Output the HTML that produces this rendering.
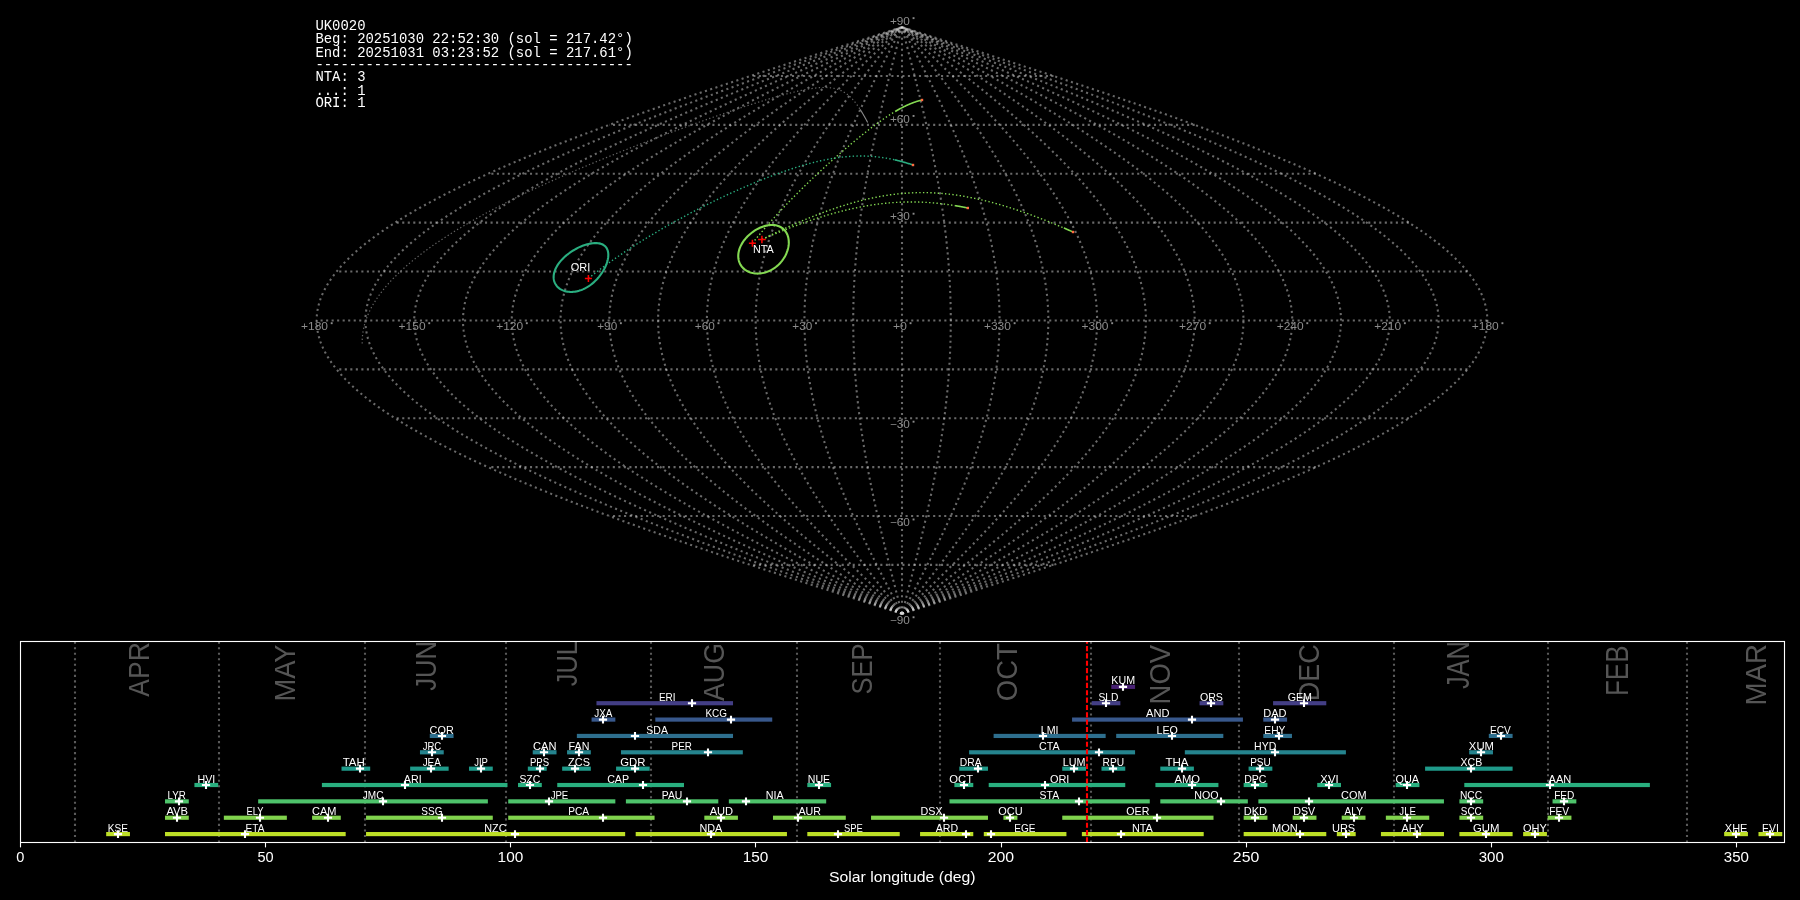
<!DOCTYPE html>
<html><head><meta charset="utf-8"><style>
html,body{margin:0;padding:0;background:#000;width:1800px;height:900px;overflow:hidden}
svg{display:block;will-change:transform}
</style></head><body>
<svg width="1800" height="900" viewBox="0 0 1800 900">
<rect width="1800" height="900" fill="#000"/>
<g fill="none" stroke="#d8d8d8" stroke-opacity="0.485" stroke-width="2.08" stroke-dasharray="2.08 3.44">
<path d="M902.00 613.81 L907.11 612.18 L912.22 610.55 L917.32 608.92 L922.43 607.29 L927.53 605.66 L932.64 604.03 L937.74 602.40 L942.83 600.77 L947.93 599.14 L953.02 597.51 L958.10 595.88 L963.19 594.25 L968.26 592.62 L973.34 590.99 L978.40 589.36 L983.47 587.73 L988.52 586.10 L993.57 584.47 L998.61 582.84 L1003.65 581.21 L1008.67 579.58 L1013.69 577.95 L1018.70 576.32 L1023.70 574.69 L1028.70 573.06 L1033.68 571.43 L1038.65 569.80 L1043.61 568.17 L1048.56 566.54 L1053.50 564.91 L1058.43 563.28 L1063.35 561.65 L1068.25 560.02 L1073.14 558.39 L1078.02 556.76 L1082.89 555.13 L1087.74 553.50 L1092.57 551.87 L1097.40 550.24 L1102.20 548.62 L1107.00 546.99 L1111.77 545.36 L1116.54 543.73 L1121.28 542.10 L1126.01 540.47 L1130.72 538.84 L1135.41 537.21 L1140.09 535.58 L1144.74 533.95 L1149.38 532.32 L1154.00 530.69 L1158.60 529.06 L1163.19 527.43 L1167.75 525.80 L1172.29 524.17 L1176.81 522.54 L1181.31 520.91 L1185.79 519.28 L1190.25 517.65 L1194.68 516.02 L1199.09 514.39 L1203.48 512.76 L1207.85 511.13 L1212.19 509.50 L1216.51 507.87 L1220.81 506.24 L1225.08 504.61 L1229.33 502.98 L1233.55 501.35 L1237.75 499.72 L1241.92 498.09 L1246.07 496.46 L1250.19 494.83 L1254.28 493.20 L1258.34 491.57 L1262.38 489.94 L1266.40 488.31 L1270.38 486.68 L1274.33 485.05 L1278.26 483.42 L1282.16 481.80 L1286.03 480.17 L1289.87 478.54 L1293.68 476.91 L1297.46 475.28 L1301.21 473.65 L1304.94 472.02 L1308.63 470.39 L1312.28 468.76 L1315.91 467.13 L1319.51 465.50 L1323.07 463.87 L1326.61 462.24 L1330.11 460.61 L1333.57 458.98 L1337.01 457.35 L1340.41 455.72 L1343.78 454.09 L1347.11 452.46 L1350.41 450.83 L1353.68 449.20 L1356.91 447.57 L1360.11 445.94 L1363.27 444.31 L1366.40 442.68 L1369.49 441.05 L1372.55 439.42 L1375.57 437.79 L1378.55 436.16 L1381.50 434.53 L1384.41 432.90 L1387.29 431.27 L1390.12 429.64 L1392.92 428.01 L1395.69 426.38 L1398.41 424.75 L1401.10 423.12 L1403.75 421.49 L1406.36 419.86 L1408.94 418.24 L1411.47 416.61 L1413.97 414.98 L1416.42 413.35 L1418.84 411.72 L1421.22 410.09 L1423.56 408.46 L1425.86 406.83 L1428.12 405.20 L1430.34 403.57 L1432.52 401.94 L1434.65 400.31 L1436.75 398.68 L1438.81 397.05 L1440.83 395.42 L1442.80 393.79 L1444.74 392.16 L1446.63 390.53 L1448.48 388.90 L1450.29 387.27 L1452.06 385.64 L1453.78 384.01 L1455.47 382.38 L1457.11 380.75 L1458.71 379.12 L1460.27 377.49 L1461.78 375.86 L1463.25 374.23 L1464.68 372.60 L1466.07 370.97 L1467.41 369.34 L1468.71 367.71 L1469.97 366.08 L1471.19 364.45 L1472.36 362.82 L1473.48 361.19 L1474.57 359.56 L1475.61 357.93 L1476.61 356.30 L1477.56 354.67 L1478.47 353.04 L1479.33 351.42 L1480.15 349.79 L1480.93 348.16 L1481.66 346.53 L1482.35 344.90 L1483.00 343.27 L1483.60 341.64 L1484.15 340.01 L1484.67 338.38 L1485.13 336.75 L1485.56 335.12 L1485.93 333.49 L1486.27 331.86 L1486.56 330.23 L1486.80 328.60 L1487.00 326.97 L1487.16 325.34 L1487.27 323.71 L1487.34 322.08 L1487.36 320.45 L1487.34 318.82 L1487.27 317.19 L1487.16 315.56 L1487.00 313.93 L1486.80 312.30 L1486.56 310.67 L1486.27 309.04 L1485.93 307.41 L1485.56 305.78 L1485.13 304.15 L1484.67 302.52 L1484.15 300.89 L1483.60 299.26 L1483.00 297.63 L1482.35 296.00 L1481.66 294.37 L1480.93 292.74 L1480.15 291.11 L1479.33 289.48 L1478.47 287.86 L1477.56 286.23 L1476.61 284.60 L1475.61 282.97 L1474.57 281.34 L1473.48 279.71 L1472.36 278.08 L1471.19 276.45 L1469.97 274.82 L1468.71 273.19 L1467.41 271.56 L1466.07 269.93 L1464.68 268.30 L1463.25 266.67 L1461.78 265.04 L1460.27 263.41 L1458.71 261.78 L1457.11 260.15 L1455.47 258.52 L1453.78 256.89 L1452.06 255.26 L1450.29 253.63 L1448.48 252.00 L1446.63 250.37 L1444.74 248.74 L1442.80 247.11 L1440.83 245.48 L1438.81 243.85 L1436.75 242.22 L1434.65 240.59 L1432.52 238.96 L1430.34 237.33 L1428.12 235.70 L1425.86 234.07 L1423.56 232.44 L1421.22 230.81 L1418.84 229.18 L1416.42 227.55 L1413.97 225.92 L1411.47 224.29 L1408.94 222.66 L1406.36 221.04 L1403.75 219.41 L1401.10 217.78 L1398.41 216.15 L1395.69 214.52 L1392.92 212.89 L1390.12 211.26 L1387.29 209.63 L1384.41 208.00 L1381.50 206.37 L1378.55 204.74 L1375.57 203.11 L1372.55 201.48 L1369.49 199.85 L1366.40 198.22 L1363.27 196.59 L1360.11 194.96 L1356.91 193.33 L1353.68 191.70 L1350.41 190.07 L1347.11 188.44 L1343.78 186.81 L1340.41 185.18 L1337.01 183.55 L1333.57 181.92 L1330.11 180.29 L1326.61 178.66 L1323.07 177.03 L1319.51 175.40 L1315.91 173.77 L1312.28 172.14 L1308.63 170.51 L1304.94 168.88 L1301.21 167.25 L1297.46 165.62 L1293.68 163.99 L1289.87 162.36 L1286.03 160.73 L1282.16 159.10 L1278.26 157.47 L1274.33 155.85 L1270.38 154.22 L1266.40 152.59 L1262.38 150.96 L1258.34 149.33 L1254.28 147.70 L1250.19 146.07 L1246.07 144.44 L1241.92 142.81 L1237.75 141.18 L1233.55 139.55 L1229.33 137.92 L1225.08 136.29 L1220.81 134.66 L1216.51 133.03 L1212.19 131.40 L1207.85 129.77 L1203.48 128.14 L1199.09 126.51 L1194.68 124.88 L1190.25 123.25 L1185.79 121.62 L1181.31 119.99 L1176.81 118.36 L1172.29 116.73 L1167.75 115.10 L1163.19 113.47 L1158.60 111.84 L1154.00 110.21 L1149.38 108.58 L1144.74 106.95 L1140.09 105.32 L1135.41 103.69 L1130.72 102.06 L1126.01 100.43 L1121.28 98.80 L1116.54 97.17 L1111.77 95.54 L1107.00 93.91 L1102.20 92.28 L1097.40 90.66 L1092.57 89.03 L1087.74 87.40 L1082.89 85.77 L1078.02 84.14 L1073.14 82.51 L1068.25 80.88 L1063.35 79.25 L1058.43 77.62 L1053.50 75.99 L1048.56 74.36 L1043.61 72.73 L1038.65 71.10 L1033.68 69.47 L1028.70 67.84 L1023.70 66.21 L1018.70 64.58 L1013.69 62.95 L1008.67 61.32 L1003.65 59.69 L998.61 58.06 L993.57 56.43 L988.52 54.80 L983.47 53.17 L978.40 51.54 L973.34 49.91 L968.26 48.28 L963.19 46.65 L958.10 45.02 L953.02 43.39 L947.93 41.76 L942.83 40.13 L937.74 38.50 L932.64 36.87 L927.53 35.24 L922.43 33.61 L917.32 31.98 L912.22 30.35 L907.11 28.72 L902.00 27.09"/>
<path d="M902.00 613.81 L906.68 612.18 L911.36 610.55 L916.05 608.92 L920.73 607.29 L925.41 605.66 L930.08 604.03 L934.76 602.40 L939.43 600.77 L944.10 599.14 L948.77 597.51 L953.43 595.88 L958.09 594.25 L962.74 592.62 L967.39 590.99 L972.04 589.36 L976.68 587.73 L981.31 586.10 L985.94 584.47 L990.56 582.84 L995.18 581.21 L999.78 579.58 L1004.38 577.95 L1008.98 576.32 L1013.56 574.69 L1018.14 573.06 L1022.70 571.43 L1027.26 569.80 L1031.81 568.17 L1036.35 566.54 L1040.88 564.91 L1045.39 563.28 L1049.90 561.65 L1054.40 560.02 L1058.88 558.39 L1063.35 556.76 L1067.81 555.13 L1072.26 553.50 L1076.69 551.87 L1081.11 550.24 L1085.52 548.62 L1089.91 546.99 L1094.29 545.36 L1098.66 543.73 L1103.01 542.10 L1107.34 540.47 L1111.66 538.84 L1115.96 537.21 L1120.25 535.58 L1124.52 533.95 L1128.77 532.32 L1133.00 530.69 L1137.22 529.06 L1141.42 527.43 L1145.60 525.80 L1149.77 524.17 L1153.91 522.54 L1158.03 520.91 L1162.14 519.28 L1166.22 517.65 L1170.29 516.02 L1174.33 514.39 L1178.36 512.76 L1182.36 511.13 L1186.34 509.50 L1190.30 507.87 L1194.24 506.24 L1198.16 504.61 L1202.05 502.98 L1205.92 501.35 L1209.77 499.72 L1213.59 498.09 L1217.39 496.46 L1221.17 494.83 L1224.92 493.20 L1228.65 491.57 L1232.35 489.94 L1236.03 488.31 L1239.68 486.68 L1243.31 485.05 L1246.91 483.42 L1250.48 481.80 L1254.03 480.17 L1257.55 478.54 L1261.04 476.91 L1264.51 475.28 L1267.95 473.65 L1271.36 472.02 L1274.74 470.39 L1278.09 468.76 L1281.42 467.13 L1284.72 465.50 L1287.98 463.87 L1291.22 462.24 L1294.43 460.61 L1297.61 458.98 L1300.76 457.35 L1303.87 455.72 L1306.96 454.09 L1310.02 452.46 L1313.04 450.83 L1316.04 449.20 L1319.00 447.57 L1321.93 445.94 L1324.83 444.31 L1327.70 442.68 L1330.53 441.05 L1333.33 439.42 L1336.10 437.79 L1338.84 436.16 L1341.54 434.53 L1344.21 432.90 L1346.84 431.27 L1349.45 429.64 L1352.01 428.01 L1354.55 426.38 L1357.05 424.75 L1359.51 423.12 L1361.94 421.49 L1364.33 419.86 L1366.69 418.24 L1369.02 416.61 L1371.30 414.98 L1373.56 413.35 L1375.77 411.72 L1377.95 410.09 L1380.10 408.46 L1382.20 406.83 L1384.27 405.20 L1386.31 403.57 L1388.31 401.94 L1390.27 400.31 L1392.19 398.68 L1394.08 397.05 L1395.92 395.42 L1397.74 393.79 L1399.51 392.16 L1401.24 390.53 L1402.94 388.90 L1404.60 387.27 L1406.22 385.64 L1407.80 384.01 L1409.35 382.38 L1410.85 380.75 L1412.32 379.12 L1413.75 377.49 L1415.13 375.86 L1416.48 374.23 L1417.79 372.60 L1419.06 370.97 L1420.30 369.34 L1421.49 367.71 L1422.64 366.08 L1423.75 364.45 L1424.83 362.82 L1425.86 361.19 L1426.85 359.56 L1427.81 357.93 L1428.72 356.30 L1429.59 354.67 L1430.43 353.04 L1431.22 351.42 L1431.97 349.79 L1432.69 348.16 L1433.36 346.53 L1433.99 344.90 L1434.58 343.27 L1435.13 341.64 L1435.64 340.01 L1436.11 338.38 L1436.54 336.75 L1436.93 335.12 L1437.27 333.49 L1437.58 331.86 L1437.84 330.23 L1438.07 328.60 L1438.25 326.97 L1438.40 325.34 L1438.50 323.71 L1438.56 322.08 L1438.58 320.45 L1438.56 318.82 L1438.50 317.19 L1438.40 315.56 L1438.25 313.93 L1438.07 312.30 L1437.84 310.67 L1437.58 309.04 L1437.27 307.41 L1436.93 305.78 L1436.54 304.15 L1436.11 302.52 L1435.64 300.89 L1435.13 299.26 L1434.58 297.63 L1433.99 296.00 L1433.36 294.37 L1432.69 292.74 L1431.97 291.11 L1431.22 289.48 L1430.43 287.86 L1429.59 286.23 L1428.72 284.60 L1427.81 282.97 L1426.85 281.34 L1425.86 279.71 L1424.83 278.08 L1423.75 276.45 L1422.64 274.82 L1421.49 273.19 L1420.30 271.56 L1419.06 269.93 L1417.79 268.30 L1416.48 266.67 L1415.13 265.04 L1413.75 263.41 L1412.32 261.78 L1410.85 260.15 L1409.35 258.52 L1407.80 256.89 L1406.22 255.26 L1404.60 253.63 L1402.94 252.00 L1401.24 250.37 L1399.51 248.74 L1397.74 247.11 L1395.92 245.48 L1394.08 243.85 L1392.19 242.22 L1390.27 240.59 L1388.31 238.96 L1386.31 237.33 L1384.27 235.70 L1382.20 234.07 L1380.10 232.44 L1377.95 230.81 L1375.77 229.18 L1373.56 227.55 L1371.30 225.92 L1369.02 224.29 L1366.69 222.66 L1364.33 221.04 L1361.94 219.41 L1359.51 217.78 L1357.05 216.15 L1354.55 214.52 L1352.01 212.89 L1349.45 211.26 L1346.84 209.63 L1344.21 208.00 L1341.54 206.37 L1338.84 204.74 L1336.10 203.11 L1333.33 201.48 L1330.53 199.85 L1327.70 198.22 L1324.83 196.59 L1321.93 194.96 L1319.00 193.33 L1316.04 191.70 L1313.04 190.07 L1310.02 188.44 L1306.96 186.81 L1303.87 185.18 L1300.76 183.55 L1297.61 181.92 L1294.43 180.29 L1291.22 178.66 L1287.98 177.03 L1284.72 175.40 L1281.42 173.77 L1278.09 172.14 L1274.74 170.51 L1271.36 168.88 L1267.95 167.25 L1264.51 165.62 L1261.04 163.99 L1257.55 162.36 L1254.03 160.73 L1250.48 159.10 L1246.91 157.47 L1243.31 155.85 L1239.68 154.22 L1236.03 152.59 L1232.35 150.96 L1228.65 149.33 L1224.92 147.70 L1221.17 146.07 L1217.39 144.44 L1213.59 142.81 L1209.77 141.18 L1205.92 139.55 L1202.05 137.92 L1198.16 136.29 L1194.24 134.66 L1190.30 133.03 L1186.34 131.40 L1182.36 129.77 L1178.36 128.14 L1174.33 126.51 L1170.29 124.88 L1166.22 123.25 L1162.14 121.62 L1158.03 119.99 L1153.91 118.36 L1149.77 116.73 L1145.60 115.10 L1141.42 113.47 L1137.22 111.84 L1133.00 110.21 L1128.77 108.58 L1124.52 106.95 L1120.25 105.32 L1115.96 103.69 L1111.66 102.06 L1107.34 100.43 L1103.01 98.80 L1098.66 97.17 L1094.29 95.54 L1089.91 93.91 L1085.52 92.28 L1081.11 90.66 L1076.69 89.03 L1072.26 87.40 L1067.81 85.77 L1063.35 84.14 L1058.88 82.51 L1054.40 80.88 L1049.90 79.25 L1045.39 77.62 L1040.88 75.99 L1036.35 74.36 L1031.81 72.73 L1027.26 71.10 L1022.70 69.47 L1018.14 67.84 L1013.56 66.21 L1008.98 64.58 L1004.38 62.95 L999.78 61.32 L995.18 59.69 L990.56 58.06 L985.94 56.43 L981.31 54.80 L976.68 53.17 L972.04 51.54 L967.39 49.91 L962.74 48.28 L958.09 46.65 L953.43 45.02 L948.77 43.39 L944.10 41.76 L939.43 40.13 L934.76 38.50 L930.08 36.87 L925.41 35.24 L920.73 33.61 L916.05 31.98 L911.36 30.35 L906.68 28.72 L902.00 27.09"/>
<path d="M902.00 613.81 L906.26 612.18 L910.51 610.55 L914.77 608.92 L919.02 607.29 L923.28 605.66 L927.53 604.03 L931.78 602.40 L936.03 600.77 L940.27 599.14 L944.51 597.51 L948.75 595.88 L952.99 594.25 L957.22 592.62 L961.45 590.99 L965.67 589.36 L969.89 587.73 L974.10 586.10 L978.31 584.47 L982.51 582.84 L986.71 581.21 L990.89 579.58 L995.08 577.95 L999.25 576.32 L1003.42 574.69 L1007.58 573.06 L1011.73 571.43 L1015.87 569.80 L1020.01 568.17 L1024.14 566.54 L1028.25 564.91 L1032.36 563.28 L1036.46 561.65 L1040.54 560.02 L1044.62 558.39 L1048.68 556.76 L1052.74 555.13 L1056.78 553.50 L1060.81 551.87 L1064.83 550.24 L1068.84 548.62 L1072.83 546.99 L1076.81 545.36 L1080.78 543.73 L1084.73 542.10 L1088.67 540.47 L1092.60 538.84 L1096.51 537.21 L1100.41 535.58 L1104.29 533.95 L1108.15 532.32 L1112.00 530.69 L1115.84 529.06 L1119.66 527.43 L1123.46 525.80 L1127.24 524.17 L1131.01 522.54 L1134.76 520.91 L1138.49 519.28 L1142.20 517.65 L1145.90 516.02 L1149.58 514.39 L1153.24 512.76 L1156.87 511.13 L1160.49 509.50 L1164.09 507.87 L1167.67 506.24 L1171.23 504.61 L1174.77 502.98 L1178.29 501.35 L1181.79 499.72 L1185.27 498.09 L1188.72 496.46 L1192.15 494.83 L1195.57 493.20 L1198.95 491.57 L1202.32 489.94 L1205.66 488.31 L1208.98 486.68 L1212.28 485.05 L1215.55 483.42 L1218.80 481.80 L1222.03 480.17 L1225.23 478.54 L1228.40 476.91 L1231.55 475.28 L1234.68 473.65 L1237.78 472.02 L1240.85 470.39 L1243.90 468.76 L1246.93 467.13 L1249.92 465.50 L1252.89 463.87 L1255.84 462.24 L1258.75 460.61 L1261.64 458.98 L1264.51 457.35 L1267.34 455.72 L1270.15 454.09 L1272.93 452.46 L1275.68 450.83 L1278.40 449.20 L1281.09 447.57 L1283.76 445.94 L1286.39 444.31 L1289.00 442.68 L1291.57 441.05 L1294.12 439.42 L1296.64 437.79 L1299.13 436.16 L1301.58 434.53 L1304.01 432.90 L1306.40 431.27 L1308.77 429.64 L1311.10 428.01 L1313.41 426.38 L1315.68 424.75 L1317.92 423.12 L1320.13 421.49 L1322.30 419.86 L1324.45 418.24 L1326.56 416.61 L1328.64 414.98 L1330.69 413.35 L1332.70 411.72 L1334.68 410.09 L1336.63 408.46 L1338.55 406.83 L1340.43 405.20 L1342.28 403.57 L1344.10 401.94 L1345.88 400.31 L1347.63 398.68 L1349.34 397.05 L1351.02 395.42 L1352.67 393.79 L1354.28 392.16 L1355.86 390.53 L1357.40 388.90 L1358.91 387.27 L1360.38 385.64 L1361.82 384.01 L1363.22 382.38 L1364.59 380.75 L1365.93 379.12 L1367.22 377.49 L1368.49 375.86 L1369.71 374.23 L1370.90 372.60 L1372.06 370.97 L1373.18 369.34 L1374.26 367.71 L1375.31 366.08 L1376.32 364.45 L1377.30 362.82 L1378.24 361.19 L1379.14 359.56 L1380.01 357.93 L1380.84 356.30 L1381.63 354.67 L1382.39 353.04 L1383.11 351.42 L1383.79 349.79 L1384.44 348.16 L1385.05 346.53 L1385.63 344.90 L1386.16 343.27 L1386.66 341.64 L1387.13 340.01 L1387.55 338.38 L1387.94 336.75 L1388.30 335.12 L1388.61 333.49 L1388.89 331.86 L1389.13 330.23 L1389.34 328.60 L1389.50 326.97 L1389.63 325.34 L1389.73 323.71 L1389.78 322.08 L1389.80 320.45 L1389.78 318.82 L1389.73 317.19 L1389.63 315.56 L1389.50 313.93 L1389.34 312.30 L1389.13 310.67 L1388.89 309.04 L1388.61 307.41 L1388.30 305.78 L1387.94 304.15 L1387.55 302.52 L1387.13 300.89 L1386.66 299.26 L1386.16 297.63 L1385.63 296.00 L1385.05 294.37 L1384.44 292.74 L1383.79 291.11 L1383.11 289.48 L1382.39 287.86 L1381.63 286.23 L1380.84 284.60 L1380.01 282.97 L1379.14 281.34 L1378.24 279.71 L1377.30 278.08 L1376.32 276.45 L1375.31 274.82 L1374.26 273.19 L1373.18 271.56 L1372.06 269.93 L1370.90 268.30 L1369.71 266.67 L1368.49 265.04 L1367.22 263.41 L1365.93 261.78 L1364.59 260.15 L1363.22 258.52 L1361.82 256.89 L1360.38 255.26 L1358.91 253.63 L1357.40 252.00 L1355.86 250.37 L1354.28 248.74 L1352.67 247.11 L1351.02 245.48 L1349.34 243.85 L1347.63 242.22 L1345.88 240.59 L1344.10 238.96 L1342.28 237.33 L1340.43 235.70 L1338.55 234.07 L1336.63 232.44 L1334.68 230.81 L1332.70 229.18 L1330.69 227.55 L1328.64 225.92 L1326.56 224.29 L1324.45 222.66 L1322.30 221.04 L1320.13 219.41 L1317.92 217.78 L1315.68 216.15 L1313.41 214.52 L1311.10 212.89 L1308.77 211.26 L1306.40 209.63 L1304.01 208.00 L1301.58 206.37 L1299.13 204.74 L1296.64 203.11 L1294.12 201.48 L1291.57 199.85 L1289.00 198.22 L1286.39 196.59 L1283.76 194.96 L1281.09 193.33 L1278.40 191.70 L1275.68 190.07 L1272.93 188.44 L1270.15 186.81 L1267.34 185.18 L1264.51 183.55 L1261.64 181.92 L1258.75 180.29 L1255.84 178.66 L1252.89 177.03 L1249.92 175.40 L1246.93 173.77 L1243.90 172.14 L1240.85 170.51 L1237.78 168.88 L1234.68 167.25 L1231.55 165.62 L1228.40 163.99 L1225.23 162.36 L1222.03 160.73 L1218.80 159.10 L1215.55 157.47 L1212.28 155.85 L1208.98 154.22 L1205.66 152.59 L1202.32 150.96 L1198.95 149.33 L1195.57 147.70 L1192.15 146.07 L1188.72 144.44 L1185.27 142.81 L1181.79 141.18 L1178.29 139.55 L1174.77 137.92 L1171.23 136.29 L1167.67 134.66 L1164.09 133.03 L1160.49 131.40 L1156.87 129.77 L1153.24 128.14 L1149.58 126.51 L1145.90 124.88 L1142.20 123.25 L1138.49 121.62 L1134.76 119.99 L1131.01 118.36 L1127.24 116.73 L1123.46 115.10 L1119.66 113.47 L1115.84 111.84 L1112.00 110.21 L1108.15 108.58 L1104.29 106.95 L1100.41 105.32 L1096.51 103.69 L1092.60 102.06 L1088.67 100.43 L1084.73 98.80 L1080.78 97.17 L1076.81 95.54 L1072.83 93.91 L1068.84 92.28 L1064.83 90.66 L1060.81 89.03 L1056.78 87.40 L1052.74 85.77 L1048.68 84.14 L1044.62 82.51 L1040.54 80.88 L1036.46 79.25 L1032.36 77.62 L1028.25 75.99 L1024.14 74.36 L1020.01 72.73 L1015.87 71.10 L1011.73 69.47 L1007.58 67.84 L1003.42 66.21 L999.25 64.58 L995.08 62.95 L990.89 61.32 L986.71 59.69 L982.51 58.06 L978.31 56.43 L974.10 54.80 L969.89 53.17 L965.67 51.54 L961.45 49.91 L957.22 48.28 L952.99 46.65 L948.75 45.02 L944.51 43.39 L940.27 41.76 L936.03 40.13 L931.78 38.50 L927.53 36.87 L923.28 35.24 L919.02 33.61 L914.77 31.98 L910.51 30.35 L906.26 28.72 L902.00 27.09"/>
<path d="M902.00 613.81 L905.83 612.18 L909.66 610.55 L913.49 608.92 L917.32 607.29 L921.15 605.66 L924.98 604.03 L928.80 602.40 L932.62 600.77 L936.45 599.14 L940.26 597.51 L944.08 595.88 L947.89 594.25 L951.70 592.62 L955.50 590.99 L959.30 589.36 L963.10 587.73 L966.89 586.10 L970.68 584.47 L974.46 582.84 L978.24 581.21 L982.01 579.58 L985.77 577.95 L989.53 576.32 L993.28 574.69 L997.02 573.06 L1000.76 571.43 L1004.49 569.80 L1008.21 568.17 L1011.92 566.54 L1015.63 564.91 L1019.32 563.28 L1023.01 561.65 L1026.69 560.02 L1030.36 558.39 L1034.02 556.76 L1037.66 555.13 L1041.30 553.50 L1044.93 551.87 L1048.55 550.24 L1052.15 548.62 L1055.75 546.99 L1059.33 545.36 L1062.90 543.73 L1066.46 542.10 L1070.01 540.47 L1073.54 538.84 L1077.06 537.21 L1080.57 535.58 L1084.06 533.95 L1087.54 532.32 L1091.00 530.69 L1094.45 529.06 L1097.89 527.43 L1101.31 525.80 L1104.72 524.17 L1108.11 522.54 L1111.48 520.91 L1114.84 519.28 L1118.18 517.65 L1121.51 516.02 L1124.82 514.39 L1128.11 512.76 L1131.39 511.13 L1134.65 509.50 L1137.89 507.87 L1141.11 506.24 L1144.31 504.61 L1147.50 502.98 L1150.66 501.35 L1153.81 499.72 L1156.94 498.09 L1160.05 496.46 L1163.14 494.83 L1166.21 493.20 L1169.26 491.57 L1172.29 489.94 L1175.30 488.31 L1178.28 486.68 L1181.25 485.05 L1184.20 483.42 L1187.12 481.80 L1190.02 480.17 L1192.90 478.54 L1195.76 476.91 L1198.60 475.28 L1201.41 473.65 L1204.20 472.02 L1206.97 470.39 L1209.71 468.76 L1212.43 467.13 L1215.13 465.50 L1217.80 463.87 L1220.45 462.24 L1223.08 460.61 L1225.68 458.98 L1228.26 457.35 L1230.81 455.72 L1233.33 454.09 L1235.83 452.46 L1238.31 450.83 L1240.76 449.20 L1243.18 447.57 L1245.58 445.94 L1247.95 444.31 L1250.30 442.68 L1252.62 441.05 L1254.91 439.42 L1257.17 437.79 L1259.41 436.16 L1261.62 434.53 L1263.81 432.90 L1265.96 431.27 L1268.09 429.64 L1270.19 428.01 L1272.27 426.38 L1274.31 424.75 L1276.33 423.12 L1278.31 421.49 L1280.27 419.86 L1282.20 418.24 L1284.10 416.61 L1285.98 414.98 L1287.82 413.35 L1289.63 411.72 L1291.42 410.09 L1293.17 408.46 L1294.89 406.83 L1296.59 405.20 L1298.25 403.57 L1299.89 401.94 L1301.49 400.31 L1303.06 398.68 L1304.61 397.05 L1306.12 395.42 L1307.60 393.79 L1309.05 392.16 L1310.47 390.53 L1311.86 388.90 L1313.22 387.27 L1314.54 385.64 L1315.84 384.01 L1317.10 382.38 L1318.33 380.75 L1319.53 379.12 L1320.70 377.49 L1321.84 375.86 L1322.94 374.23 L1324.01 372.60 L1325.05 370.97 L1326.06 369.34 L1327.04 367.71 L1327.98 366.08 L1328.89 364.45 L1329.77 362.82 L1330.61 361.19 L1331.43 359.56 L1332.21 357.93 L1332.95 356.30 L1333.67 354.67 L1334.35 353.04 L1335.00 351.42 L1335.61 349.79 L1336.20 348.16 L1336.75 346.53 L1337.26 344.90 L1337.75 343.27 L1338.20 341.64 L1338.62 340.01 L1339.00 338.38 L1339.35 336.75 L1339.67 335.12 L1339.95 333.49 L1340.20 331.86 L1340.42 330.23 L1340.60 328.60 L1340.75 326.97 L1340.87 325.34 L1340.95 323.71 L1341.00 322.08 L1341.02 320.45 L1341.00 318.82 L1340.95 317.19 L1340.87 315.56 L1340.75 313.93 L1340.60 312.30 L1340.42 310.67 L1340.20 309.04 L1339.95 307.41 L1339.67 305.78 L1339.35 304.15 L1339.00 302.52 L1338.62 300.89 L1338.20 299.26 L1337.75 297.63 L1337.26 296.00 L1336.75 294.37 L1336.20 292.74 L1335.61 291.11 L1335.00 289.48 L1334.35 287.86 L1333.67 286.23 L1332.95 284.60 L1332.21 282.97 L1331.43 281.34 L1330.61 279.71 L1329.77 278.08 L1328.89 276.45 L1327.98 274.82 L1327.04 273.19 L1326.06 271.56 L1325.05 269.93 L1324.01 268.30 L1322.94 266.67 L1321.84 265.04 L1320.70 263.41 L1319.53 261.78 L1318.33 260.15 L1317.10 258.52 L1315.84 256.89 L1314.54 255.26 L1313.22 253.63 L1311.86 252.00 L1310.47 250.37 L1309.05 248.74 L1307.60 247.11 L1306.12 245.48 L1304.61 243.85 L1303.06 242.22 L1301.49 240.59 L1299.89 238.96 L1298.25 237.33 L1296.59 235.70 L1294.89 234.07 L1293.17 232.44 L1291.42 230.81 L1289.63 229.18 L1287.82 227.55 L1285.98 225.92 L1284.10 224.29 L1282.20 222.66 L1280.27 221.04 L1278.31 219.41 L1276.33 217.78 L1274.31 216.15 L1272.27 214.52 L1270.19 212.89 L1268.09 211.26 L1265.96 209.63 L1263.81 208.00 L1261.62 206.37 L1259.41 204.74 L1257.17 203.11 L1254.91 201.48 L1252.62 199.85 L1250.30 198.22 L1247.95 196.59 L1245.58 194.96 L1243.18 193.33 L1240.76 191.70 L1238.31 190.07 L1235.83 188.44 L1233.33 186.81 L1230.81 185.18 L1228.26 183.55 L1225.68 181.92 L1223.08 180.29 L1220.45 178.66 L1217.80 177.03 L1215.13 175.40 L1212.43 173.77 L1209.71 172.14 L1206.97 170.51 L1204.20 168.88 L1201.41 167.25 L1198.60 165.62 L1195.76 163.99 L1192.90 162.36 L1190.02 160.73 L1187.12 159.10 L1184.20 157.47 L1181.25 155.85 L1178.28 154.22 L1175.30 152.59 L1172.29 150.96 L1169.26 149.33 L1166.21 147.70 L1163.14 146.07 L1160.05 144.44 L1156.94 142.81 L1153.81 141.18 L1150.66 139.55 L1147.50 137.92 L1144.31 136.29 L1141.11 134.66 L1137.89 133.03 L1134.65 131.40 L1131.39 129.77 L1128.11 128.14 L1124.82 126.51 L1121.51 124.88 L1118.18 123.25 L1114.84 121.62 L1111.48 119.99 L1108.11 118.36 L1104.72 116.73 L1101.31 115.10 L1097.89 113.47 L1094.45 111.84 L1091.00 110.21 L1087.54 108.58 L1084.06 106.95 L1080.57 105.32 L1077.06 103.69 L1073.54 102.06 L1070.01 100.43 L1066.46 98.80 L1062.90 97.17 L1059.33 95.54 L1055.75 93.91 L1052.15 92.28 L1048.55 90.66 L1044.93 89.03 L1041.30 87.40 L1037.66 85.77 L1034.02 84.14 L1030.36 82.51 L1026.69 80.88 L1023.01 79.25 L1019.32 77.62 L1015.63 75.99 L1011.92 74.36 L1008.21 72.73 L1004.49 71.10 L1000.76 69.47 L997.02 67.84 L993.28 66.21 L989.53 64.58 L985.77 62.95 L982.01 61.32 L978.24 59.69 L974.46 58.06 L970.68 56.43 L966.89 54.80 L963.10 53.17 L959.30 51.54 L955.50 49.91 L951.70 48.28 L947.89 46.65 L944.08 45.02 L940.26 43.39 L936.45 41.76 L932.62 40.13 L928.80 38.50 L924.98 36.87 L921.15 35.24 L917.32 33.61 L913.49 31.98 L909.66 30.35 L905.83 28.72 L902.00 27.09"/>
<path d="M902.00 613.81 L905.41 612.18 L908.81 610.55 L912.22 608.92 L915.62 607.29 L919.02 605.66 L922.42 604.03 L925.82 602.40 L929.22 600.77 L932.62 599.14 L936.01 597.51 L939.40 595.88 L942.79 594.25 L946.18 592.62 L949.56 590.99 L952.94 589.36 L956.31 587.73 L959.68 586.10 L963.05 584.47 L966.41 582.84 L969.76 581.21 L973.12 579.58 L976.46 577.95 L979.80 576.32 L983.14 574.69 L986.46 573.06 L989.78 571.43 L993.10 569.80 L996.41 568.17 L999.71 566.54 L1003.00 564.91 L1006.29 563.28 L1009.56 561.65 L1012.83 560.02 L1016.10 558.39 L1019.35 556.76 L1022.59 555.13 L1025.82 553.50 L1029.05 551.87 L1032.26 550.24 L1035.47 548.62 L1038.66 546.99 L1041.85 545.36 L1045.02 543.73 L1048.19 542.10 L1051.34 540.47 L1054.48 538.84 L1057.61 537.21 L1060.72 535.58 L1063.83 533.95 L1066.92 532.32 L1070.00 530.69 L1073.07 529.06 L1076.12 527.43 L1079.17 525.80 L1082.19 524.17 L1085.21 522.54 L1088.21 520.91 L1091.19 519.28 L1094.16 517.65 L1097.12 516.02 L1100.06 514.39 L1102.99 512.76 L1105.90 511.13 L1108.80 509.50 L1111.68 507.87 L1114.54 506.24 L1117.39 504.61 L1120.22 502.98 L1123.03 501.35 L1125.83 499.72 L1128.61 498.09 L1131.38 496.46 L1134.12 494.83 L1136.85 493.20 L1139.56 491.57 L1142.26 489.94 L1144.93 488.31 L1147.59 486.68 L1150.22 485.05 L1152.84 483.42 L1155.44 481.80 L1158.02 480.17 L1160.58 478.54 L1163.12 476.91 L1165.64 475.28 L1168.14 473.65 L1170.62 472.02 L1173.08 470.39 L1175.52 468.76 L1177.94 467.13 L1180.34 465.50 L1182.72 463.87 L1185.07 462.24 L1187.40 460.61 L1189.72 458.98 L1192.00 457.35 L1194.27 455.72 L1196.52 454.09 L1198.74 452.46 L1200.94 450.83 L1203.12 449.20 L1205.27 447.57 L1207.41 445.94 L1209.51 444.31 L1211.60 442.68 L1213.66 441.05 L1215.70 439.42 L1217.71 437.79 L1219.70 436.16 L1221.67 434.53 L1223.61 432.90 L1225.52 431.27 L1227.42 429.64 L1229.28 428.01 L1231.13 426.38 L1232.94 424.75 L1234.73 423.12 L1236.50 421.49 L1238.24 419.86 L1239.96 418.24 L1241.65 416.61 L1243.31 414.98 L1244.95 413.35 L1246.56 411.72 L1248.15 410.09 L1249.71 408.46 L1251.24 406.83 L1252.75 405.20 L1254.22 403.57 L1255.68 401.94 L1257.10 400.31 L1258.50 398.68 L1259.87 397.05 L1261.22 395.42 L1262.53 393.79 L1263.82 392.16 L1265.09 390.53 L1266.32 388.90 L1267.53 387.27 L1268.71 385.64 L1269.86 384.01 L1270.98 382.38 L1272.07 380.75 L1273.14 379.12 L1274.18 377.49 L1275.19 375.86 L1276.17 374.23 L1277.12 372.60 L1278.05 370.97 L1278.94 369.34 L1279.81 367.71 L1280.65 366.08 L1281.46 364.45 L1282.24 362.82 L1282.99 361.19 L1283.71 359.56 L1284.41 357.93 L1285.07 356.30 L1285.71 354.67 L1286.31 353.04 L1286.89 351.42 L1287.44 349.79 L1287.95 348.16 L1288.44 346.53 L1288.90 344.90 L1289.33 343.27 L1289.73 341.64 L1290.10 340.01 L1290.44 338.38 L1290.76 336.75 L1291.04 335.12 L1291.29 333.49 L1291.51 331.86 L1291.71 330.23 L1291.87 328.60 L1292.00 326.97 L1292.11 325.34 L1292.18 323.71 L1292.23 322.08 L1292.24 320.45 L1292.23 318.82 L1292.18 317.19 L1292.11 315.56 L1292.00 313.93 L1291.87 312.30 L1291.71 310.67 L1291.51 309.04 L1291.29 307.41 L1291.04 305.78 L1290.76 304.15 L1290.44 302.52 L1290.10 300.89 L1289.73 299.26 L1289.33 297.63 L1288.90 296.00 L1288.44 294.37 L1287.95 292.74 L1287.44 291.11 L1286.89 289.48 L1286.31 287.86 L1285.71 286.23 L1285.07 284.60 L1284.41 282.97 L1283.71 281.34 L1282.99 279.71 L1282.24 278.08 L1281.46 276.45 L1280.65 274.82 L1279.81 273.19 L1278.94 271.56 L1278.05 269.93 L1277.12 268.30 L1276.17 266.67 L1275.19 265.04 L1274.18 263.41 L1273.14 261.78 L1272.07 260.15 L1270.98 258.52 L1269.86 256.89 L1268.71 255.26 L1267.53 253.63 L1266.32 252.00 L1265.09 250.37 L1263.82 248.74 L1262.53 247.11 L1261.22 245.48 L1259.87 243.85 L1258.50 242.22 L1257.10 240.59 L1255.68 238.96 L1254.22 237.33 L1252.75 235.70 L1251.24 234.07 L1249.71 232.44 L1248.15 230.81 L1246.56 229.18 L1244.95 227.55 L1243.31 225.92 L1241.65 224.29 L1239.96 222.66 L1238.24 221.04 L1236.50 219.41 L1234.73 217.78 L1232.94 216.15 L1231.13 214.52 L1229.28 212.89 L1227.42 211.26 L1225.52 209.63 L1223.61 208.00 L1221.67 206.37 L1219.70 204.74 L1217.71 203.11 L1215.70 201.48 L1213.66 199.85 L1211.60 198.22 L1209.51 196.59 L1207.41 194.96 L1205.27 193.33 L1203.12 191.70 L1200.94 190.07 L1198.74 188.44 L1196.52 186.81 L1194.27 185.18 L1192.00 183.55 L1189.72 181.92 L1187.40 180.29 L1185.07 178.66 L1182.72 177.03 L1180.34 175.40 L1177.94 173.77 L1175.52 172.14 L1173.08 170.51 L1170.62 168.88 L1168.14 167.25 L1165.64 165.62 L1163.12 163.99 L1160.58 162.36 L1158.02 160.73 L1155.44 159.10 L1152.84 157.47 L1150.22 155.85 L1147.59 154.22 L1144.93 152.59 L1142.26 150.96 L1139.56 149.33 L1136.85 147.70 L1134.12 146.07 L1131.38 144.44 L1128.61 142.81 L1125.83 141.18 L1123.03 139.55 L1120.22 137.92 L1117.39 136.29 L1114.54 134.66 L1111.68 133.03 L1108.80 131.40 L1105.90 129.77 L1102.99 128.14 L1100.06 126.51 L1097.12 124.88 L1094.16 123.25 L1091.19 121.62 L1088.21 119.99 L1085.21 118.36 L1082.19 116.73 L1079.17 115.10 L1076.12 113.47 L1073.07 111.84 L1070.00 110.21 L1066.92 108.58 L1063.83 106.95 L1060.72 105.32 L1057.61 103.69 L1054.48 102.06 L1051.34 100.43 L1048.19 98.80 L1045.02 97.17 L1041.85 95.54 L1038.66 93.91 L1035.47 92.28 L1032.26 90.66 L1029.05 89.03 L1025.82 87.40 L1022.59 85.77 L1019.35 84.14 L1016.10 82.51 L1012.83 80.88 L1009.56 79.25 L1006.29 77.62 L1003.00 75.99 L999.71 74.36 L996.41 72.73 L993.10 71.10 L989.78 69.47 L986.46 67.84 L983.14 66.21 L979.80 64.58 L976.46 62.95 L973.12 61.32 L969.76 59.69 L966.41 58.06 L963.05 56.43 L959.68 54.80 L956.31 53.17 L952.94 51.54 L949.56 49.91 L946.18 48.28 L942.79 46.65 L939.40 45.02 L936.01 43.39 L932.62 41.76 L929.22 40.13 L925.82 38.50 L922.42 36.87 L919.02 35.24 L915.62 33.61 L912.22 31.98 L908.81 30.35 L905.41 28.72 L902.00 27.09"/>
<path d="M902.00 613.81 L904.98 612.18 L907.96 610.55 L910.94 608.92 L913.92 607.29 L916.89 605.66 L919.87 604.03 L922.85 602.40 L925.82 600.77 L928.79 599.14 L931.76 597.51 L934.73 595.88 L937.69 594.25 L940.65 592.62 L943.61 590.99 L946.57 589.36 L949.52 587.73 L952.47 586.10 L955.42 584.47 L958.36 582.84 L961.29 581.21 L964.23 579.58 L967.15 577.95 L970.08 576.32 L972.99 574.69 L975.91 573.06 L978.81 571.43 L981.71 569.80 L984.61 568.17 L987.49 566.54 L990.38 564.91 L993.25 563.28 L996.12 561.65 L998.98 560.02 L1001.83 558.39 L1004.68 556.76 L1007.52 555.13 L1010.35 553.50 L1013.17 551.87 L1015.98 550.24 L1018.79 548.62 L1021.58 546.99 L1024.37 545.36 L1027.15 543.73 L1029.91 542.10 L1032.67 540.47 L1035.42 538.84 L1038.16 537.21 L1040.88 535.58 L1043.60 533.95 L1046.31 532.32 L1049.00 530.69 L1051.69 529.06 L1054.36 527.43 L1057.02 525.80 L1059.67 524.17 L1062.31 522.54 L1064.93 520.91 L1067.54 519.28 L1070.14 517.65 L1072.73 516.02 L1075.30 514.39 L1077.86 512.76 L1080.41 511.13 L1082.95 509.50 L1085.47 507.87 L1087.97 506.24 L1090.46 504.61 L1092.94 502.98 L1095.41 501.35 L1097.85 499.72 L1100.29 498.09 L1102.71 496.46 L1105.11 494.83 L1107.50 493.20 L1109.87 491.57 L1112.22 489.94 L1114.56 488.31 L1116.89 486.68 L1119.20 485.05 L1121.49 483.42 L1123.76 481.80 L1126.02 480.17 L1128.26 478.54 L1130.48 476.91 L1132.69 475.28 L1134.88 473.65 L1137.05 472.02 L1139.20 470.39 L1141.33 468.76 L1143.45 467.13 L1145.55 465.50 L1147.63 463.87 L1149.69 462.24 L1151.73 460.61 L1153.75 458.98 L1155.75 457.35 L1157.74 455.72 L1159.70 454.09 L1161.65 452.46 L1163.57 450.83 L1165.48 449.20 L1167.36 447.57 L1169.23 445.94 L1171.07 444.31 L1172.90 442.68 L1174.70 441.05 L1176.48 439.42 L1178.25 437.79 L1179.99 436.16 L1181.71 434.53 L1183.41 432.90 L1185.08 431.27 L1186.74 429.64 L1188.37 428.01 L1189.98 426.38 L1191.57 424.75 L1193.14 423.12 L1194.69 421.49 L1196.21 419.86 L1197.71 418.24 L1199.19 416.61 L1200.65 414.98 L1202.08 413.35 L1203.49 411.72 L1204.88 410.09 L1206.24 408.46 L1207.58 406.83 L1208.90 405.20 L1210.20 403.57 L1211.47 401.94 L1212.72 400.31 L1213.94 398.68 L1215.14 397.05 L1216.32 395.42 L1217.47 393.79 L1218.60 392.16 L1219.70 390.53 L1220.78 388.90 L1221.84 387.27 L1222.87 385.64 L1223.87 384.01 L1224.86 382.38 L1225.81 380.75 L1226.75 379.12 L1227.66 377.49 L1228.54 375.86 L1229.40 374.23 L1230.23 372.60 L1231.04 370.97 L1231.83 369.34 L1232.58 367.71 L1233.32 366.08 L1234.03 364.45 L1234.71 362.82 L1235.37 361.19 L1236.00 359.56 L1236.61 357.93 L1237.19 356.30 L1237.74 354.67 L1238.27 353.04 L1238.78 351.42 L1239.26 349.79 L1239.71 348.16 L1240.14 346.53 L1240.54 344.90 L1240.91 343.27 L1241.27 341.64 L1241.59 340.01 L1241.89 338.38 L1242.16 336.75 L1242.41 335.12 L1242.63 333.49 L1242.82 331.86 L1242.99 330.23 L1243.14 328.60 L1243.25 326.97 L1243.34 325.34 L1243.41 323.71 L1243.45 322.08 L1243.46 320.45 L1243.45 318.82 L1243.41 317.19 L1243.34 315.56 L1243.25 313.93 L1243.14 312.30 L1242.99 310.67 L1242.82 309.04 L1242.63 307.41 L1242.41 305.78 L1242.16 304.15 L1241.89 302.52 L1241.59 300.89 L1241.27 299.26 L1240.91 297.63 L1240.54 296.00 L1240.14 294.37 L1239.71 292.74 L1239.26 291.11 L1238.78 289.48 L1238.27 287.86 L1237.74 286.23 L1237.19 284.60 L1236.61 282.97 L1236.00 281.34 L1235.37 279.71 L1234.71 278.08 L1234.03 276.45 L1233.32 274.82 L1232.58 273.19 L1231.83 271.56 L1231.04 269.93 L1230.23 268.30 L1229.40 266.67 L1228.54 265.04 L1227.66 263.41 L1226.75 261.78 L1225.81 260.15 L1224.86 258.52 L1223.87 256.89 L1222.87 255.26 L1221.84 253.63 L1220.78 252.00 L1219.70 250.37 L1218.60 248.74 L1217.47 247.11 L1216.32 245.48 L1215.14 243.85 L1213.94 242.22 L1212.72 240.59 L1211.47 238.96 L1210.20 237.33 L1208.90 235.70 L1207.58 234.07 L1206.24 232.44 L1204.88 230.81 L1203.49 229.18 L1202.08 227.55 L1200.65 225.92 L1199.19 224.29 L1197.71 222.66 L1196.21 221.04 L1194.69 219.41 L1193.14 217.78 L1191.57 216.15 L1189.98 214.52 L1188.37 212.89 L1186.74 211.26 L1185.08 209.63 L1183.41 208.00 L1181.71 206.37 L1179.99 204.74 L1178.25 203.11 L1176.48 201.48 L1174.70 199.85 L1172.90 198.22 L1171.07 196.59 L1169.23 194.96 L1167.36 193.33 L1165.48 191.70 L1163.57 190.07 L1161.65 188.44 L1159.70 186.81 L1157.74 185.18 L1155.75 183.55 L1153.75 181.92 L1151.73 180.29 L1149.69 178.66 L1147.63 177.03 L1145.55 175.40 L1143.45 173.77 L1141.33 172.14 L1139.20 170.51 L1137.05 168.88 L1134.88 167.25 L1132.69 165.62 L1130.48 163.99 L1128.26 162.36 L1126.02 160.73 L1123.76 159.10 L1121.49 157.47 L1119.20 155.85 L1116.89 154.22 L1114.56 152.59 L1112.22 150.96 L1109.87 149.33 L1107.50 147.70 L1105.11 146.07 L1102.71 144.44 L1100.29 142.81 L1097.85 141.18 L1095.41 139.55 L1092.94 137.92 L1090.46 136.29 L1087.97 134.66 L1085.47 133.03 L1082.95 131.40 L1080.41 129.77 L1077.86 128.14 L1075.30 126.51 L1072.73 124.88 L1070.14 123.25 L1067.54 121.62 L1064.93 119.99 L1062.31 118.36 L1059.67 116.73 L1057.02 115.10 L1054.36 113.47 L1051.69 111.84 L1049.00 110.21 L1046.31 108.58 L1043.60 106.95 L1040.88 105.32 L1038.16 103.69 L1035.42 102.06 L1032.67 100.43 L1029.91 98.80 L1027.15 97.17 L1024.37 95.54 L1021.58 93.91 L1018.79 92.28 L1015.98 90.66 L1013.17 89.03 L1010.35 87.40 L1007.52 85.77 L1004.68 84.14 L1001.83 82.51 L998.98 80.88 L996.12 79.25 L993.25 77.62 L990.38 75.99 L987.49 74.36 L984.61 72.73 L981.71 71.10 L978.81 69.47 L975.91 67.84 L972.99 66.21 L970.08 64.58 L967.15 62.95 L964.23 61.32 L961.29 59.69 L958.36 58.06 L955.42 56.43 L952.47 54.80 L949.52 53.17 L946.57 51.54 L943.61 49.91 L940.65 48.28 L937.69 46.65 L934.73 45.02 L931.76 43.39 L928.79 41.76 L925.82 40.13 L922.85 38.50 L919.87 36.87 L916.89 35.24 L913.92 33.61 L910.94 31.98 L907.96 30.35 L904.98 28.72 L902.00 27.09"/>
<path d="M902.00 613.81 L904.55 612.18 L907.11 610.55 L909.66 608.92 L912.21 607.29 L914.77 605.66 L917.32 604.03 L919.87 602.40 L922.42 600.77 L924.96 599.14 L927.51 597.51 L930.05 595.88 L932.59 594.25 L935.13 592.62 L937.67 590.99 L940.20 589.36 L942.73 587.73 L945.26 586.10 L947.79 584.47 L950.31 582.84 L952.82 581.21 L955.34 579.58 L957.85 577.95 L960.35 576.32 L962.85 574.69 L965.35 573.06 L967.84 571.43 L970.32 569.80 L972.81 568.17 L975.28 566.54 L977.75 564.91 L980.22 563.28 L982.67 561.65 L985.13 560.02 L987.57 558.39 L990.01 556.76 L992.44 555.13 L994.87 553.50 L997.29 551.87 L999.70 550.24 L1002.10 548.62 L1004.50 546.99 L1006.89 545.36 L1009.27 543.73 L1011.64 542.10 L1014.00 540.47 L1016.36 538.84 L1018.71 537.21 L1021.04 535.58 L1023.37 533.95 L1025.69 532.32 L1028.00 530.69 L1030.30 529.06 L1032.59 527.43 L1034.87 525.80 L1037.14 524.17 L1039.40 522.54 L1041.65 520.91 L1043.89 519.28 L1046.12 517.65 L1048.34 516.02 L1050.55 514.39 L1052.74 512.76 L1054.92 511.13 L1057.10 509.50 L1059.26 507.87 L1061.40 506.24 L1063.54 504.61 L1065.66 502.98 L1067.78 501.35 L1069.87 499.72 L1071.96 498.09 L1074.03 496.46 L1076.09 494.83 L1078.14 493.20 L1080.17 491.57 L1082.19 489.94 L1084.20 488.31 L1086.19 486.68 L1088.17 485.05 L1090.13 483.42 L1092.08 481.80 L1094.02 480.17 L1095.94 478.54 L1097.84 476.91 L1099.73 475.28 L1101.61 473.65 L1103.47 472.02 L1105.31 470.39 L1107.14 468.76 L1108.96 467.13 L1110.75 465.50 L1112.54 463.87 L1114.30 462.24 L1116.05 460.61 L1117.79 458.98 L1119.50 457.35 L1121.20 455.72 L1122.89 454.09 L1124.56 452.46 L1126.21 450.83 L1127.84 449.20 L1129.46 447.57 L1131.05 445.94 L1132.63 444.31 L1134.20 442.68 L1135.74 441.05 L1137.27 439.42 L1138.78 437.79 L1140.28 436.16 L1141.75 434.53 L1143.21 432.90 L1144.64 431.27 L1146.06 429.64 L1147.46 428.01 L1148.84 426.38 L1150.21 424.75 L1151.55 423.12 L1152.88 421.49 L1154.18 419.86 L1155.47 418.24 L1156.74 416.61 L1157.98 414.98 L1159.21 413.35 L1160.42 411.72 L1161.61 410.09 L1162.78 408.46 L1163.93 406.83 L1165.06 405.20 L1166.17 403.57 L1167.26 401.94 L1168.33 400.31 L1169.38 398.68 L1170.41 397.05 L1171.41 395.42 L1172.40 393.79 L1173.37 392.16 L1174.31 390.53 L1175.24 388.90 L1176.15 387.27 L1177.03 385.64 L1177.89 384.01 L1178.73 382.38 L1179.56 380.75 L1180.36 379.12 L1181.13 377.49 L1181.89 375.86 L1182.63 374.23 L1183.34 372.60 L1184.04 370.97 L1184.71 369.34 L1185.36 367.71 L1185.99 366.08 L1186.59 364.45 L1187.18 362.82 L1187.74 361.19 L1188.28 359.56 L1188.80 357.93 L1189.30 356.30 L1189.78 354.67 L1190.23 353.04 L1190.67 351.42 L1191.08 349.79 L1191.47 348.16 L1191.83 346.53 L1192.18 344.90 L1192.50 343.27 L1192.80 341.64 L1193.08 340.01 L1193.33 338.38 L1193.57 336.75 L1193.78 335.12 L1193.97 333.49 L1194.13 331.86 L1194.28 330.23 L1194.40 328.60 L1194.50 326.97 L1194.58 325.34 L1194.64 323.71 L1194.67 322.08 L1194.68 320.45 L1194.67 318.82 L1194.64 317.19 L1194.58 315.56 L1194.50 313.93 L1194.40 312.30 L1194.28 310.67 L1194.13 309.04 L1193.97 307.41 L1193.78 305.78 L1193.57 304.15 L1193.33 302.52 L1193.08 300.89 L1192.80 299.26 L1192.50 297.63 L1192.18 296.00 L1191.83 294.37 L1191.47 292.74 L1191.08 291.11 L1190.67 289.48 L1190.23 287.86 L1189.78 286.23 L1189.30 284.60 L1188.80 282.97 L1188.28 281.34 L1187.74 279.71 L1187.18 278.08 L1186.59 276.45 L1185.99 274.82 L1185.36 273.19 L1184.71 271.56 L1184.04 269.93 L1183.34 268.30 L1182.63 266.67 L1181.89 265.04 L1181.13 263.41 L1180.36 261.78 L1179.56 260.15 L1178.73 258.52 L1177.89 256.89 L1177.03 255.26 L1176.15 253.63 L1175.24 252.00 L1174.31 250.37 L1173.37 248.74 L1172.40 247.11 L1171.41 245.48 L1170.41 243.85 L1169.38 242.22 L1168.33 240.59 L1167.26 238.96 L1166.17 237.33 L1165.06 235.70 L1163.93 234.07 L1162.78 232.44 L1161.61 230.81 L1160.42 229.18 L1159.21 227.55 L1157.98 225.92 L1156.74 224.29 L1155.47 222.66 L1154.18 221.04 L1152.88 219.41 L1151.55 217.78 L1150.21 216.15 L1148.84 214.52 L1147.46 212.89 L1146.06 211.26 L1144.64 209.63 L1143.21 208.00 L1141.75 206.37 L1140.28 204.74 L1138.78 203.11 L1137.27 201.48 L1135.74 199.85 L1134.20 198.22 L1132.63 196.59 L1131.05 194.96 L1129.46 193.33 L1127.84 191.70 L1126.21 190.07 L1124.56 188.44 L1122.89 186.81 L1121.20 185.18 L1119.50 183.55 L1117.79 181.92 L1116.05 180.29 L1114.30 178.66 L1112.54 177.03 L1110.75 175.40 L1108.96 173.77 L1107.14 172.14 L1105.31 170.51 L1103.47 168.88 L1101.61 167.25 L1099.73 165.62 L1097.84 163.99 L1095.94 162.36 L1094.02 160.73 L1092.08 159.10 L1090.13 157.47 L1088.17 155.85 L1086.19 154.22 L1084.20 152.59 L1082.19 150.96 L1080.17 149.33 L1078.14 147.70 L1076.09 146.07 L1074.03 144.44 L1071.96 142.81 L1069.87 141.18 L1067.78 139.55 L1065.66 137.92 L1063.54 136.29 L1061.40 134.66 L1059.26 133.03 L1057.10 131.40 L1054.92 129.77 L1052.74 128.14 L1050.55 126.51 L1048.34 124.88 L1046.12 123.25 L1043.89 121.62 L1041.65 119.99 L1039.40 118.36 L1037.14 116.73 L1034.87 115.10 L1032.59 113.47 L1030.30 111.84 L1028.00 110.21 L1025.69 108.58 L1023.37 106.95 L1021.04 105.32 L1018.71 103.69 L1016.36 102.06 L1014.00 100.43 L1011.64 98.80 L1009.27 97.17 L1006.89 95.54 L1004.50 93.91 L1002.10 92.28 L999.70 90.66 L997.29 89.03 L994.87 87.40 L992.44 85.77 L990.01 84.14 L987.57 82.51 L985.13 80.88 L982.67 79.25 L980.22 77.62 L977.75 75.99 L975.28 74.36 L972.81 72.73 L970.32 71.10 L967.84 69.47 L965.35 67.84 L962.85 66.21 L960.35 64.58 L957.85 62.95 L955.34 61.32 L952.82 59.69 L950.31 58.06 L947.79 56.43 L945.26 54.80 L942.73 53.17 L940.20 51.54 L937.67 49.91 L935.13 48.28 L932.59 46.65 L930.05 45.02 L927.51 43.39 L924.96 41.76 L922.42 40.13 L919.87 38.50 L917.32 36.87 L914.77 35.24 L912.21 33.61 L909.66 31.98 L907.11 30.35 L904.55 28.72 L902.00 27.09"/>
<path d="M902.00 613.81 L904.13 612.18 L906.26 610.55 L908.38 608.92 L910.51 607.29 L912.64 605.66 L914.76 604.03 L916.89 602.40 L919.01 600.77 L921.14 599.14 L923.26 597.51 L925.38 595.88 L927.49 594.25 L929.61 592.62 L931.72 590.99 L933.84 589.36 L935.94 587.73 L938.05 586.10 L940.15 584.47 L942.26 582.84 L944.35 581.21 L946.45 579.58 L948.54 577.95 L950.63 576.32 L952.71 574.69 L954.79 573.06 L956.87 571.43 L958.94 569.80 L961.00 568.17 L963.07 566.54 L965.13 564.91 L967.18 563.28 L969.23 561.65 L971.27 560.02 L973.31 558.39 L975.34 556.76 L977.37 555.13 L979.39 553.50 L981.41 551.87 L983.42 550.24 L985.42 548.62 L987.42 546.99 L989.41 545.36 L991.39 543.73 L993.37 542.10 L995.34 540.47 L997.30 538.84 L999.25 537.21 L1001.20 535.58 L1003.14 533.95 L1005.08 532.32 L1007.00 530.69 L1008.92 529.06 L1010.83 527.43 L1012.73 525.80 L1014.62 524.17 L1016.50 522.54 L1018.38 520.91 L1020.25 519.28 L1022.10 517.65 L1023.95 516.02 L1025.79 514.39 L1027.62 512.76 L1029.44 511.13 L1031.25 509.50 L1033.05 507.87 L1034.84 506.24 L1036.62 504.61 L1038.39 502.98 L1040.15 501.35 L1041.90 499.72 L1043.63 498.09 L1045.36 496.46 L1047.08 494.83 L1048.78 493.20 L1050.48 491.57 L1052.16 489.94 L1053.83 488.31 L1055.49 486.68 L1057.14 485.05 L1058.78 483.42 L1060.40 481.80 L1062.01 480.17 L1063.61 478.54 L1065.20 476.91 L1066.78 475.28 L1068.34 473.65 L1069.89 472.02 L1071.43 470.39 L1072.95 468.76 L1074.46 467.13 L1075.96 465.50 L1077.45 463.87 L1078.92 462.24 L1080.38 460.61 L1081.82 458.98 L1083.25 457.35 L1084.67 455.72 L1086.07 454.09 L1087.46 452.46 L1088.84 450.83 L1090.20 449.20 L1091.55 447.57 L1092.88 445.94 L1094.20 444.31 L1095.50 442.68 L1096.79 441.05 L1098.06 439.42 L1099.32 437.79 L1100.56 436.16 L1101.79 434.53 L1103.00 432.90 L1104.20 431.27 L1105.38 429.64 L1106.55 428.01 L1107.70 426.38 L1108.84 424.75 L1109.96 423.12 L1111.06 421.49 L1112.15 419.86 L1113.22 418.24 L1114.28 416.61 L1115.32 414.98 L1116.34 413.35 L1117.35 411.72 L1118.34 410.09 L1119.32 408.46 L1120.27 406.83 L1121.22 405.20 L1122.14 403.57 L1123.05 401.94 L1123.94 400.31 L1124.81 398.68 L1125.67 397.05 L1126.51 395.42 L1127.33 393.79 L1128.14 392.16 L1128.93 390.53 L1129.70 388.90 L1130.45 387.27 L1131.19 385.64 L1131.91 384.01 L1132.61 382.38 L1133.30 380.75 L1133.96 379.12 L1134.61 377.49 L1135.24 375.86 L1135.86 374.23 L1136.45 372.60 L1137.03 370.97 L1137.59 369.34 L1138.13 367.71 L1138.66 366.08 L1139.16 364.45 L1139.65 362.82 L1140.12 361.19 L1140.57 359.56 L1141.00 357.93 L1141.42 356.30 L1141.82 354.67 L1142.19 353.04 L1142.56 351.42 L1142.90 349.79 L1143.22 348.16 L1143.53 346.53 L1143.81 344.90 L1144.08 343.27 L1144.33 341.64 L1144.56 340.01 L1144.78 338.38 L1144.97 336.75 L1145.15 335.12 L1145.31 333.49 L1145.45 331.86 L1145.57 330.23 L1145.67 328.60 L1145.75 326.97 L1145.82 325.34 L1145.86 323.71 L1145.89 322.08 L1145.90 320.45 L1145.89 318.82 L1145.86 317.19 L1145.82 315.56 L1145.75 313.93 L1145.67 312.30 L1145.57 310.67 L1145.45 309.04 L1145.31 307.41 L1145.15 305.78 L1144.97 304.15 L1144.78 302.52 L1144.56 300.89 L1144.33 299.26 L1144.08 297.63 L1143.81 296.00 L1143.53 294.37 L1143.22 292.74 L1142.90 291.11 L1142.56 289.48 L1142.19 287.86 L1141.82 286.23 L1141.42 284.60 L1141.00 282.97 L1140.57 281.34 L1140.12 279.71 L1139.65 278.08 L1139.16 276.45 L1138.66 274.82 L1138.13 273.19 L1137.59 271.56 L1137.03 269.93 L1136.45 268.30 L1135.86 266.67 L1135.24 265.04 L1134.61 263.41 L1133.96 261.78 L1133.30 260.15 L1132.61 258.52 L1131.91 256.89 L1131.19 255.26 L1130.45 253.63 L1129.70 252.00 L1128.93 250.37 L1128.14 248.74 L1127.33 247.11 L1126.51 245.48 L1125.67 243.85 L1124.81 242.22 L1123.94 240.59 L1123.05 238.96 L1122.14 237.33 L1121.22 235.70 L1120.27 234.07 L1119.32 232.44 L1118.34 230.81 L1117.35 229.18 L1116.34 227.55 L1115.32 225.92 L1114.28 224.29 L1113.22 222.66 L1112.15 221.04 L1111.06 219.41 L1109.96 217.78 L1108.84 216.15 L1107.70 214.52 L1106.55 212.89 L1105.38 211.26 L1104.20 209.63 L1103.00 208.00 L1101.79 206.37 L1100.56 204.74 L1099.32 203.11 L1098.06 201.48 L1096.79 199.85 L1095.50 198.22 L1094.20 196.59 L1092.88 194.96 L1091.55 193.33 L1090.20 191.70 L1088.84 190.07 L1087.46 188.44 L1086.07 186.81 L1084.67 185.18 L1083.25 183.55 L1081.82 181.92 L1080.38 180.29 L1078.92 178.66 L1077.45 177.03 L1075.96 175.40 L1074.46 173.77 L1072.95 172.14 L1071.43 170.51 L1069.89 168.88 L1068.34 167.25 L1066.78 165.62 L1065.20 163.99 L1063.61 162.36 L1062.01 160.73 L1060.40 159.10 L1058.78 157.47 L1057.14 155.85 L1055.49 154.22 L1053.83 152.59 L1052.16 150.96 L1050.48 149.33 L1048.78 147.70 L1047.08 146.07 L1045.36 144.44 L1043.63 142.81 L1041.90 141.18 L1040.15 139.55 L1038.39 137.92 L1036.62 136.29 L1034.84 134.66 L1033.05 133.03 L1031.25 131.40 L1029.44 129.77 L1027.62 128.14 L1025.79 126.51 L1023.95 124.88 L1022.10 123.25 L1020.25 121.62 L1018.38 119.99 L1016.50 118.36 L1014.62 116.73 L1012.73 115.10 L1010.83 113.47 L1008.92 111.84 L1007.00 110.21 L1005.08 108.58 L1003.14 106.95 L1001.20 105.32 L999.25 103.69 L997.30 102.06 L995.34 100.43 L993.37 98.80 L991.39 97.17 L989.41 95.54 L987.42 93.91 L985.42 92.28 L983.42 90.66 L981.41 89.03 L979.39 87.40 L977.37 85.77 L975.34 84.14 L973.31 82.51 L971.27 80.88 L969.23 79.25 L967.18 77.62 L965.13 75.99 L963.07 74.36 L961.00 72.73 L958.94 71.10 L956.87 69.47 L954.79 67.84 L952.71 66.21 L950.63 64.58 L948.54 62.95 L946.45 61.32 L944.35 59.69 L942.26 58.06 L940.15 56.43 L938.05 54.80 L935.94 53.17 L933.84 51.54 L931.72 49.91 L929.61 48.28 L927.49 46.65 L925.38 45.02 L923.26 43.39 L921.14 41.76 L919.01 40.13 L916.89 38.50 L914.76 36.87 L912.64 35.24 L910.51 33.61 L908.38 31.98 L906.26 30.35 L904.13 28.72 L902.00 27.09"/>
<path d="M902.00 613.81 L903.70 612.18 L905.41 610.55 L907.11 608.92 L908.81 607.29 L910.51 605.66 L912.21 604.03 L913.91 602.40 L915.61 600.77 L917.31 599.14 L919.01 597.51 L920.70 595.88 L922.40 594.25 L924.09 592.62 L925.78 590.99 L927.47 589.36 L929.16 587.73 L930.84 586.10 L932.52 584.47 L934.20 582.84 L935.88 581.21 L937.56 579.58 L939.23 577.95 L940.90 576.32 L942.57 574.69 L944.23 573.06 L945.89 571.43 L947.55 569.80 L949.20 568.17 L950.85 566.54 L952.50 564.91 L954.14 563.28 L955.78 561.65 L957.42 560.02 L959.05 558.39 L960.67 556.76 L962.30 555.13 L963.91 553.50 L965.52 551.87 L967.13 550.24 L968.73 548.62 L970.33 546.99 L971.92 545.36 L973.51 543.73 L975.09 542.10 L976.67 540.47 L978.24 538.84 L979.80 537.21 L981.36 535.58 L982.91 533.95 L984.46 532.32 L986.00 530.69 L987.53 529.06 L989.06 527.43 L990.58 525.80 L992.10 524.17 L993.60 522.54 L995.10 520.91 L996.60 519.28 L998.08 517.65 L999.56 516.02 L1001.03 514.39 L1002.49 512.76 L1003.95 511.13 L1005.40 509.50 L1006.84 507.87 L1008.27 506.24 L1009.69 504.61 L1011.11 502.98 L1012.52 501.35 L1013.92 499.72 L1015.31 498.09 L1016.69 496.46 L1018.06 494.83 L1019.43 493.20 L1020.78 491.57 L1022.13 489.94 L1023.47 488.31 L1024.79 486.68 L1026.11 485.05 L1027.42 483.42 L1028.72 481.80 L1030.01 480.17 L1031.29 478.54 L1032.56 476.91 L1033.82 475.28 L1035.07 473.65 L1036.31 472.02 L1037.54 470.39 L1038.76 468.76 L1039.97 467.13 L1041.17 465.50 L1042.36 463.87 L1043.54 462.24 L1044.70 460.61 L1045.86 458.98 L1047.00 457.35 L1048.14 455.72 L1049.26 454.09 L1050.37 452.46 L1051.47 450.83 L1052.56 449.20 L1053.64 447.57 L1054.70 445.94 L1055.76 444.31 L1056.80 442.68 L1057.83 441.05 L1058.85 439.42 L1059.86 437.79 L1060.85 436.16 L1061.83 434.53 L1062.80 432.90 L1063.76 431.27 L1064.71 429.64 L1065.64 428.01 L1066.56 426.38 L1067.47 424.75 L1068.37 423.12 L1069.25 421.49 L1070.12 419.86 L1070.98 418.24 L1071.82 416.61 L1072.66 414.98 L1073.47 413.35 L1074.28 411.72 L1075.07 410.09 L1075.85 408.46 L1076.62 406.83 L1077.37 405.20 L1078.11 403.57 L1078.84 401.94 L1079.55 400.31 L1080.25 398.68 L1080.94 397.05 L1081.61 395.42 L1082.27 393.79 L1082.91 392.16 L1083.54 390.53 L1084.16 388.90 L1084.76 387.27 L1085.35 385.64 L1085.93 384.01 L1086.49 382.38 L1087.04 380.75 L1087.57 379.12 L1088.09 377.49 L1088.59 375.86 L1089.08 374.23 L1089.56 372.60 L1090.02 370.97 L1090.47 369.34 L1090.90 367.71 L1091.32 366.08 L1091.73 364.45 L1092.12 362.82 L1092.49 361.19 L1092.86 359.56 L1093.20 357.93 L1093.54 356.30 L1093.85 354.67 L1094.16 353.04 L1094.44 351.42 L1094.72 349.79 L1094.98 348.16 L1095.22 346.53 L1095.45 344.90 L1095.67 343.27 L1095.87 341.64 L1096.05 340.01 L1096.22 338.38 L1096.38 336.75 L1096.52 335.12 L1096.64 333.49 L1096.76 331.86 L1096.85 330.23 L1096.93 328.60 L1097.00 326.97 L1097.05 325.34 L1097.09 323.71 L1097.11 322.08 L1097.12 320.45 L1097.11 318.82 L1097.09 317.19 L1097.05 315.56 L1097.00 313.93 L1096.93 312.30 L1096.85 310.67 L1096.76 309.04 L1096.64 307.41 L1096.52 305.78 L1096.38 304.15 L1096.22 302.52 L1096.05 300.89 L1095.87 299.26 L1095.67 297.63 L1095.45 296.00 L1095.22 294.37 L1094.98 292.74 L1094.72 291.11 L1094.44 289.48 L1094.16 287.86 L1093.85 286.23 L1093.54 284.60 L1093.20 282.97 L1092.86 281.34 L1092.49 279.71 L1092.12 278.08 L1091.73 276.45 L1091.32 274.82 L1090.90 273.19 L1090.47 271.56 L1090.02 269.93 L1089.56 268.30 L1089.08 266.67 L1088.59 265.04 L1088.09 263.41 L1087.57 261.78 L1087.04 260.15 L1086.49 258.52 L1085.93 256.89 L1085.35 255.26 L1084.76 253.63 L1084.16 252.00 L1083.54 250.37 L1082.91 248.74 L1082.27 247.11 L1081.61 245.48 L1080.94 243.85 L1080.25 242.22 L1079.55 240.59 L1078.84 238.96 L1078.11 237.33 L1077.37 235.70 L1076.62 234.07 L1075.85 232.44 L1075.07 230.81 L1074.28 229.18 L1073.47 227.55 L1072.66 225.92 L1071.82 224.29 L1070.98 222.66 L1070.12 221.04 L1069.25 219.41 L1068.37 217.78 L1067.47 216.15 L1066.56 214.52 L1065.64 212.89 L1064.71 211.26 L1063.76 209.63 L1062.80 208.00 L1061.83 206.37 L1060.85 204.74 L1059.86 203.11 L1058.85 201.48 L1057.83 199.85 L1056.80 198.22 L1055.76 196.59 L1054.70 194.96 L1053.64 193.33 L1052.56 191.70 L1051.47 190.07 L1050.37 188.44 L1049.26 186.81 L1048.14 185.18 L1047.00 183.55 L1045.86 181.92 L1044.70 180.29 L1043.54 178.66 L1042.36 177.03 L1041.17 175.40 L1039.97 173.77 L1038.76 172.14 L1037.54 170.51 L1036.31 168.88 L1035.07 167.25 L1033.82 165.62 L1032.56 163.99 L1031.29 162.36 L1030.01 160.73 L1028.72 159.10 L1027.42 157.47 L1026.11 155.85 L1024.79 154.22 L1023.47 152.59 L1022.13 150.96 L1020.78 149.33 L1019.43 147.70 L1018.06 146.07 L1016.69 144.44 L1015.31 142.81 L1013.92 141.18 L1012.52 139.55 L1011.11 137.92 L1009.69 136.29 L1008.27 134.66 L1006.84 133.03 L1005.40 131.40 L1003.95 129.77 L1002.49 128.14 L1001.03 126.51 L999.56 124.88 L998.08 123.25 L996.60 121.62 L995.10 119.99 L993.60 118.36 L992.10 116.73 L990.58 115.10 L989.06 113.47 L987.53 111.84 L986.00 110.21 L984.46 108.58 L982.91 106.95 L981.36 105.32 L979.80 103.69 L978.24 102.06 L976.67 100.43 L975.09 98.80 L973.51 97.17 L971.92 95.54 L970.33 93.91 L968.73 92.28 L967.13 90.66 L965.52 89.03 L963.91 87.40 L962.30 85.77 L960.67 84.14 L959.05 82.51 L957.42 80.88 L955.78 79.25 L954.14 77.62 L952.50 75.99 L950.85 74.36 L949.20 72.73 L947.55 71.10 L945.89 69.47 L944.23 67.84 L942.57 66.21 L940.90 64.58 L939.23 62.95 L937.56 61.32 L935.88 59.69 L934.20 58.06 L932.52 56.43 L930.84 54.80 L929.16 53.17 L927.47 51.54 L925.78 49.91 L924.09 48.28 L922.40 46.65 L920.70 45.02 L919.01 43.39 L917.31 41.76 L915.61 40.13 L913.91 38.50 L912.21 36.87 L910.51 35.24 L908.81 33.61 L907.11 31.98 L905.41 30.35 L903.70 28.72 L902.00 27.09"/>
<path d="M902.00 613.81 L903.28 612.18 L904.55 610.55 L905.83 608.92 L907.11 607.29 L908.38 605.66 L909.66 604.03 L910.93 602.40 L912.21 600.77 L913.48 599.14 L914.75 597.51 L916.03 595.88 L917.30 594.25 L918.57 592.62 L919.83 590.99 L921.10 589.36 L922.37 587.73 L923.63 586.10 L924.89 584.47 L926.15 582.84 L927.41 581.21 L928.67 579.58 L929.92 577.95 L931.18 576.32 L932.43 574.69 L933.67 573.06 L934.92 571.43 L936.16 569.80 L937.40 568.17 L938.64 566.54 L939.88 564.91 L941.11 563.28 L942.34 561.65 L943.56 560.02 L944.79 558.39 L946.01 556.76 L947.22 555.13 L948.43 553.50 L949.64 551.87 L950.85 550.24 L952.05 548.62 L953.25 546.99 L954.44 545.36 L955.63 543.73 L956.82 542.10 L958.00 540.47 L959.18 538.84 L960.35 537.21 L961.52 535.58 L962.69 533.95 L963.85 532.32 L965.00 530.69 L966.15 529.06 L967.30 527.43 L968.44 525.80 L969.57 524.17 L970.70 522.54 L971.83 520.91 L972.95 519.28 L974.06 517.65 L975.17 516.02 L976.27 514.39 L977.37 512.76 L978.46 511.13 L979.55 509.50 L980.63 507.87 L981.70 506.24 L982.77 504.61 L983.83 502.98 L984.89 501.35 L985.94 499.72 L986.98 498.09 L988.02 496.46 L989.05 494.83 L990.07 493.20 L991.09 491.57 L992.10 489.94 L993.10 488.31 L994.09 486.68 L995.08 485.05 L996.07 483.42 L997.04 481.80 L998.01 480.17 L998.97 478.54 L999.92 476.91 L1000.87 475.28 L1001.80 473.65 L1002.73 472.02 L1003.66 470.39 L1004.57 468.76 L1005.48 467.13 L1006.38 465.50 L1007.27 463.87 L1008.15 462.24 L1009.03 460.61 L1009.89 458.98 L1010.75 457.35 L1011.60 455.72 L1012.44 454.09 L1013.28 452.46 L1014.10 450.83 L1014.92 449.20 L1015.73 447.57 L1016.53 445.94 L1017.32 444.31 L1018.10 442.68 L1018.87 441.05 L1019.64 439.42 L1020.39 437.79 L1021.14 436.16 L1021.87 434.53 L1022.60 432.90 L1023.32 431.27 L1024.03 429.64 L1024.73 428.01 L1025.42 426.38 L1026.10 424.75 L1026.78 423.12 L1027.44 421.49 L1028.09 419.86 L1028.73 418.24 L1029.37 416.61 L1029.99 414.98 L1030.61 413.35 L1031.21 411.72 L1031.81 410.09 L1032.39 408.46 L1032.96 406.83 L1033.53 405.20 L1034.08 403.57 L1034.63 401.94 L1035.16 400.31 L1035.69 398.68 L1036.20 397.05 L1036.71 395.42 L1037.20 393.79 L1037.68 392.16 L1038.16 390.53 L1038.62 388.90 L1039.07 387.27 L1039.51 385.64 L1039.95 384.01 L1040.37 382.38 L1040.78 380.75 L1041.18 379.12 L1041.57 377.49 L1041.95 375.86 L1042.31 374.23 L1042.67 372.60 L1043.02 370.97 L1043.35 369.34 L1043.68 367.71 L1043.99 366.08 L1044.30 364.45 L1044.59 362.82 L1044.87 361.19 L1045.14 359.56 L1045.40 357.93 L1045.65 356.30 L1045.89 354.67 L1046.12 353.04 L1046.33 351.42 L1046.54 349.79 L1046.73 348.16 L1046.92 346.53 L1047.09 344.90 L1047.25 343.27 L1047.40 341.64 L1047.54 340.01 L1047.67 338.38 L1047.78 336.75 L1047.89 335.12 L1047.98 333.49 L1048.07 331.86 L1048.14 330.23 L1048.20 328.60 L1048.25 326.97 L1048.29 325.34 L1048.32 323.71 L1048.33 322.08 L1048.34 320.45 L1048.33 318.82 L1048.32 317.19 L1048.29 315.56 L1048.25 313.93 L1048.20 312.30 L1048.14 310.67 L1048.07 309.04 L1047.98 307.41 L1047.89 305.78 L1047.78 304.15 L1047.67 302.52 L1047.54 300.89 L1047.40 299.26 L1047.25 297.63 L1047.09 296.00 L1046.92 294.37 L1046.73 292.74 L1046.54 291.11 L1046.33 289.48 L1046.12 287.86 L1045.89 286.23 L1045.65 284.60 L1045.40 282.97 L1045.14 281.34 L1044.87 279.71 L1044.59 278.08 L1044.30 276.45 L1043.99 274.82 L1043.68 273.19 L1043.35 271.56 L1043.02 269.93 L1042.67 268.30 L1042.31 266.67 L1041.95 265.04 L1041.57 263.41 L1041.18 261.78 L1040.78 260.15 L1040.37 258.52 L1039.95 256.89 L1039.51 255.26 L1039.07 253.63 L1038.62 252.00 L1038.16 250.37 L1037.68 248.74 L1037.20 247.11 L1036.71 245.48 L1036.20 243.85 L1035.69 242.22 L1035.16 240.59 L1034.63 238.96 L1034.08 237.33 L1033.53 235.70 L1032.96 234.07 L1032.39 232.44 L1031.81 230.81 L1031.21 229.18 L1030.61 227.55 L1029.99 225.92 L1029.37 224.29 L1028.73 222.66 L1028.09 221.04 L1027.44 219.41 L1026.78 217.78 L1026.10 216.15 L1025.42 214.52 L1024.73 212.89 L1024.03 211.26 L1023.32 209.63 L1022.60 208.00 L1021.87 206.37 L1021.14 204.74 L1020.39 203.11 L1019.64 201.48 L1018.87 199.85 L1018.10 198.22 L1017.32 196.59 L1016.53 194.96 L1015.73 193.33 L1014.92 191.70 L1014.10 190.07 L1013.28 188.44 L1012.44 186.81 L1011.60 185.18 L1010.75 183.55 L1009.89 181.92 L1009.03 180.29 L1008.15 178.66 L1007.27 177.03 L1006.38 175.40 L1005.48 173.77 L1004.57 172.14 L1003.66 170.51 L1002.73 168.88 L1001.80 167.25 L1000.87 165.62 L999.92 163.99 L998.97 162.36 L998.01 160.73 L997.04 159.10 L996.07 157.47 L995.08 155.85 L994.09 154.22 L993.10 152.59 L992.10 150.96 L991.09 149.33 L990.07 147.70 L989.05 146.07 L988.02 144.44 L986.98 142.81 L985.94 141.18 L984.89 139.55 L983.83 137.92 L982.77 136.29 L981.70 134.66 L980.63 133.03 L979.55 131.40 L978.46 129.77 L977.37 128.14 L976.27 126.51 L975.17 124.88 L974.06 123.25 L972.95 121.62 L971.83 119.99 L970.70 118.36 L969.57 116.73 L968.44 115.10 L967.30 113.47 L966.15 111.84 L965.00 110.21 L963.85 108.58 L962.69 106.95 L961.52 105.32 L960.35 103.69 L959.18 102.06 L958.00 100.43 L956.82 98.80 L955.63 97.17 L954.44 95.54 L953.25 93.91 L952.05 92.28 L950.85 90.66 L949.64 89.03 L948.43 87.40 L947.22 85.77 L946.01 84.14 L944.79 82.51 L943.56 80.88 L942.34 79.25 L941.11 77.62 L939.88 75.99 L938.64 74.36 L937.40 72.73 L936.16 71.10 L934.92 69.47 L933.67 67.84 L932.43 66.21 L931.18 64.58 L929.92 62.95 L928.67 61.32 L927.41 59.69 L926.15 58.06 L924.89 56.43 L923.63 54.80 L922.37 53.17 L921.10 51.54 L919.83 49.91 L918.57 48.28 L917.30 46.65 L916.03 45.02 L914.75 43.39 L913.48 41.76 L912.21 40.13 L910.93 38.50 L909.66 36.87 L908.38 35.24 L907.11 33.61 L905.83 31.98 L904.55 30.35 L903.28 28.72 L902.00 27.09"/>
<path d="M902.00 613.81 L902.85 612.18 L903.70 610.55 L904.55 608.92 L905.40 607.29 L906.26 605.66 L907.11 604.03 L907.96 602.40 L908.81 600.77 L909.65 599.14 L910.50 597.51 L911.35 595.88 L912.20 594.25 L913.04 592.62 L913.89 590.99 L914.73 589.36 L915.58 587.73 L916.42 586.10 L917.26 584.47 L918.10 582.84 L918.94 581.21 L919.78 579.58 L920.62 577.95 L921.45 576.32 L922.28 574.69 L923.12 573.06 L923.95 571.43 L924.77 569.80 L925.60 568.17 L926.43 566.54 L927.25 564.91 L928.07 563.28 L928.89 561.65 L929.71 560.02 L930.52 558.39 L931.34 556.76 L932.15 555.13 L932.96 553.50 L933.76 551.87 L934.57 550.24 L935.37 548.62 L936.17 546.99 L936.96 545.36 L937.76 543.73 L938.55 542.10 L939.33 540.47 L940.12 538.84 L940.90 537.21 L941.68 535.58 L942.46 533.95 L943.23 532.32 L944.00 530.69 L944.77 529.06 L945.53 527.43 L946.29 525.80 L947.05 524.17 L947.80 522.54 L948.55 520.91 L949.30 519.28 L950.04 517.65 L950.78 516.02 L951.52 514.39 L952.25 512.76 L952.97 511.13 L953.70 509.50 L954.42 507.87 L955.13 506.24 L955.85 504.61 L956.55 502.98 L957.26 501.35 L957.96 499.72 L958.65 498.09 L959.34 496.46 L960.03 494.83 L960.71 493.20 L961.39 491.57 L962.06 489.94 L962.73 488.31 L963.40 486.68 L964.06 485.05 L964.71 483.42 L965.36 481.80 L966.01 480.17 L966.65 478.54 L967.28 476.91 L967.91 475.28 L968.54 473.65 L969.16 472.02 L969.77 470.39 L970.38 468.76 L970.99 467.13 L971.58 465.50 L972.18 463.87 L972.77 462.24 L973.35 460.61 L973.93 458.98 L974.50 457.35 L975.07 455.72 L975.63 454.09 L976.19 452.46 L976.74 450.83 L977.28 449.20 L977.82 447.57 L978.35 445.94 L978.88 444.31 L979.40 442.68 L979.91 441.05 L980.42 439.42 L980.93 437.79 L981.43 436.16 L981.92 434.53 L982.40 432.90 L982.88 431.27 L983.35 429.64 L983.82 428.01 L984.28 426.38 L984.74 424.75 L985.18 423.12 L985.63 421.49 L986.06 419.86 L986.49 418.24 L986.91 416.61 L987.33 414.98 L987.74 413.35 L988.14 411.72 L988.54 410.09 L988.93 408.46 L989.31 406.83 L989.69 405.20 L990.06 403.57 L990.42 401.94 L990.78 400.31 L991.13 398.68 L991.47 397.05 L991.80 395.42 L992.13 393.79 L992.46 392.16 L992.77 390.53 L993.08 388.90 L993.38 387.27 L993.68 385.64 L993.96 384.01 L994.24 382.38 L994.52 380.75 L994.79 379.12 L995.04 377.49 L995.30 375.86 L995.54 374.23 L995.78 372.60 L996.01 370.97 L996.24 369.34 L996.45 367.71 L996.66 366.08 L996.86 364.45 L997.06 362.82 L997.25 361.19 L997.43 359.56 L997.60 357.93 L997.77 356.30 L997.93 354.67 L998.08 353.04 L998.22 351.42 L998.36 349.79 L998.49 348.16 L998.61 346.53 L998.73 344.90 L998.83 343.27 L998.93 341.64 L999.03 340.01 L999.11 338.38 L999.19 336.75 L999.26 335.12 L999.32 333.49 L999.38 331.86 L999.43 330.23 L999.47 328.60 L999.50 326.97 L999.53 325.34 L999.55 323.71 L999.56 322.08 L999.56 320.45 L999.56 318.82 L999.55 317.19 L999.53 315.56 L999.50 313.93 L999.47 312.30 L999.43 310.67 L999.38 309.04 L999.32 307.41 L999.26 305.78 L999.19 304.15 L999.11 302.52 L999.03 300.89 L998.93 299.26 L998.83 297.63 L998.73 296.00 L998.61 294.37 L998.49 292.74 L998.36 291.11 L998.22 289.48 L998.08 287.86 L997.93 286.23 L997.77 284.60 L997.60 282.97 L997.43 281.34 L997.25 279.71 L997.06 278.08 L996.86 276.45 L996.66 274.82 L996.45 273.19 L996.24 271.56 L996.01 269.93 L995.78 268.30 L995.54 266.67 L995.30 265.04 L995.04 263.41 L994.79 261.78 L994.52 260.15 L994.24 258.52 L993.96 256.89 L993.68 255.26 L993.38 253.63 L993.08 252.00 L992.77 250.37 L992.46 248.74 L992.13 247.11 L991.80 245.48 L991.47 243.85 L991.13 242.22 L990.78 240.59 L990.42 238.96 L990.06 237.33 L989.69 235.70 L989.31 234.07 L988.93 232.44 L988.54 230.81 L988.14 229.18 L987.74 227.55 L987.33 225.92 L986.91 224.29 L986.49 222.66 L986.06 221.04 L985.63 219.41 L985.18 217.78 L984.74 216.15 L984.28 214.52 L983.82 212.89 L983.35 211.26 L982.88 209.63 L982.40 208.00 L981.92 206.37 L981.43 204.74 L980.93 203.11 L980.42 201.48 L979.91 199.85 L979.40 198.22 L978.88 196.59 L978.35 194.96 L977.82 193.33 L977.28 191.70 L976.74 190.07 L976.19 188.44 L975.63 186.81 L975.07 185.18 L974.50 183.55 L973.93 181.92 L973.35 180.29 L972.77 178.66 L972.18 177.03 L971.58 175.40 L970.99 173.77 L970.38 172.14 L969.77 170.51 L969.16 168.88 L968.54 167.25 L967.91 165.62 L967.28 163.99 L966.65 162.36 L966.01 160.73 L965.36 159.10 L964.71 157.47 L964.06 155.85 L963.40 154.22 L962.73 152.59 L962.06 150.96 L961.39 149.33 L960.71 147.70 L960.03 146.07 L959.34 144.44 L958.65 142.81 L957.96 141.18 L957.26 139.55 L956.55 137.92 L955.85 136.29 L955.13 134.66 L954.42 133.03 L953.70 131.40 L952.97 129.77 L952.25 128.14 L951.52 126.51 L950.78 124.88 L950.04 123.25 L949.30 121.62 L948.55 119.99 L947.80 118.36 L947.05 116.73 L946.29 115.10 L945.53 113.47 L944.77 111.84 L944.00 110.21 L943.23 108.58 L942.46 106.95 L941.68 105.32 L940.90 103.69 L940.12 102.06 L939.33 100.43 L938.55 98.80 L937.76 97.17 L936.96 95.54 L936.17 93.91 L935.37 92.28 L934.57 90.66 L933.76 89.03 L932.96 87.40 L932.15 85.77 L931.34 84.14 L930.52 82.51 L929.71 80.88 L928.89 79.25 L928.07 77.62 L927.25 75.99 L926.43 74.36 L925.60 72.73 L924.77 71.10 L923.95 69.47 L923.12 67.84 L922.28 66.21 L921.45 64.58 L920.62 62.95 L919.78 61.32 L918.94 59.69 L918.10 58.06 L917.26 56.43 L916.42 54.80 L915.58 53.17 L914.73 51.54 L913.89 49.91 L913.04 48.28 L912.20 46.65 L911.35 45.02 L910.50 43.39 L909.65 41.76 L908.81 40.13 L907.96 38.50 L907.11 36.87 L906.26 35.24 L905.40 33.61 L904.55 31.98 L903.70 30.35 L902.85 28.72 L902.00 27.09"/>
<path d="M902.00 613.81 L902.43 612.18 L902.85 610.55 L903.28 608.92 L903.70 607.29 L904.13 605.66 L904.55 604.03 L904.98 602.40 L905.40 600.77 L905.83 599.14 L906.25 597.51 L906.68 595.88 L907.10 594.25 L907.52 592.62 L907.94 590.99 L908.37 589.36 L908.79 587.73 L909.21 586.10 L909.63 584.47 L910.05 582.84 L910.47 581.21 L910.89 579.58 L911.31 577.95 L911.73 576.32 L912.14 574.69 L912.56 573.06 L912.97 571.43 L913.39 569.80 L913.80 568.17 L914.21 566.54 L914.63 564.91 L915.04 563.28 L915.45 561.65 L915.85 560.02 L916.26 558.39 L916.67 556.76 L917.07 555.13 L917.48 553.50 L917.88 551.87 L918.28 550.24 L918.68 548.62 L919.08 546.99 L919.48 545.36 L919.88 543.73 L920.27 542.10 L920.67 540.47 L921.06 538.84 L921.45 537.21 L921.84 535.58 L922.23 533.95 L922.62 532.32 L923.00 530.69 L923.38 529.06 L923.77 527.43 L924.15 525.80 L924.52 524.17 L924.90 522.54 L925.28 520.91 L925.65 519.28 L926.02 517.65 L926.39 516.02 L926.76 514.39 L927.12 512.76 L927.49 511.13 L927.85 509.50 L928.21 507.87 L928.57 506.24 L928.92 504.61 L929.28 502.98 L929.63 501.35 L929.98 499.72 L930.33 498.09 L930.67 496.46 L931.02 494.83 L931.36 493.20 L931.70 491.57 L932.03 489.94 L932.37 488.31 L932.70 486.68 L933.03 485.05 L933.36 483.42 L933.68 481.80 L934.00 480.17 L934.32 478.54 L934.64 476.91 L934.96 475.28 L935.27 473.65 L935.58 472.02 L935.89 470.39 L936.19 468.76 L936.49 467.13 L936.79 465.50 L937.09 463.87 L937.38 462.24 L937.68 460.61 L937.96 458.98 L938.25 457.35 L938.53 455.72 L938.81 454.09 L939.09 452.46 L939.37 450.83 L939.64 449.20 L939.91 447.57 L940.18 445.94 L940.44 444.31 L940.70 442.68 L940.96 441.05 L941.21 439.42 L941.46 437.79 L941.71 436.16 L941.96 434.53 L942.20 432.90 L942.44 431.27 L942.68 429.64 L942.91 428.01 L943.14 426.38 L943.37 424.75 L943.59 423.12 L943.81 421.49 L944.03 419.86 L944.24 418.24 L944.46 416.61 L944.66 414.98 L944.87 413.35 L945.07 411.72 L945.27 410.09 L945.46 408.46 L945.65 406.83 L945.84 405.20 L946.03 403.57 L946.21 401.94 L946.39 400.31 L946.56 398.68 L946.73 397.05 L946.90 395.42 L947.07 393.79 L947.23 392.16 L947.39 390.53 L947.54 388.90 L947.69 387.27 L947.84 385.64 L947.98 384.01 L948.12 382.38 L948.26 380.75 L948.39 379.12 L948.52 377.49 L948.65 375.86 L948.77 374.23 L948.89 372.60 L949.01 370.97 L949.12 369.34 L949.23 367.71 L949.33 366.08 L949.43 364.45 L949.53 362.82 L949.62 361.19 L949.71 359.56 L949.80 357.93 L949.88 356.30 L949.96 354.67 L950.04 353.04 L950.11 351.42 L950.18 349.79 L950.24 348.16 L950.31 346.53 L950.36 344.90 L950.42 343.27 L950.47 341.64 L950.51 340.01 L950.56 338.38 L950.59 336.75 L950.63 335.12 L950.66 333.49 L950.69 331.86 L950.71 330.23 L950.73 328.60 L950.75 326.97 L950.76 325.34 L950.77 323.71 L950.78 322.08 L950.78 320.45 L950.78 318.82 L950.77 317.19 L950.76 315.56 L950.75 313.93 L950.73 312.30 L950.71 310.67 L950.69 309.04 L950.66 307.41 L950.63 305.78 L950.59 304.15 L950.56 302.52 L950.51 300.89 L950.47 299.26 L950.42 297.63 L950.36 296.00 L950.31 294.37 L950.24 292.74 L950.18 291.11 L950.11 289.48 L950.04 287.86 L949.96 286.23 L949.88 284.60 L949.80 282.97 L949.71 281.34 L949.62 279.71 L949.53 278.08 L949.43 276.45 L949.33 274.82 L949.23 273.19 L949.12 271.56 L949.01 269.93 L948.89 268.30 L948.77 266.67 L948.65 265.04 L948.52 263.41 L948.39 261.78 L948.26 260.15 L948.12 258.52 L947.98 256.89 L947.84 255.26 L947.69 253.63 L947.54 252.00 L947.39 250.37 L947.23 248.74 L947.07 247.11 L946.90 245.48 L946.73 243.85 L946.56 242.22 L946.39 240.59 L946.21 238.96 L946.03 237.33 L945.84 235.70 L945.65 234.07 L945.46 232.44 L945.27 230.81 L945.07 229.18 L944.87 227.55 L944.66 225.92 L944.46 224.29 L944.24 222.66 L944.03 221.04 L943.81 219.41 L943.59 217.78 L943.37 216.15 L943.14 214.52 L942.91 212.89 L942.68 211.26 L942.44 209.63 L942.20 208.00 L941.96 206.37 L941.71 204.74 L941.46 203.11 L941.21 201.48 L940.96 199.85 L940.70 198.22 L940.44 196.59 L940.18 194.96 L939.91 193.33 L939.64 191.70 L939.37 190.07 L939.09 188.44 L938.81 186.81 L938.53 185.18 L938.25 183.55 L937.96 181.92 L937.68 180.29 L937.38 178.66 L937.09 177.03 L936.79 175.40 L936.49 173.77 L936.19 172.14 L935.89 170.51 L935.58 168.88 L935.27 167.25 L934.96 165.62 L934.64 163.99 L934.32 162.36 L934.00 160.73 L933.68 159.10 L933.36 157.47 L933.03 155.85 L932.70 154.22 L932.37 152.59 L932.03 150.96 L931.70 149.33 L931.36 147.70 L931.02 146.07 L930.67 144.44 L930.33 142.81 L929.98 141.18 L929.63 139.55 L929.28 137.92 L928.92 136.29 L928.57 134.66 L928.21 133.03 L927.85 131.40 L927.49 129.77 L927.12 128.14 L926.76 126.51 L926.39 124.88 L926.02 123.25 L925.65 121.62 L925.28 119.99 L924.90 118.36 L924.52 116.73 L924.15 115.10 L923.77 113.47 L923.38 111.84 L923.00 110.21 L922.62 108.58 L922.23 106.95 L921.84 105.32 L921.45 103.69 L921.06 102.06 L920.67 100.43 L920.27 98.80 L919.88 97.17 L919.48 95.54 L919.08 93.91 L918.68 92.28 L918.28 90.66 L917.88 89.03 L917.48 87.40 L917.07 85.77 L916.67 84.14 L916.26 82.51 L915.85 80.88 L915.45 79.25 L915.04 77.62 L914.63 75.99 L914.21 74.36 L913.80 72.73 L913.39 71.10 L912.97 69.47 L912.56 67.84 L912.14 66.21 L911.73 64.58 L911.31 62.95 L910.89 61.32 L910.47 59.69 L910.05 58.06 L909.63 56.43 L909.21 54.80 L908.79 53.17 L908.37 51.54 L907.94 49.91 L907.52 48.28 L907.10 46.65 L906.68 45.02 L906.25 43.39 L905.83 41.76 L905.40 40.13 L904.98 38.50 L904.55 36.87 L904.13 35.24 L903.70 33.61 L903.28 31.98 L902.85 30.35 L902.43 28.72 L902.00 27.09"/>
<path d="M902.00 613.81 L902.00 612.18 L902.00 610.55 L902.00 608.92 L902.00 607.29 L902.00 605.66 L902.00 604.03 L902.00 602.40 L902.00 600.77 L902.00 599.14 L902.00 597.51 L902.00 595.88 L902.00 594.25 L902.00 592.62 L902.00 590.99 L902.00 589.36 L902.00 587.73 L902.00 586.10 L902.00 584.47 L902.00 582.84 L902.00 581.21 L902.00 579.58 L902.00 577.95 L902.00 576.32 L902.00 574.69 L902.00 573.06 L902.00 571.43 L902.00 569.80 L902.00 568.17 L902.00 566.54 L902.00 564.91 L902.00 563.28 L902.00 561.65 L902.00 560.02 L902.00 558.39 L902.00 556.76 L902.00 555.13 L902.00 553.50 L902.00 551.87 L902.00 550.24 L902.00 548.62 L902.00 546.99 L902.00 545.36 L902.00 543.73 L902.00 542.10 L902.00 540.47 L902.00 538.84 L902.00 537.21 L902.00 535.58 L902.00 533.95 L902.00 532.32 L902.00 530.69 L902.00 529.06 L902.00 527.43 L902.00 525.80 L902.00 524.17 L902.00 522.54 L902.00 520.91 L902.00 519.28 L902.00 517.65 L902.00 516.02 L902.00 514.39 L902.00 512.76 L902.00 511.13 L902.00 509.50 L902.00 507.87 L902.00 506.24 L902.00 504.61 L902.00 502.98 L902.00 501.35 L902.00 499.72 L902.00 498.09 L902.00 496.46 L902.00 494.83 L902.00 493.20 L902.00 491.57 L902.00 489.94 L902.00 488.31 L902.00 486.68 L902.00 485.05 L902.00 483.42 L902.00 481.80 L902.00 480.17 L902.00 478.54 L902.00 476.91 L902.00 475.28 L902.00 473.65 L902.00 472.02 L902.00 470.39 L902.00 468.76 L902.00 467.13 L902.00 465.50 L902.00 463.87 L902.00 462.24 L902.00 460.61 L902.00 458.98 L902.00 457.35 L902.00 455.72 L902.00 454.09 L902.00 452.46 L902.00 450.83 L902.00 449.20 L902.00 447.57 L902.00 445.94 L902.00 444.31 L902.00 442.68 L902.00 441.05 L902.00 439.42 L902.00 437.79 L902.00 436.16 L902.00 434.53 L902.00 432.90 L902.00 431.27 L902.00 429.64 L902.00 428.01 L902.00 426.38 L902.00 424.75 L902.00 423.12 L902.00 421.49 L902.00 419.86 L902.00 418.24 L902.00 416.61 L902.00 414.98 L902.00 413.35 L902.00 411.72 L902.00 410.09 L902.00 408.46 L902.00 406.83 L902.00 405.20 L902.00 403.57 L902.00 401.94 L902.00 400.31 L902.00 398.68 L902.00 397.05 L902.00 395.42 L902.00 393.79 L902.00 392.16 L902.00 390.53 L902.00 388.90 L902.00 387.27 L902.00 385.64 L902.00 384.01 L902.00 382.38 L902.00 380.75 L902.00 379.12 L902.00 377.49 L902.00 375.86 L902.00 374.23 L902.00 372.60 L902.00 370.97 L902.00 369.34 L902.00 367.71 L902.00 366.08 L902.00 364.45 L902.00 362.82 L902.00 361.19 L902.00 359.56 L902.00 357.93 L902.00 356.30 L902.00 354.67 L902.00 353.04 L902.00 351.42 L902.00 349.79 L902.00 348.16 L902.00 346.53 L902.00 344.90 L902.00 343.27 L902.00 341.64 L902.00 340.01 L902.00 338.38 L902.00 336.75 L902.00 335.12 L902.00 333.49 L902.00 331.86 L902.00 330.23 L902.00 328.60 L902.00 326.97 L902.00 325.34 L902.00 323.71 L902.00 322.08 L902.00 320.45 L902.00 318.82 L902.00 317.19 L902.00 315.56 L902.00 313.93 L902.00 312.30 L902.00 310.67 L902.00 309.04 L902.00 307.41 L902.00 305.78 L902.00 304.15 L902.00 302.52 L902.00 300.89 L902.00 299.26 L902.00 297.63 L902.00 296.00 L902.00 294.37 L902.00 292.74 L902.00 291.11 L902.00 289.48 L902.00 287.86 L902.00 286.23 L902.00 284.60 L902.00 282.97 L902.00 281.34 L902.00 279.71 L902.00 278.08 L902.00 276.45 L902.00 274.82 L902.00 273.19 L902.00 271.56 L902.00 269.93 L902.00 268.30 L902.00 266.67 L902.00 265.04 L902.00 263.41 L902.00 261.78 L902.00 260.15 L902.00 258.52 L902.00 256.89 L902.00 255.26 L902.00 253.63 L902.00 252.00 L902.00 250.37 L902.00 248.74 L902.00 247.11 L902.00 245.48 L902.00 243.85 L902.00 242.22 L902.00 240.59 L902.00 238.96 L902.00 237.33 L902.00 235.70 L902.00 234.07 L902.00 232.44 L902.00 230.81 L902.00 229.18 L902.00 227.55 L902.00 225.92 L902.00 224.29 L902.00 222.66 L902.00 221.04 L902.00 219.41 L902.00 217.78 L902.00 216.15 L902.00 214.52 L902.00 212.89 L902.00 211.26 L902.00 209.63 L902.00 208.00 L902.00 206.37 L902.00 204.74 L902.00 203.11 L902.00 201.48 L902.00 199.85 L902.00 198.22 L902.00 196.59 L902.00 194.96 L902.00 193.33 L902.00 191.70 L902.00 190.07 L902.00 188.44 L902.00 186.81 L902.00 185.18 L902.00 183.55 L902.00 181.92 L902.00 180.29 L902.00 178.66 L902.00 177.03 L902.00 175.40 L902.00 173.77 L902.00 172.14 L902.00 170.51 L902.00 168.88 L902.00 167.25 L902.00 165.62 L902.00 163.99 L902.00 162.36 L902.00 160.73 L902.00 159.10 L902.00 157.47 L902.00 155.85 L902.00 154.22 L902.00 152.59 L902.00 150.96 L902.00 149.33 L902.00 147.70 L902.00 146.07 L902.00 144.44 L902.00 142.81 L902.00 141.18 L902.00 139.55 L902.00 137.92 L902.00 136.29 L902.00 134.66 L902.00 133.03 L902.00 131.40 L902.00 129.77 L902.00 128.14 L902.00 126.51 L902.00 124.88 L902.00 123.25 L902.00 121.62 L902.00 119.99 L902.00 118.36 L902.00 116.73 L902.00 115.10 L902.00 113.47 L902.00 111.84 L902.00 110.21 L902.00 108.58 L902.00 106.95 L902.00 105.32 L902.00 103.69 L902.00 102.06 L902.00 100.43 L902.00 98.80 L902.00 97.17 L902.00 95.54 L902.00 93.91 L902.00 92.28 L902.00 90.66 L902.00 89.03 L902.00 87.40 L902.00 85.77 L902.00 84.14 L902.00 82.51 L902.00 80.88 L902.00 79.25 L902.00 77.62 L902.00 75.99 L902.00 74.36 L902.00 72.73 L902.00 71.10 L902.00 69.47 L902.00 67.84 L902.00 66.21 L902.00 64.58 L902.00 62.95 L902.00 61.32 L902.00 59.69 L902.00 58.06 L902.00 56.43 L902.00 54.80 L902.00 53.17 L902.00 51.54 L902.00 49.91 L902.00 48.28 L902.00 46.65 L902.00 45.02 L902.00 43.39 L902.00 41.76 L902.00 40.13 L902.00 38.50 L902.00 36.87 L902.00 35.24 L902.00 33.61 L902.00 31.98 L902.00 30.35 L902.00 28.72 L902.00 27.09"/>
<path d="M902.00 613.81 L901.57 612.18 L901.15 610.55 L900.72 608.92 L900.30 607.29 L899.87 605.66 L899.45 604.03 L899.02 602.40 L898.60 600.77 L898.17 599.14 L897.75 597.51 L897.32 595.88 L896.90 594.25 L896.48 592.62 L896.06 590.99 L895.63 589.36 L895.21 587.73 L894.79 586.10 L894.37 584.47 L893.95 582.84 L893.53 581.21 L893.11 579.58 L892.69 577.95 L892.27 576.32 L891.86 574.69 L891.44 573.06 L891.03 571.43 L890.61 569.80 L890.20 568.17 L889.79 566.54 L889.37 564.91 L888.96 563.28 L888.55 561.65 L888.15 560.02 L887.74 558.39 L887.33 556.76 L886.93 555.13 L886.52 553.50 L886.12 551.87 L885.72 550.24 L885.32 548.62 L884.92 546.99 L884.52 545.36 L884.12 543.73 L883.73 542.10 L883.33 540.47 L882.94 538.84 L882.55 537.21 L882.16 535.58 L881.77 533.95 L881.38 532.32 L881.00 530.69 L880.62 529.06 L880.23 527.43 L879.85 525.80 L879.48 524.17 L879.10 522.54 L878.72 520.91 L878.35 519.28 L877.98 517.65 L877.61 516.02 L877.24 514.39 L876.88 512.76 L876.51 511.13 L876.15 509.50 L875.79 507.87 L875.43 506.24 L875.08 504.61 L874.72 502.98 L874.37 501.35 L874.02 499.72 L873.67 498.09 L873.33 496.46 L872.98 494.83 L872.64 493.20 L872.30 491.57 L871.97 489.94 L871.63 488.31 L871.30 486.68 L870.97 485.05 L870.64 483.42 L870.32 481.80 L870.00 480.17 L869.68 478.54 L869.36 476.91 L869.04 475.28 L868.73 473.65 L868.42 472.02 L868.11 470.39 L867.81 468.76 L867.51 467.13 L867.21 465.50 L866.91 463.87 L866.62 462.24 L866.32 460.61 L866.04 458.98 L865.75 457.35 L865.47 455.72 L865.19 454.09 L864.91 452.46 L864.63 450.83 L864.36 449.20 L864.09 447.57 L863.82 445.94 L863.56 444.31 L863.30 442.68 L863.04 441.05 L862.79 439.42 L862.54 437.79 L862.29 436.16 L862.04 434.53 L861.80 432.90 L861.56 431.27 L861.32 429.64 L861.09 428.01 L860.86 426.38 L860.63 424.75 L860.41 423.12 L860.19 421.49 L859.97 419.86 L859.76 418.24 L859.54 416.61 L859.34 414.98 L859.13 413.35 L858.93 411.72 L858.73 410.09 L858.54 408.46 L858.35 406.83 L858.16 405.20 L857.97 403.57 L857.79 401.94 L857.61 400.31 L857.44 398.68 L857.27 397.05 L857.10 395.42 L856.93 393.79 L856.77 392.16 L856.61 390.53 L856.46 388.90 L856.31 387.27 L856.16 385.64 L856.02 384.01 L855.88 382.38 L855.74 380.75 L855.61 379.12 L855.48 377.49 L855.35 375.86 L855.23 374.23 L855.11 372.60 L854.99 370.97 L854.88 369.34 L854.77 367.71 L854.67 366.08 L854.57 364.45 L854.47 362.82 L854.38 361.19 L854.29 359.56 L854.20 357.93 L854.12 356.30 L854.04 354.67 L853.96 353.04 L853.89 351.42 L853.82 349.79 L853.76 348.16 L853.69 346.53 L853.64 344.90 L853.58 343.27 L853.53 341.64 L853.49 340.01 L853.44 338.38 L853.41 336.75 L853.37 335.12 L853.34 333.49 L853.31 331.86 L853.29 330.23 L853.27 328.60 L853.25 326.97 L853.24 325.34 L853.23 323.71 L853.22 322.08 L853.22 320.45 L853.22 318.82 L853.23 317.19 L853.24 315.56 L853.25 313.93 L853.27 312.30 L853.29 310.67 L853.31 309.04 L853.34 307.41 L853.37 305.78 L853.41 304.15 L853.44 302.52 L853.49 300.89 L853.53 299.26 L853.58 297.63 L853.64 296.00 L853.69 294.37 L853.76 292.74 L853.82 291.11 L853.89 289.48 L853.96 287.86 L854.04 286.23 L854.12 284.60 L854.20 282.97 L854.29 281.34 L854.38 279.71 L854.47 278.08 L854.57 276.45 L854.67 274.82 L854.77 273.19 L854.88 271.56 L854.99 269.93 L855.11 268.30 L855.23 266.67 L855.35 265.04 L855.48 263.41 L855.61 261.78 L855.74 260.15 L855.88 258.52 L856.02 256.89 L856.16 255.26 L856.31 253.63 L856.46 252.00 L856.61 250.37 L856.77 248.74 L856.93 247.11 L857.10 245.48 L857.27 243.85 L857.44 242.22 L857.61 240.59 L857.79 238.96 L857.97 237.33 L858.16 235.70 L858.35 234.07 L858.54 232.44 L858.73 230.81 L858.93 229.18 L859.13 227.55 L859.34 225.92 L859.54 224.29 L859.76 222.66 L859.97 221.04 L860.19 219.41 L860.41 217.78 L860.63 216.15 L860.86 214.52 L861.09 212.89 L861.32 211.26 L861.56 209.63 L861.80 208.00 L862.04 206.37 L862.29 204.74 L862.54 203.11 L862.79 201.48 L863.04 199.85 L863.30 198.22 L863.56 196.59 L863.82 194.96 L864.09 193.33 L864.36 191.70 L864.63 190.07 L864.91 188.44 L865.19 186.81 L865.47 185.18 L865.75 183.55 L866.04 181.92 L866.32 180.29 L866.62 178.66 L866.91 177.03 L867.21 175.40 L867.51 173.77 L867.81 172.14 L868.11 170.51 L868.42 168.88 L868.73 167.25 L869.04 165.62 L869.36 163.99 L869.68 162.36 L870.00 160.73 L870.32 159.10 L870.64 157.47 L870.97 155.85 L871.30 154.22 L871.63 152.59 L871.97 150.96 L872.30 149.33 L872.64 147.70 L872.98 146.07 L873.33 144.44 L873.67 142.81 L874.02 141.18 L874.37 139.55 L874.72 137.92 L875.08 136.29 L875.43 134.66 L875.79 133.03 L876.15 131.40 L876.51 129.77 L876.88 128.14 L877.24 126.51 L877.61 124.88 L877.98 123.25 L878.35 121.62 L878.72 119.99 L879.10 118.36 L879.48 116.73 L879.85 115.10 L880.23 113.47 L880.62 111.84 L881.00 110.21 L881.38 108.58 L881.77 106.95 L882.16 105.32 L882.55 103.69 L882.94 102.06 L883.33 100.43 L883.73 98.80 L884.12 97.17 L884.52 95.54 L884.92 93.91 L885.32 92.28 L885.72 90.66 L886.12 89.03 L886.52 87.40 L886.93 85.77 L887.33 84.14 L887.74 82.51 L888.15 80.88 L888.55 79.25 L888.96 77.62 L889.37 75.99 L889.79 74.36 L890.20 72.73 L890.61 71.10 L891.03 69.47 L891.44 67.84 L891.86 66.21 L892.27 64.58 L892.69 62.95 L893.11 61.32 L893.53 59.69 L893.95 58.06 L894.37 56.43 L894.79 54.80 L895.21 53.17 L895.63 51.54 L896.06 49.91 L896.48 48.28 L896.90 46.65 L897.32 45.02 L897.75 43.39 L898.17 41.76 L898.60 40.13 L899.02 38.50 L899.45 36.87 L899.87 35.24 L900.30 33.61 L900.72 31.98 L901.15 30.35 L901.57 28.72 L902.00 27.09"/>
<path d="M902.00 613.81 L901.15 612.18 L900.30 610.55 L899.45 608.92 L898.60 607.29 L897.74 605.66 L896.89 604.03 L896.04 602.40 L895.19 600.77 L894.35 599.14 L893.50 597.51 L892.65 595.88 L891.80 594.25 L890.96 592.62 L890.11 590.99 L889.27 589.36 L888.42 587.73 L887.58 586.10 L886.74 584.47 L885.90 582.84 L885.06 581.21 L884.22 579.58 L883.38 577.95 L882.55 576.32 L881.72 574.69 L880.88 573.06 L880.05 571.43 L879.23 569.80 L878.40 568.17 L877.57 566.54 L876.75 564.91 L875.93 563.28 L875.11 561.65 L874.29 560.02 L873.48 558.39 L872.66 556.76 L871.85 555.13 L871.04 553.50 L870.24 551.87 L869.43 550.24 L868.63 548.62 L867.83 546.99 L867.04 545.36 L866.24 543.73 L865.45 542.10 L864.67 540.47 L863.88 538.84 L863.10 537.21 L862.32 535.58 L861.54 533.95 L860.77 532.32 L860.00 530.69 L859.23 529.06 L858.47 527.43 L857.71 525.80 L856.95 524.17 L856.20 522.54 L855.45 520.91 L854.70 519.28 L853.96 517.65 L853.22 516.02 L852.48 514.39 L851.75 512.76 L851.03 511.13 L850.30 509.50 L849.58 507.87 L848.87 506.24 L848.15 504.61 L847.45 502.98 L846.74 501.35 L846.04 499.72 L845.35 498.09 L844.66 496.46 L843.97 494.83 L843.29 493.20 L842.61 491.57 L841.94 489.94 L841.27 488.31 L840.60 486.68 L839.94 485.05 L839.29 483.42 L838.64 481.80 L837.99 480.17 L837.35 478.54 L836.72 476.91 L836.09 475.28 L835.46 473.65 L834.84 472.02 L834.23 470.39 L833.62 468.76 L833.01 467.13 L832.42 465.50 L831.82 463.87 L831.23 462.24 L830.65 460.61 L830.07 458.98 L829.50 457.35 L828.93 455.72 L828.37 454.09 L827.81 452.46 L827.26 450.83 L826.72 449.20 L826.18 447.57 L825.65 445.94 L825.12 444.31 L824.60 442.68 L824.09 441.05 L823.58 439.42 L823.07 437.79 L822.57 436.16 L822.08 434.53 L821.60 432.90 L821.12 431.27 L820.65 429.64 L820.18 428.01 L819.72 426.38 L819.26 424.75 L818.82 423.12 L818.37 421.49 L817.94 419.86 L817.51 418.24 L817.09 416.61 L816.67 414.98 L816.26 413.35 L815.86 411.72 L815.46 410.09 L815.07 408.46 L814.69 406.83 L814.31 405.20 L813.94 403.57 L813.58 401.94 L813.22 400.31 L812.87 398.68 L812.53 397.05 L812.20 395.42 L811.87 393.79 L811.54 392.16 L811.23 390.53 L810.92 388.90 L810.62 387.27 L810.32 385.64 L810.04 384.01 L809.76 382.38 L809.48 380.75 L809.21 379.12 L808.96 377.49 L808.70 375.86 L808.46 374.23 L808.22 372.60 L807.99 370.97 L807.76 369.34 L807.55 367.71 L807.34 366.08 L807.14 364.45 L806.94 362.82 L806.75 361.19 L806.57 359.56 L806.40 357.93 L806.23 356.30 L806.07 354.67 L805.92 353.04 L805.78 351.42 L805.64 349.79 L805.51 348.16 L805.39 346.53 L805.27 344.90 L805.17 343.27 L805.07 341.64 L804.97 340.01 L804.89 338.38 L804.81 336.75 L804.74 335.12 L804.68 333.49 L804.62 331.86 L804.57 330.23 L804.53 328.60 L804.50 326.97 L804.47 325.34 L804.45 323.71 L804.44 322.08 L804.44 320.45 L804.44 318.82 L804.45 317.19 L804.47 315.56 L804.50 313.93 L804.53 312.30 L804.57 310.67 L804.62 309.04 L804.68 307.41 L804.74 305.78 L804.81 304.15 L804.89 302.52 L804.97 300.89 L805.07 299.26 L805.17 297.63 L805.27 296.00 L805.39 294.37 L805.51 292.74 L805.64 291.11 L805.78 289.48 L805.92 287.86 L806.07 286.23 L806.23 284.60 L806.40 282.97 L806.57 281.34 L806.75 279.71 L806.94 278.08 L807.14 276.45 L807.34 274.82 L807.55 273.19 L807.76 271.56 L807.99 269.93 L808.22 268.30 L808.46 266.67 L808.70 265.04 L808.96 263.41 L809.21 261.78 L809.48 260.15 L809.76 258.52 L810.04 256.89 L810.32 255.26 L810.62 253.63 L810.92 252.00 L811.23 250.37 L811.54 248.74 L811.87 247.11 L812.20 245.48 L812.53 243.85 L812.87 242.22 L813.22 240.59 L813.58 238.96 L813.94 237.33 L814.31 235.70 L814.69 234.07 L815.07 232.44 L815.46 230.81 L815.86 229.18 L816.26 227.55 L816.67 225.92 L817.09 224.29 L817.51 222.66 L817.94 221.04 L818.37 219.41 L818.82 217.78 L819.26 216.15 L819.72 214.52 L820.18 212.89 L820.65 211.26 L821.12 209.63 L821.60 208.00 L822.08 206.37 L822.57 204.74 L823.07 203.11 L823.58 201.48 L824.09 199.85 L824.60 198.22 L825.12 196.59 L825.65 194.96 L826.18 193.33 L826.72 191.70 L827.26 190.07 L827.81 188.44 L828.37 186.81 L828.93 185.18 L829.50 183.55 L830.07 181.92 L830.65 180.29 L831.23 178.66 L831.82 177.03 L832.42 175.40 L833.01 173.77 L833.62 172.14 L834.23 170.51 L834.84 168.88 L835.46 167.25 L836.09 165.62 L836.72 163.99 L837.35 162.36 L837.99 160.73 L838.64 159.10 L839.29 157.47 L839.94 155.85 L840.60 154.22 L841.27 152.59 L841.94 150.96 L842.61 149.33 L843.29 147.70 L843.97 146.07 L844.66 144.44 L845.35 142.81 L846.04 141.18 L846.74 139.55 L847.45 137.92 L848.15 136.29 L848.87 134.66 L849.58 133.03 L850.30 131.40 L851.03 129.77 L851.75 128.14 L852.48 126.51 L853.22 124.88 L853.96 123.25 L854.70 121.62 L855.45 119.99 L856.20 118.36 L856.95 116.73 L857.71 115.10 L858.47 113.47 L859.23 111.84 L860.00 110.21 L860.77 108.58 L861.54 106.95 L862.32 105.32 L863.10 103.69 L863.88 102.06 L864.67 100.43 L865.45 98.80 L866.24 97.17 L867.04 95.54 L867.83 93.91 L868.63 92.28 L869.43 90.66 L870.24 89.03 L871.04 87.40 L871.85 85.77 L872.66 84.14 L873.48 82.51 L874.29 80.88 L875.11 79.25 L875.93 77.62 L876.75 75.99 L877.57 74.36 L878.40 72.73 L879.23 71.10 L880.05 69.47 L880.88 67.84 L881.72 66.21 L882.55 64.58 L883.38 62.95 L884.22 61.32 L885.06 59.69 L885.90 58.06 L886.74 56.43 L887.58 54.80 L888.42 53.17 L889.27 51.54 L890.11 49.91 L890.96 48.28 L891.80 46.65 L892.65 45.02 L893.50 43.39 L894.35 41.76 L895.19 40.13 L896.04 38.50 L896.89 36.87 L897.74 35.24 L898.60 33.61 L899.45 31.98 L900.30 30.35 L901.15 28.72 L902.00 27.09"/>
<path d="M902.00 613.81 L900.72 612.18 L899.45 610.55 L898.17 608.92 L896.89 607.29 L895.62 605.66 L894.34 604.03 L893.07 602.40 L891.79 600.77 L890.52 599.14 L889.25 597.51 L887.97 595.88 L886.70 594.25 L885.43 592.62 L884.17 590.99 L882.90 589.36 L881.63 587.73 L880.37 586.10 L879.11 584.47 L877.85 582.84 L876.59 581.21 L875.33 579.58 L874.08 577.95 L872.82 576.32 L871.57 574.69 L870.33 573.06 L869.08 571.43 L867.84 569.80 L866.60 568.17 L865.36 566.54 L864.12 564.91 L862.89 563.28 L861.66 561.65 L860.44 560.02 L859.21 558.39 L857.99 556.76 L856.78 555.13 L855.57 553.50 L854.36 551.87 L853.15 550.24 L851.95 548.62 L850.75 546.99 L849.56 545.36 L848.37 543.73 L847.18 542.10 L846.00 540.47 L844.82 538.84 L843.65 537.21 L842.48 535.58 L841.31 533.95 L840.15 532.32 L839.00 530.69 L837.85 529.06 L836.70 527.43 L835.56 525.80 L834.43 524.17 L833.30 522.54 L832.17 520.91 L831.05 519.28 L829.94 517.65 L828.83 516.02 L827.73 514.39 L826.63 512.76 L825.54 511.13 L824.45 509.50 L823.37 507.87 L822.30 506.24 L821.23 504.61 L820.17 502.98 L819.11 501.35 L818.06 499.72 L817.02 498.09 L815.98 496.46 L814.95 494.83 L813.93 493.20 L812.91 491.57 L811.90 489.94 L810.90 488.31 L809.91 486.68 L808.92 485.05 L807.93 483.42 L806.96 481.80 L805.99 480.17 L805.03 478.54 L804.08 476.91 L803.13 475.28 L802.20 473.65 L801.27 472.02 L800.34 470.39 L799.43 468.76 L798.52 467.13 L797.62 465.50 L796.73 463.87 L795.85 462.24 L794.97 460.61 L794.11 458.98 L793.25 457.35 L792.40 455.72 L791.56 454.09 L790.72 452.46 L789.90 450.83 L789.08 449.20 L788.27 447.57 L787.47 445.94 L786.68 444.31 L785.90 442.68 L785.13 441.05 L784.36 439.42 L783.61 437.79 L782.86 436.16 L782.13 434.53 L781.40 432.90 L780.68 431.27 L779.97 429.64 L779.27 428.01 L778.58 426.38 L777.90 424.75 L777.22 423.12 L776.56 421.49 L775.91 419.86 L775.27 418.24 L774.63 416.61 L774.01 414.98 L773.39 413.35 L772.79 411.72 L772.19 410.09 L771.61 408.46 L771.04 406.83 L770.47 405.20 L769.92 403.57 L769.37 401.94 L768.84 400.31 L768.31 398.68 L767.80 397.05 L767.29 395.42 L766.80 393.79 L766.32 392.16 L765.84 390.53 L765.38 388.90 L764.93 387.27 L764.49 385.64 L764.05 384.01 L763.63 382.38 L763.22 380.75 L762.82 379.12 L762.43 377.49 L762.05 375.86 L761.69 374.23 L761.33 372.60 L760.98 370.97 L760.65 369.34 L760.32 367.71 L760.01 366.08 L759.70 364.45 L759.41 362.82 L759.13 361.19 L758.86 359.56 L758.60 357.93 L758.35 356.30 L758.11 354.67 L757.88 353.04 L757.67 351.42 L757.46 349.79 L757.27 348.16 L757.08 346.53 L756.91 344.90 L756.75 343.27 L756.60 341.64 L756.46 340.01 L756.33 338.38 L756.22 336.75 L756.11 335.12 L756.02 333.49 L755.93 331.86 L755.86 330.23 L755.80 328.60 L755.75 326.97 L755.71 325.34 L755.68 323.71 L755.67 322.08 L755.66 320.45 L755.67 318.82 L755.68 317.19 L755.71 315.56 L755.75 313.93 L755.80 312.30 L755.86 310.67 L755.93 309.04 L756.02 307.41 L756.11 305.78 L756.22 304.15 L756.33 302.52 L756.46 300.89 L756.60 299.26 L756.75 297.63 L756.91 296.00 L757.08 294.37 L757.27 292.74 L757.46 291.11 L757.67 289.48 L757.88 287.86 L758.11 286.23 L758.35 284.60 L758.60 282.97 L758.86 281.34 L759.13 279.71 L759.41 278.08 L759.70 276.45 L760.01 274.82 L760.32 273.19 L760.65 271.56 L760.98 269.93 L761.33 268.30 L761.69 266.67 L762.05 265.04 L762.43 263.41 L762.82 261.78 L763.22 260.15 L763.63 258.52 L764.05 256.89 L764.49 255.26 L764.93 253.63 L765.38 252.00 L765.84 250.37 L766.32 248.74 L766.80 247.11 L767.29 245.48 L767.80 243.85 L768.31 242.22 L768.84 240.59 L769.37 238.96 L769.92 237.33 L770.47 235.70 L771.04 234.07 L771.61 232.44 L772.19 230.81 L772.79 229.18 L773.39 227.55 L774.01 225.92 L774.63 224.29 L775.27 222.66 L775.91 221.04 L776.56 219.41 L777.22 217.78 L777.90 216.15 L778.58 214.52 L779.27 212.89 L779.97 211.26 L780.68 209.63 L781.40 208.00 L782.13 206.37 L782.86 204.74 L783.61 203.11 L784.36 201.48 L785.13 199.85 L785.90 198.22 L786.68 196.59 L787.47 194.96 L788.27 193.33 L789.08 191.70 L789.90 190.07 L790.72 188.44 L791.56 186.81 L792.40 185.18 L793.25 183.55 L794.11 181.92 L794.97 180.29 L795.85 178.66 L796.73 177.03 L797.62 175.40 L798.52 173.77 L799.43 172.14 L800.34 170.51 L801.27 168.88 L802.20 167.25 L803.13 165.62 L804.08 163.99 L805.03 162.36 L805.99 160.73 L806.96 159.10 L807.93 157.47 L808.92 155.85 L809.91 154.22 L810.90 152.59 L811.90 150.96 L812.91 149.33 L813.93 147.70 L814.95 146.07 L815.98 144.44 L817.02 142.81 L818.06 141.18 L819.11 139.55 L820.17 137.92 L821.23 136.29 L822.30 134.66 L823.37 133.03 L824.45 131.40 L825.54 129.77 L826.63 128.14 L827.73 126.51 L828.83 124.88 L829.94 123.25 L831.05 121.62 L832.17 119.99 L833.30 118.36 L834.43 116.73 L835.56 115.10 L836.70 113.47 L837.85 111.84 L839.00 110.21 L840.15 108.58 L841.31 106.95 L842.48 105.32 L843.65 103.69 L844.82 102.06 L846.00 100.43 L847.18 98.80 L848.37 97.17 L849.56 95.54 L850.75 93.91 L851.95 92.28 L853.15 90.66 L854.36 89.03 L855.57 87.40 L856.78 85.77 L857.99 84.14 L859.21 82.51 L860.44 80.88 L861.66 79.25 L862.89 77.62 L864.12 75.99 L865.36 74.36 L866.60 72.73 L867.84 71.10 L869.08 69.47 L870.33 67.84 L871.57 66.21 L872.82 64.58 L874.08 62.95 L875.33 61.32 L876.59 59.69 L877.85 58.06 L879.11 56.43 L880.37 54.80 L881.63 53.17 L882.90 51.54 L884.17 49.91 L885.43 48.28 L886.70 46.65 L887.97 45.02 L889.25 43.39 L890.52 41.76 L891.79 40.13 L893.07 38.50 L894.34 36.87 L895.62 35.24 L896.89 33.61 L898.17 31.98 L899.45 30.35 L900.72 28.72 L902.00 27.09"/>
<path d="M902.00 613.81 L900.30 612.18 L898.59 610.55 L896.89 608.92 L895.19 607.29 L893.49 605.66 L891.79 604.03 L890.09 602.40 L888.39 600.77 L886.69 599.14 L884.99 597.51 L883.30 595.88 L881.60 594.25 L879.91 592.62 L878.22 590.99 L876.53 589.36 L874.84 587.73 L873.16 586.10 L871.48 584.47 L869.80 582.84 L868.12 581.21 L866.44 579.58 L864.77 577.95 L863.10 576.32 L861.43 574.69 L859.77 573.06 L858.11 571.43 L856.45 569.80 L854.80 568.17 L853.15 566.54 L851.50 564.91 L849.86 563.28 L848.22 561.65 L846.58 560.02 L844.95 558.39 L843.33 556.76 L841.70 555.13 L840.09 553.50 L838.48 551.87 L836.87 550.24 L835.27 548.62 L833.67 546.99 L832.08 545.36 L830.49 543.73 L828.91 542.10 L827.33 540.47 L825.76 538.84 L824.20 537.21 L822.64 535.58 L821.09 533.95 L819.54 532.32 L818.00 530.69 L816.47 529.06 L814.94 527.43 L813.42 525.80 L811.90 524.17 L810.40 522.54 L808.90 520.91 L807.40 519.28 L805.92 517.65 L804.44 516.02 L802.97 514.39 L801.51 512.76 L800.05 511.13 L798.60 509.50 L797.16 507.87 L795.73 506.24 L794.31 504.61 L792.89 502.98 L791.48 501.35 L790.08 499.72 L788.69 498.09 L787.31 496.46 L785.94 494.83 L784.57 493.20 L783.22 491.57 L781.87 489.94 L780.53 488.31 L779.21 486.68 L777.89 485.05 L776.58 483.42 L775.28 481.80 L773.99 480.17 L772.71 478.54 L771.44 476.91 L770.18 475.28 L768.93 473.65 L767.69 472.02 L766.46 470.39 L765.24 468.76 L764.03 467.13 L762.83 465.50 L761.64 463.87 L760.46 462.24 L759.30 460.61 L758.14 458.98 L757.00 457.35 L755.86 455.72 L754.74 454.09 L753.63 452.46 L752.53 450.83 L751.44 449.20 L750.36 447.57 L749.30 445.94 L748.24 444.31 L747.20 442.68 L746.17 441.05 L745.15 439.42 L744.14 437.79 L743.15 436.16 L742.17 434.53 L741.20 432.90 L740.24 431.27 L739.29 429.64 L738.36 428.01 L737.44 426.38 L736.53 424.75 L735.63 423.12 L734.75 421.49 L733.88 419.86 L733.02 418.24 L732.18 416.61 L731.34 414.98 L730.53 413.35 L729.72 411.72 L728.93 410.09 L728.15 408.46 L727.38 406.83 L726.63 405.20 L725.89 403.57 L725.16 401.94 L724.45 400.31 L723.75 398.68 L723.06 397.05 L722.39 395.42 L721.73 393.79 L721.09 392.16 L720.46 390.53 L719.84 388.90 L719.24 387.27 L718.65 385.64 L718.07 384.01 L717.51 382.38 L716.96 380.75 L716.43 379.12 L715.91 377.49 L715.41 375.86 L714.92 374.23 L714.44 372.60 L713.98 370.97 L713.53 369.34 L713.10 367.71 L712.68 366.08 L712.27 364.45 L711.88 362.82 L711.51 361.19 L711.14 359.56 L710.80 357.93 L710.46 356.30 L710.15 354.67 L709.84 353.04 L709.56 351.42 L709.28 349.79 L709.02 348.16 L708.78 346.53 L708.55 344.90 L708.33 343.27 L708.13 341.64 L707.95 340.01 L707.78 338.38 L707.62 336.75 L707.48 335.12 L707.36 333.49 L707.24 331.86 L707.15 330.23 L707.07 328.60 L707.00 326.97 L706.95 325.34 L706.91 323.71 L706.89 322.08 L706.88 320.45 L706.89 318.82 L706.91 317.19 L706.95 315.56 L707.00 313.93 L707.07 312.30 L707.15 310.67 L707.24 309.04 L707.36 307.41 L707.48 305.78 L707.62 304.15 L707.78 302.52 L707.95 300.89 L708.13 299.26 L708.33 297.63 L708.55 296.00 L708.78 294.37 L709.02 292.74 L709.28 291.11 L709.56 289.48 L709.84 287.86 L710.15 286.23 L710.46 284.60 L710.80 282.97 L711.14 281.34 L711.51 279.71 L711.88 278.08 L712.27 276.45 L712.68 274.82 L713.10 273.19 L713.53 271.56 L713.98 269.93 L714.44 268.30 L714.92 266.67 L715.41 265.04 L715.91 263.41 L716.43 261.78 L716.96 260.15 L717.51 258.52 L718.07 256.89 L718.65 255.26 L719.24 253.63 L719.84 252.00 L720.46 250.37 L721.09 248.74 L721.73 247.11 L722.39 245.48 L723.06 243.85 L723.75 242.22 L724.45 240.59 L725.16 238.96 L725.89 237.33 L726.63 235.70 L727.38 234.07 L728.15 232.44 L728.93 230.81 L729.72 229.18 L730.53 227.55 L731.34 225.92 L732.18 224.29 L733.02 222.66 L733.88 221.04 L734.75 219.41 L735.63 217.78 L736.53 216.15 L737.44 214.52 L738.36 212.89 L739.29 211.26 L740.24 209.63 L741.20 208.00 L742.17 206.37 L743.15 204.74 L744.14 203.11 L745.15 201.48 L746.17 199.85 L747.20 198.22 L748.24 196.59 L749.30 194.96 L750.36 193.33 L751.44 191.70 L752.53 190.07 L753.63 188.44 L754.74 186.81 L755.86 185.18 L757.00 183.55 L758.14 181.92 L759.30 180.29 L760.46 178.66 L761.64 177.03 L762.83 175.40 L764.03 173.77 L765.24 172.14 L766.46 170.51 L767.69 168.88 L768.93 167.25 L770.18 165.62 L771.44 163.99 L772.71 162.36 L773.99 160.73 L775.28 159.10 L776.58 157.47 L777.89 155.85 L779.21 154.22 L780.53 152.59 L781.87 150.96 L783.22 149.33 L784.57 147.70 L785.94 146.07 L787.31 144.44 L788.69 142.81 L790.08 141.18 L791.48 139.55 L792.89 137.92 L794.31 136.29 L795.73 134.66 L797.16 133.03 L798.60 131.40 L800.05 129.77 L801.51 128.14 L802.97 126.51 L804.44 124.88 L805.92 123.25 L807.40 121.62 L808.90 119.99 L810.40 118.36 L811.90 116.73 L813.42 115.10 L814.94 113.47 L816.47 111.84 L818.00 110.21 L819.54 108.58 L821.09 106.95 L822.64 105.32 L824.20 103.69 L825.76 102.06 L827.33 100.43 L828.91 98.80 L830.49 97.17 L832.08 95.54 L833.67 93.91 L835.27 92.28 L836.87 90.66 L838.48 89.03 L840.09 87.40 L841.70 85.77 L843.33 84.14 L844.95 82.51 L846.58 80.88 L848.22 79.25 L849.86 77.62 L851.50 75.99 L853.15 74.36 L854.80 72.73 L856.45 71.10 L858.11 69.47 L859.77 67.84 L861.43 66.21 L863.10 64.58 L864.77 62.95 L866.44 61.32 L868.12 59.69 L869.80 58.06 L871.48 56.43 L873.16 54.80 L874.84 53.17 L876.53 51.54 L878.22 49.91 L879.91 48.28 L881.60 46.65 L883.30 45.02 L884.99 43.39 L886.69 41.76 L888.39 40.13 L890.09 38.50 L891.79 36.87 L893.49 35.24 L895.19 33.61 L896.89 31.98 L898.59 30.35 L900.30 28.72 L902.00 27.09"/>
<path d="M902.00 613.81 L899.87 612.18 L897.74 610.55 L895.62 608.92 L893.49 607.29 L891.36 605.66 L889.24 604.03 L887.11 602.40 L884.99 600.77 L882.86 599.14 L880.74 597.51 L878.62 595.88 L876.51 594.25 L874.39 592.62 L872.28 590.99 L870.16 589.36 L868.06 587.73 L865.95 586.10 L863.85 584.47 L861.74 582.84 L859.65 581.21 L857.55 579.58 L855.46 577.95 L853.37 576.32 L851.29 574.69 L849.21 573.06 L847.13 571.43 L845.06 569.80 L843.00 568.17 L840.93 566.54 L838.87 564.91 L836.82 563.28 L834.77 561.65 L832.73 560.02 L830.69 558.39 L828.66 556.76 L826.63 555.13 L824.61 553.50 L822.59 551.87 L820.58 550.24 L818.58 548.62 L816.58 546.99 L814.59 545.36 L812.61 543.73 L810.63 542.10 L808.66 540.47 L806.70 538.84 L804.75 537.21 L802.80 535.58 L800.86 533.95 L798.92 532.32 L797.00 530.69 L795.08 529.06 L793.17 527.43 L791.27 525.80 L789.38 524.17 L787.50 522.54 L785.62 520.91 L783.75 519.28 L781.90 517.65 L780.05 516.02 L778.21 514.39 L776.38 512.76 L774.56 511.13 L772.75 509.50 L770.95 507.87 L769.16 506.24 L767.38 504.61 L765.61 502.98 L763.85 501.35 L762.10 499.72 L760.37 498.09 L758.64 496.46 L756.92 494.83 L755.22 493.20 L753.52 491.57 L751.84 489.94 L750.17 488.31 L748.51 486.68 L746.86 485.05 L745.22 483.42 L743.60 481.80 L741.99 480.17 L740.39 478.54 L738.80 476.91 L737.22 475.28 L735.66 473.65 L734.11 472.02 L732.57 470.39 L731.05 468.76 L729.54 467.13 L728.04 465.50 L726.55 463.87 L725.08 462.24 L723.62 460.61 L722.18 458.98 L720.75 457.35 L719.33 455.72 L717.93 454.09 L716.54 452.46 L715.16 450.83 L713.80 449.20 L712.45 447.57 L711.12 445.94 L709.80 444.31 L708.50 442.68 L707.21 441.05 L705.94 439.42 L704.68 437.79 L703.44 436.16 L702.21 434.53 L701.00 432.90 L699.80 431.27 L698.62 429.64 L697.45 428.01 L696.30 426.38 L695.16 424.75 L694.04 423.12 L692.94 421.49 L691.85 419.86 L690.78 418.24 L689.72 416.61 L688.68 414.98 L687.66 413.35 L686.65 411.72 L685.66 410.09 L684.68 408.46 L683.73 406.83 L682.78 405.20 L681.86 403.57 L680.95 401.94 L680.06 400.31 L679.19 398.68 L678.33 397.05 L677.49 395.42 L676.67 393.79 L675.86 392.16 L675.07 390.53 L674.30 388.90 L673.55 387.27 L672.81 385.64 L672.09 384.01 L671.39 382.38 L670.70 380.75 L670.04 379.12 L669.39 377.49 L668.76 375.86 L668.14 374.23 L667.55 372.60 L666.97 370.97 L666.41 369.34 L665.87 367.71 L665.34 366.08 L664.84 364.45 L664.35 362.82 L663.88 361.19 L663.43 359.56 L663.00 357.93 L662.58 356.30 L662.18 354.67 L661.81 353.04 L661.44 351.42 L661.10 349.79 L660.78 348.16 L660.47 346.53 L660.19 344.90 L659.92 343.27 L659.67 341.64 L659.44 340.01 L659.22 338.38 L659.03 336.75 L658.85 335.12 L658.69 333.49 L658.55 331.86 L658.43 330.23 L658.33 328.60 L658.25 326.97 L658.18 325.34 L658.14 323.71 L658.11 322.08 L658.10 320.45 L658.11 318.82 L658.14 317.19 L658.18 315.56 L658.25 313.93 L658.33 312.30 L658.43 310.67 L658.55 309.04 L658.69 307.41 L658.85 305.78 L659.03 304.15 L659.22 302.52 L659.44 300.89 L659.67 299.26 L659.92 297.63 L660.19 296.00 L660.47 294.37 L660.78 292.74 L661.10 291.11 L661.44 289.48 L661.81 287.86 L662.18 286.23 L662.58 284.60 L663.00 282.97 L663.43 281.34 L663.88 279.71 L664.35 278.08 L664.84 276.45 L665.34 274.82 L665.87 273.19 L666.41 271.56 L666.97 269.93 L667.55 268.30 L668.14 266.67 L668.76 265.04 L669.39 263.41 L670.04 261.78 L670.70 260.15 L671.39 258.52 L672.09 256.89 L672.81 255.26 L673.55 253.63 L674.30 252.00 L675.07 250.37 L675.86 248.74 L676.67 247.11 L677.49 245.48 L678.33 243.85 L679.19 242.22 L680.06 240.59 L680.95 238.96 L681.86 237.33 L682.78 235.70 L683.73 234.07 L684.68 232.44 L685.66 230.81 L686.65 229.18 L687.66 227.55 L688.68 225.92 L689.72 224.29 L690.78 222.66 L691.85 221.04 L692.94 219.41 L694.04 217.78 L695.16 216.15 L696.30 214.52 L697.45 212.89 L698.62 211.26 L699.80 209.63 L701.00 208.00 L702.21 206.37 L703.44 204.74 L704.68 203.11 L705.94 201.48 L707.21 199.85 L708.50 198.22 L709.80 196.59 L711.12 194.96 L712.45 193.33 L713.80 191.70 L715.16 190.07 L716.54 188.44 L717.93 186.81 L719.33 185.18 L720.75 183.55 L722.18 181.92 L723.62 180.29 L725.08 178.66 L726.55 177.03 L728.04 175.40 L729.54 173.77 L731.05 172.14 L732.57 170.51 L734.11 168.88 L735.66 167.25 L737.22 165.62 L738.80 163.99 L740.39 162.36 L741.99 160.73 L743.60 159.10 L745.22 157.47 L746.86 155.85 L748.51 154.22 L750.17 152.59 L751.84 150.96 L753.52 149.33 L755.22 147.70 L756.92 146.07 L758.64 144.44 L760.37 142.81 L762.10 141.18 L763.85 139.55 L765.61 137.92 L767.38 136.29 L769.16 134.66 L770.95 133.03 L772.75 131.40 L774.56 129.77 L776.38 128.14 L778.21 126.51 L780.05 124.88 L781.90 123.25 L783.75 121.62 L785.62 119.99 L787.50 118.36 L789.38 116.73 L791.27 115.10 L793.17 113.47 L795.08 111.84 L797.00 110.21 L798.92 108.58 L800.86 106.95 L802.80 105.32 L804.75 103.69 L806.70 102.06 L808.66 100.43 L810.63 98.80 L812.61 97.17 L814.59 95.54 L816.58 93.91 L818.58 92.28 L820.58 90.66 L822.59 89.03 L824.61 87.40 L826.63 85.77 L828.66 84.14 L830.69 82.51 L832.73 80.88 L834.77 79.25 L836.82 77.62 L838.87 75.99 L840.93 74.36 L843.00 72.73 L845.06 71.10 L847.13 69.47 L849.21 67.84 L851.29 66.21 L853.37 64.58 L855.46 62.95 L857.55 61.32 L859.65 59.69 L861.74 58.06 L863.85 56.43 L865.95 54.80 L868.06 53.17 L870.16 51.54 L872.28 49.91 L874.39 48.28 L876.51 46.65 L878.62 45.02 L880.74 43.39 L882.86 41.76 L884.99 40.13 L887.11 38.50 L889.24 36.87 L891.36 35.24 L893.49 33.61 L895.62 31.98 L897.74 30.35 L899.87 28.72 L902.00 27.09"/>
<path d="M902.00 613.81 L899.45 612.18 L896.89 610.55 L894.34 608.92 L891.79 607.29 L889.23 605.66 L886.68 604.03 L884.13 602.40 L881.58 600.77 L879.04 599.14 L876.49 597.51 L873.95 595.88 L871.41 594.25 L868.87 592.62 L866.33 590.99 L863.80 589.36 L861.27 587.73 L858.74 586.10 L856.21 584.47 L853.69 582.84 L851.18 581.21 L848.66 579.58 L846.15 577.95 L843.65 576.32 L841.15 574.69 L838.65 573.06 L836.16 571.43 L833.68 569.80 L831.19 568.17 L828.72 566.54 L826.25 564.91 L823.78 563.28 L821.33 561.65 L818.87 560.02 L816.43 558.39 L813.99 556.76 L811.56 555.13 L809.13 553.50 L806.71 551.87 L804.30 550.24 L801.90 548.62 L799.50 546.99 L797.11 545.36 L794.73 543.73 L792.36 542.10 L790.00 540.47 L787.64 538.84 L785.29 537.21 L782.96 535.58 L780.63 533.95 L778.31 532.32 L776.00 530.69 L773.70 529.06 L771.41 527.43 L769.13 525.80 L766.86 524.17 L764.60 522.54 L762.35 520.91 L760.11 519.28 L757.88 517.65 L755.66 516.02 L753.45 514.39 L751.26 512.76 L749.08 511.13 L746.90 509.50 L744.74 507.87 L742.60 506.24 L740.46 504.61 L738.34 502.98 L736.22 501.35 L734.13 499.72 L732.04 498.09 L729.97 496.46 L727.91 494.83 L725.86 493.20 L723.83 491.57 L721.81 489.94 L719.80 488.31 L717.81 486.68 L715.83 485.05 L713.87 483.42 L711.92 481.80 L709.98 480.17 L708.06 478.54 L706.16 476.91 L704.27 475.28 L702.39 473.65 L700.53 472.02 L698.69 470.39 L696.86 468.76 L695.04 467.13 L693.25 465.50 L691.46 463.87 L689.70 462.24 L687.95 460.61 L686.21 458.98 L684.50 457.35 L682.80 455.72 L681.11 454.09 L679.44 452.46 L677.79 450.83 L676.16 449.20 L674.54 447.57 L672.95 445.94 L671.37 444.31 L669.80 442.68 L668.26 441.05 L666.73 439.42 L665.22 437.79 L663.72 436.16 L662.25 434.53 L660.79 432.90 L659.36 431.27 L657.94 429.64 L656.54 428.01 L655.16 426.38 L653.79 424.75 L652.45 423.12 L651.12 421.49 L649.82 419.86 L648.53 418.24 L647.26 416.61 L646.02 414.98 L644.79 413.35 L643.58 411.72 L642.39 410.09 L641.22 408.46 L640.07 406.83 L638.94 405.20 L637.83 403.57 L636.74 401.94 L635.67 400.31 L634.62 398.68 L633.59 397.05 L632.59 395.42 L631.60 393.79 L630.63 392.16 L629.69 390.53 L628.76 388.90 L627.85 387.27 L626.97 385.64 L626.11 384.01 L625.27 382.38 L624.44 380.75 L623.64 379.12 L622.87 377.49 L622.11 375.86 L621.37 374.23 L620.66 372.60 L619.96 370.97 L619.29 369.34 L618.64 367.71 L618.01 366.08 L617.41 364.45 L616.82 362.82 L616.26 361.19 L615.72 359.56 L615.20 357.93 L614.70 356.30 L614.22 354.67 L613.77 353.04 L613.33 351.42 L612.92 349.79 L612.53 348.16 L612.17 346.53 L611.82 344.90 L611.50 343.27 L611.20 341.64 L610.92 340.01 L610.67 338.38 L610.43 336.75 L610.22 335.12 L610.03 333.49 L609.87 331.86 L609.72 330.23 L609.60 328.60 L609.50 326.97 L609.42 325.34 L609.36 323.71 L609.33 322.08 L609.32 320.45 L609.33 318.82 L609.36 317.19 L609.42 315.56 L609.50 313.93 L609.60 312.30 L609.72 310.67 L609.87 309.04 L610.03 307.41 L610.22 305.78 L610.43 304.15 L610.67 302.52 L610.92 300.89 L611.20 299.26 L611.50 297.63 L611.82 296.00 L612.17 294.37 L612.53 292.74 L612.92 291.11 L613.33 289.48 L613.77 287.86 L614.22 286.23 L614.70 284.60 L615.20 282.97 L615.72 281.34 L616.26 279.71 L616.82 278.08 L617.41 276.45 L618.01 274.82 L618.64 273.19 L619.29 271.56 L619.96 269.93 L620.66 268.30 L621.37 266.67 L622.11 265.04 L622.87 263.41 L623.64 261.78 L624.44 260.15 L625.27 258.52 L626.11 256.89 L626.97 255.26 L627.85 253.63 L628.76 252.00 L629.69 250.37 L630.63 248.74 L631.60 247.11 L632.59 245.48 L633.59 243.85 L634.62 242.22 L635.67 240.59 L636.74 238.96 L637.83 237.33 L638.94 235.70 L640.07 234.07 L641.22 232.44 L642.39 230.81 L643.58 229.18 L644.79 227.55 L646.02 225.92 L647.26 224.29 L648.53 222.66 L649.82 221.04 L651.12 219.41 L652.45 217.78 L653.79 216.15 L655.16 214.52 L656.54 212.89 L657.94 211.26 L659.36 209.63 L660.79 208.00 L662.25 206.37 L663.72 204.74 L665.22 203.11 L666.73 201.48 L668.26 199.85 L669.80 198.22 L671.37 196.59 L672.95 194.96 L674.54 193.33 L676.16 191.70 L677.79 190.07 L679.44 188.44 L681.11 186.81 L682.80 185.18 L684.50 183.55 L686.21 181.92 L687.95 180.29 L689.70 178.66 L691.46 177.03 L693.25 175.40 L695.04 173.77 L696.86 172.14 L698.69 170.51 L700.53 168.88 L702.39 167.25 L704.27 165.62 L706.16 163.99 L708.06 162.36 L709.98 160.73 L711.92 159.10 L713.87 157.47 L715.83 155.85 L717.81 154.22 L719.80 152.59 L721.81 150.96 L723.83 149.33 L725.86 147.70 L727.91 146.07 L729.97 144.44 L732.04 142.81 L734.13 141.18 L736.22 139.55 L738.34 137.92 L740.46 136.29 L742.60 134.66 L744.74 133.03 L746.90 131.40 L749.08 129.77 L751.26 128.14 L753.45 126.51 L755.66 124.88 L757.88 123.25 L760.11 121.62 L762.35 119.99 L764.60 118.36 L766.86 116.73 L769.13 115.10 L771.41 113.47 L773.70 111.84 L776.00 110.21 L778.31 108.58 L780.63 106.95 L782.96 105.32 L785.29 103.69 L787.64 102.06 L790.00 100.43 L792.36 98.80 L794.73 97.17 L797.11 95.54 L799.50 93.91 L801.90 92.28 L804.30 90.66 L806.71 89.03 L809.13 87.40 L811.56 85.77 L813.99 84.14 L816.43 82.51 L818.87 80.88 L821.33 79.25 L823.78 77.62 L826.25 75.99 L828.72 74.36 L831.19 72.73 L833.68 71.10 L836.16 69.47 L838.65 67.84 L841.15 66.21 L843.65 64.58 L846.15 62.95 L848.66 61.32 L851.18 59.69 L853.69 58.06 L856.21 56.43 L858.74 54.80 L861.27 53.17 L863.80 51.54 L866.33 49.91 L868.87 48.28 L871.41 46.65 L873.95 45.02 L876.49 43.39 L879.04 41.76 L881.58 40.13 L884.13 38.50 L886.68 36.87 L889.23 35.24 L891.79 33.61 L894.34 31.98 L896.89 30.35 L899.45 28.72 L902.00 27.09"/>
<path d="M902.00 613.81 L899.02 612.18 L896.04 610.55 L893.06 608.92 L890.08 607.29 L887.11 605.66 L884.13 604.03 L881.15 602.40 L878.18 600.77 L875.21 599.14 L872.24 597.51 L869.27 595.88 L866.31 594.25 L863.35 592.62 L860.39 590.99 L857.43 589.36 L854.48 587.73 L851.53 586.10 L848.58 584.47 L845.64 582.84 L842.71 581.21 L839.77 579.58 L836.85 577.95 L833.92 576.32 L831.01 574.69 L828.09 573.06 L825.19 571.43 L822.29 569.80 L819.39 568.17 L816.51 566.54 L813.62 564.91 L810.75 563.28 L807.88 561.65 L805.02 560.02 L802.17 558.39 L799.32 556.76 L796.48 555.13 L793.65 553.50 L790.83 551.87 L788.02 550.24 L785.21 548.62 L782.42 546.99 L779.63 545.36 L776.85 543.73 L774.09 542.10 L771.33 540.47 L768.58 538.84 L765.84 537.21 L763.12 535.58 L760.40 533.95 L757.69 532.32 L755.00 530.69 L752.31 529.06 L749.64 527.43 L746.98 525.80 L744.33 524.17 L741.69 522.54 L739.07 520.91 L736.46 519.28 L733.86 517.65 L731.27 516.02 L728.70 514.39 L726.14 512.76 L723.59 511.13 L721.05 509.50 L718.53 507.87 L716.03 506.24 L713.54 504.61 L711.06 502.98 L708.59 501.35 L706.15 499.72 L703.71 498.09 L701.29 496.46 L698.89 494.83 L696.50 493.20 L694.13 491.57 L691.78 489.94 L689.44 488.31 L687.11 486.68 L684.80 485.05 L682.51 483.42 L680.24 481.80 L677.98 480.17 L675.74 478.54 L673.52 476.91 L671.31 475.28 L669.12 473.65 L666.95 472.02 L664.80 470.39 L662.67 468.76 L660.55 467.13 L658.45 465.50 L656.37 463.87 L654.31 462.24 L652.27 460.61 L650.25 458.98 L648.25 457.35 L646.26 455.72 L644.30 454.09 L642.35 452.46 L640.43 450.83 L638.52 449.20 L636.64 447.57 L634.77 445.94 L632.93 444.31 L631.10 442.68 L629.30 441.05 L627.52 439.42 L625.75 437.79 L624.01 436.16 L622.29 434.53 L620.59 432.90 L618.92 431.27 L617.26 429.64 L615.63 428.01 L614.02 426.38 L612.43 424.75 L610.86 423.12 L609.31 421.49 L607.79 419.86 L606.29 418.24 L604.81 416.61 L603.35 414.98 L601.92 413.35 L600.51 411.72 L599.12 410.09 L597.76 408.46 L596.42 406.83 L595.10 405.20 L593.80 403.57 L592.53 401.94 L591.28 400.31 L590.06 398.68 L588.86 397.05 L587.68 395.42 L586.53 393.79 L585.40 392.16 L584.30 390.53 L583.22 388.90 L582.16 387.27 L581.13 385.64 L580.13 384.01 L579.14 382.38 L578.19 380.75 L577.25 379.12 L576.34 377.49 L575.46 375.86 L574.60 374.23 L573.77 372.60 L572.96 370.97 L572.17 369.34 L571.42 367.71 L570.68 366.08 L569.97 364.45 L569.29 362.82 L568.63 361.19 L568.00 359.56 L567.39 357.93 L566.81 356.30 L566.26 354.67 L565.73 353.04 L565.22 351.42 L564.74 349.79 L564.29 348.16 L563.86 346.53 L563.46 344.90 L563.09 343.27 L562.73 341.64 L562.41 340.01 L562.11 338.38 L561.84 336.75 L561.59 335.12 L561.37 333.49 L561.18 331.86 L561.01 330.23 L560.86 328.60 L560.75 326.97 L560.66 325.34 L560.59 323.71 L560.55 322.08 L560.54 320.45 L560.55 318.82 L560.59 317.19 L560.66 315.56 L560.75 313.93 L560.86 312.30 L561.01 310.67 L561.18 309.04 L561.37 307.41 L561.59 305.78 L561.84 304.15 L562.11 302.52 L562.41 300.89 L562.73 299.26 L563.09 297.63 L563.46 296.00 L563.86 294.37 L564.29 292.74 L564.74 291.11 L565.22 289.48 L565.73 287.86 L566.26 286.23 L566.81 284.60 L567.39 282.97 L568.00 281.34 L568.63 279.71 L569.29 278.08 L569.97 276.45 L570.68 274.82 L571.42 273.19 L572.17 271.56 L572.96 269.93 L573.77 268.30 L574.60 266.67 L575.46 265.04 L576.34 263.41 L577.25 261.78 L578.19 260.15 L579.14 258.52 L580.13 256.89 L581.13 255.26 L582.16 253.63 L583.22 252.00 L584.30 250.37 L585.40 248.74 L586.53 247.11 L587.68 245.48 L588.86 243.85 L590.06 242.22 L591.28 240.59 L592.53 238.96 L593.80 237.33 L595.10 235.70 L596.42 234.07 L597.76 232.44 L599.12 230.81 L600.51 229.18 L601.92 227.55 L603.35 225.92 L604.81 224.29 L606.29 222.66 L607.79 221.04 L609.31 219.41 L610.86 217.78 L612.43 216.15 L614.02 214.52 L615.63 212.89 L617.26 211.26 L618.92 209.63 L620.59 208.00 L622.29 206.37 L624.01 204.74 L625.75 203.11 L627.52 201.48 L629.30 199.85 L631.10 198.22 L632.93 196.59 L634.77 194.96 L636.64 193.33 L638.52 191.70 L640.43 190.07 L642.35 188.44 L644.30 186.81 L646.26 185.18 L648.25 183.55 L650.25 181.92 L652.27 180.29 L654.31 178.66 L656.37 177.03 L658.45 175.40 L660.55 173.77 L662.67 172.14 L664.80 170.51 L666.95 168.88 L669.12 167.25 L671.31 165.62 L673.52 163.99 L675.74 162.36 L677.98 160.73 L680.24 159.10 L682.51 157.47 L684.80 155.85 L687.11 154.22 L689.44 152.59 L691.78 150.96 L694.13 149.33 L696.50 147.70 L698.89 146.07 L701.29 144.44 L703.71 142.81 L706.15 141.18 L708.59 139.55 L711.06 137.92 L713.54 136.29 L716.03 134.66 L718.53 133.03 L721.05 131.40 L723.59 129.77 L726.14 128.14 L728.70 126.51 L731.27 124.88 L733.86 123.25 L736.46 121.62 L739.07 119.99 L741.69 118.36 L744.33 116.73 L746.98 115.10 L749.64 113.47 L752.31 111.84 L755.00 110.21 L757.69 108.58 L760.40 106.95 L763.12 105.32 L765.84 103.69 L768.58 102.06 L771.33 100.43 L774.09 98.80 L776.85 97.17 L779.63 95.54 L782.42 93.91 L785.21 92.28 L788.02 90.66 L790.83 89.03 L793.65 87.40 L796.48 85.77 L799.32 84.14 L802.17 82.51 L805.02 80.88 L807.88 79.25 L810.75 77.62 L813.62 75.99 L816.51 74.36 L819.39 72.73 L822.29 71.10 L825.19 69.47 L828.09 67.84 L831.01 66.21 L833.92 64.58 L836.85 62.95 L839.77 61.32 L842.71 59.69 L845.64 58.06 L848.58 56.43 L851.53 54.80 L854.48 53.17 L857.43 51.54 L860.39 49.91 L863.35 48.28 L866.31 46.65 L869.27 45.02 L872.24 43.39 L875.21 41.76 L878.18 40.13 L881.15 38.50 L884.13 36.87 L887.11 35.24 L890.08 33.61 L893.06 31.98 L896.04 30.35 L899.02 28.72 L902.00 27.09"/>
<path d="M902.00 613.81 L898.59 612.18 L895.19 610.55 L891.78 608.92 L888.38 607.29 L884.98 605.66 L881.58 604.03 L878.18 602.40 L874.78 600.77 L871.38 599.14 L867.99 597.51 L864.60 595.88 L861.21 594.25 L857.82 592.62 L854.44 590.99 L851.06 589.36 L847.69 587.73 L844.32 586.10 L840.95 584.47 L837.59 582.84 L834.24 581.21 L830.88 579.58 L827.54 577.95 L824.20 576.32 L820.86 574.69 L817.54 573.06 L814.22 571.43 L810.90 569.80 L807.59 568.17 L804.29 566.54 L801.00 564.91 L797.71 563.28 L794.44 561.65 L791.17 560.02 L787.90 558.39 L784.65 556.76 L781.41 555.13 L778.18 553.50 L774.95 551.87 L771.74 550.24 L768.53 548.62 L765.34 546.99 L762.15 545.36 L758.98 543.73 L755.81 542.10 L752.66 540.47 L749.52 538.84 L746.39 537.21 L743.28 535.58 L740.17 533.95 L737.08 532.32 L734.00 530.69 L730.93 529.06 L727.88 527.43 L724.83 525.80 L721.81 524.17 L718.79 522.54 L715.79 520.91 L712.81 519.28 L709.84 517.65 L706.88 516.02 L703.94 514.39 L701.01 512.76 L698.10 511.13 L695.20 509.50 L692.32 507.87 L689.46 506.24 L686.61 504.61 L683.78 502.98 L680.97 501.35 L678.17 499.72 L675.39 498.09 L672.62 496.46 L669.88 494.83 L667.15 493.20 L664.44 491.57 L661.74 489.94 L659.07 488.31 L656.41 486.68 L653.78 485.05 L651.16 483.42 L648.56 481.80 L645.98 480.17 L643.42 478.54 L640.88 476.91 L638.36 475.28 L635.86 473.65 L633.38 472.02 L630.92 470.39 L628.48 468.76 L626.06 467.13 L623.66 465.50 L621.28 463.87 L618.93 462.24 L616.60 460.61 L614.28 458.98 L612.00 457.35 L609.73 455.72 L607.48 454.09 L605.26 452.46 L603.06 450.83 L600.88 449.20 L598.73 447.57 L596.59 445.94 L594.49 444.31 L592.40 442.68 L590.34 441.05 L588.30 439.42 L586.29 437.79 L584.30 436.16 L582.33 434.53 L580.39 432.90 L578.48 431.27 L576.58 429.64 L574.72 428.01 L572.87 426.38 L571.06 424.75 L569.27 423.12 L567.50 421.49 L565.76 419.86 L564.04 418.24 L562.35 416.61 L560.69 414.98 L559.05 413.35 L557.44 411.72 L555.85 410.09 L554.29 408.46 L552.76 406.83 L551.25 405.20 L549.78 403.57 L548.32 401.94 L546.90 400.31 L545.50 398.68 L544.13 397.05 L542.78 395.42 L541.47 393.79 L540.18 392.16 L538.91 390.53 L537.68 388.90 L536.47 387.27 L535.29 385.64 L534.14 384.01 L533.02 382.38 L531.93 380.75 L530.86 379.12 L529.82 377.49 L528.81 375.86 L527.83 374.23 L526.88 372.60 L525.95 370.97 L525.06 369.34 L524.19 367.71 L523.35 366.08 L522.54 364.45 L521.76 362.82 L521.01 361.19 L520.29 359.56 L519.59 357.93 L518.93 356.30 L518.29 354.67 L517.69 353.04 L517.11 351.42 L516.56 349.79 L516.05 348.16 L515.56 346.53 L515.10 344.90 L514.67 343.27 L514.27 341.64 L513.90 340.01 L513.56 338.38 L513.24 336.75 L512.96 335.12 L512.71 333.49 L512.49 331.86 L512.29 330.23 L512.13 328.60 L512.00 326.97 L511.89 325.34 L511.82 323.71 L511.77 322.08 L511.76 320.45 L511.77 318.82 L511.82 317.19 L511.89 315.56 L512.00 313.93 L512.13 312.30 L512.29 310.67 L512.49 309.04 L512.71 307.41 L512.96 305.78 L513.24 304.15 L513.56 302.52 L513.90 300.89 L514.27 299.26 L514.67 297.63 L515.10 296.00 L515.56 294.37 L516.05 292.74 L516.56 291.11 L517.11 289.48 L517.69 287.86 L518.29 286.23 L518.93 284.60 L519.59 282.97 L520.29 281.34 L521.01 279.71 L521.76 278.08 L522.54 276.45 L523.35 274.82 L524.19 273.19 L525.06 271.56 L525.95 269.93 L526.88 268.30 L527.83 266.67 L528.81 265.04 L529.82 263.41 L530.86 261.78 L531.93 260.15 L533.02 258.52 L534.14 256.89 L535.29 255.26 L536.47 253.63 L537.68 252.00 L538.91 250.37 L540.18 248.74 L541.47 247.11 L542.78 245.48 L544.13 243.85 L545.50 242.22 L546.90 240.59 L548.32 238.96 L549.78 237.33 L551.25 235.70 L552.76 234.07 L554.29 232.44 L555.85 230.81 L557.44 229.18 L559.05 227.55 L560.69 225.92 L562.35 224.29 L564.04 222.66 L565.76 221.04 L567.50 219.41 L569.27 217.78 L571.06 216.15 L572.87 214.52 L574.72 212.89 L576.58 211.26 L578.48 209.63 L580.39 208.00 L582.33 206.37 L584.30 204.74 L586.29 203.11 L588.30 201.48 L590.34 199.85 L592.40 198.22 L594.49 196.59 L596.59 194.96 L598.73 193.33 L600.88 191.70 L603.06 190.07 L605.26 188.44 L607.48 186.81 L609.73 185.18 L612.00 183.55 L614.28 181.92 L616.60 180.29 L618.93 178.66 L621.28 177.03 L623.66 175.40 L626.06 173.77 L628.48 172.14 L630.92 170.51 L633.38 168.88 L635.86 167.25 L638.36 165.62 L640.88 163.99 L643.42 162.36 L645.98 160.73 L648.56 159.10 L651.16 157.47 L653.78 155.85 L656.41 154.22 L659.07 152.59 L661.74 150.96 L664.44 149.33 L667.15 147.70 L669.88 146.07 L672.62 144.44 L675.39 142.81 L678.17 141.18 L680.97 139.55 L683.78 137.92 L686.61 136.29 L689.46 134.66 L692.32 133.03 L695.20 131.40 L698.10 129.77 L701.01 128.14 L703.94 126.51 L706.88 124.88 L709.84 123.25 L712.81 121.62 L715.79 119.99 L718.79 118.36 L721.81 116.73 L724.83 115.10 L727.88 113.47 L730.93 111.84 L734.00 110.21 L737.08 108.58 L740.17 106.95 L743.28 105.32 L746.39 103.69 L749.52 102.06 L752.66 100.43 L755.81 98.80 L758.98 97.17 L762.15 95.54 L765.34 93.91 L768.53 92.28 L771.74 90.66 L774.95 89.03 L778.18 87.40 L781.41 85.77 L784.65 84.14 L787.90 82.51 L791.17 80.88 L794.44 79.25 L797.71 77.62 L801.00 75.99 L804.29 74.36 L807.59 72.73 L810.90 71.10 L814.22 69.47 L817.54 67.84 L820.86 66.21 L824.20 64.58 L827.54 62.95 L830.88 61.32 L834.24 59.69 L837.59 58.06 L840.95 56.43 L844.32 54.80 L847.69 53.17 L851.06 51.54 L854.44 49.91 L857.82 48.28 L861.21 46.65 L864.60 45.02 L867.99 43.39 L871.38 41.76 L874.78 40.13 L878.18 38.50 L881.58 36.87 L884.98 35.24 L888.38 33.61 L891.78 31.98 L895.19 30.35 L898.59 28.72 L902.00 27.09"/>
<path d="M902.00 613.81 L898.17 612.18 L894.34 610.55 L890.51 608.92 L886.68 607.29 L882.85 605.66 L879.02 604.03 L875.20 602.40 L871.38 600.77 L867.55 599.14 L863.74 597.51 L859.92 595.88 L856.11 594.25 L852.30 592.62 L848.50 590.99 L844.70 589.36 L840.90 587.73 L837.11 586.10 L833.32 584.47 L829.54 582.84 L825.76 581.21 L821.99 579.58 L818.23 577.95 L814.47 576.32 L810.72 574.69 L806.98 573.06 L803.24 571.43 L799.51 569.80 L795.79 568.17 L792.08 566.54 L788.37 564.91 L784.68 563.28 L780.99 561.65 L777.31 560.02 L773.64 558.39 L769.98 556.76 L766.34 555.13 L762.70 553.50 L759.07 551.87 L755.45 550.24 L751.85 548.62 L748.25 546.99 L744.67 545.36 L741.10 543.73 L737.54 542.10 L733.99 540.47 L730.46 538.84 L726.94 537.21 L723.43 535.58 L719.94 533.95 L716.46 532.32 L713.00 530.69 L709.55 529.06 L706.11 527.43 L702.69 525.80 L699.28 524.17 L695.89 522.54 L692.52 520.91 L689.16 519.28 L685.82 517.65 L682.49 516.02 L679.18 514.39 L675.89 512.76 L672.61 511.13 L669.35 509.50 L666.11 507.87 L662.89 506.24 L659.69 504.61 L656.50 502.98 L653.34 501.35 L650.19 499.72 L647.06 498.09 L643.95 496.46 L640.86 494.83 L637.79 493.20 L634.74 491.57 L631.71 489.94 L628.70 488.31 L625.72 486.68 L622.75 485.05 L619.80 483.42 L616.88 481.80 L613.98 480.17 L611.10 478.54 L608.24 476.91 L605.40 475.28 L602.59 473.65 L599.80 472.02 L597.03 470.39 L594.29 468.76 L591.57 467.13 L588.87 465.50 L586.20 463.87 L583.55 462.24 L580.92 460.61 L578.32 458.98 L575.74 457.35 L573.19 455.72 L570.67 454.09 L568.17 452.46 L565.69 450.83 L563.24 449.20 L560.82 447.57 L558.42 445.94 L556.05 444.31 L553.70 442.68 L551.38 441.05 L549.09 439.42 L546.83 437.79 L544.59 436.16 L542.38 434.53 L540.19 432.90 L538.04 431.27 L535.91 429.64 L533.81 428.01 L531.73 426.38 L529.69 424.75 L527.67 423.12 L525.69 421.49 L523.73 419.86 L521.80 418.24 L519.90 416.61 L518.02 414.98 L516.18 413.35 L514.37 411.72 L512.58 410.09 L510.83 408.46 L509.11 406.83 L507.41 405.20 L505.75 403.57 L504.11 401.94 L502.51 400.31 L500.94 398.68 L499.39 397.05 L497.88 395.42 L496.40 393.79 L494.95 392.16 L493.53 390.53 L492.14 388.90 L490.78 387.27 L489.46 385.64 L488.16 384.01 L486.90 382.38 L485.67 380.75 L484.47 379.12 L483.30 377.49 L482.16 375.86 L481.06 374.23 L479.99 372.60 L478.95 370.97 L477.94 369.34 L476.96 367.71 L476.02 366.08 L475.11 364.45 L474.23 362.82 L473.39 361.19 L472.57 359.56 L471.79 357.93 L471.05 356.30 L470.33 354.67 L469.65 353.04 L469.00 351.42 L468.39 349.79 L467.80 348.16 L467.25 346.53 L466.74 344.90 L466.25 343.27 L465.80 341.64 L465.38 340.01 L465.00 338.38 L464.65 336.75 L464.33 335.12 L464.05 333.49 L463.80 331.86 L463.58 330.23 L463.40 328.60 L463.25 326.97 L463.13 325.34 L463.05 323.71 L463.00 322.08 L462.98 320.45 L463.00 318.82 L463.05 317.19 L463.13 315.56 L463.25 313.93 L463.40 312.30 L463.58 310.67 L463.80 309.04 L464.05 307.41 L464.33 305.78 L464.65 304.15 L465.00 302.52 L465.38 300.89 L465.80 299.26 L466.25 297.63 L466.74 296.00 L467.25 294.37 L467.80 292.74 L468.39 291.11 L469.00 289.48 L469.65 287.86 L470.33 286.23 L471.05 284.60 L471.79 282.97 L472.57 281.34 L473.39 279.71 L474.23 278.08 L475.11 276.45 L476.02 274.82 L476.96 273.19 L477.94 271.56 L478.95 269.93 L479.99 268.30 L481.06 266.67 L482.16 265.04 L483.30 263.41 L484.47 261.78 L485.67 260.15 L486.90 258.52 L488.16 256.89 L489.46 255.26 L490.78 253.63 L492.14 252.00 L493.53 250.37 L494.95 248.74 L496.40 247.11 L497.88 245.48 L499.39 243.85 L500.94 242.22 L502.51 240.59 L504.11 238.96 L505.75 237.33 L507.41 235.70 L509.11 234.07 L510.83 232.44 L512.58 230.81 L514.37 229.18 L516.18 227.55 L518.02 225.92 L519.90 224.29 L521.80 222.66 L523.73 221.04 L525.69 219.41 L527.67 217.78 L529.69 216.15 L531.73 214.52 L533.81 212.89 L535.91 211.26 L538.04 209.63 L540.19 208.00 L542.38 206.37 L544.59 204.74 L546.83 203.11 L549.09 201.48 L551.38 199.85 L553.70 198.22 L556.05 196.59 L558.42 194.96 L560.82 193.33 L563.24 191.70 L565.69 190.07 L568.17 188.44 L570.67 186.81 L573.19 185.18 L575.74 183.55 L578.32 181.92 L580.92 180.29 L583.55 178.66 L586.20 177.03 L588.87 175.40 L591.57 173.77 L594.29 172.14 L597.03 170.51 L599.80 168.88 L602.59 167.25 L605.40 165.62 L608.24 163.99 L611.10 162.36 L613.98 160.73 L616.88 159.10 L619.80 157.47 L622.75 155.85 L625.72 154.22 L628.70 152.59 L631.71 150.96 L634.74 149.33 L637.79 147.70 L640.86 146.07 L643.95 144.44 L647.06 142.81 L650.19 141.18 L653.34 139.55 L656.50 137.92 L659.69 136.29 L662.89 134.66 L666.11 133.03 L669.35 131.40 L672.61 129.77 L675.89 128.14 L679.18 126.51 L682.49 124.88 L685.82 123.25 L689.16 121.62 L692.52 119.99 L695.89 118.36 L699.28 116.73 L702.69 115.10 L706.11 113.47 L709.55 111.84 L713.00 110.21 L716.46 108.58 L719.94 106.95 L723.43 105.32 L726.94 103.69 L730.46 102.06 L733.99 100.43 L737.54 98.80 L741.10 97.17 L744.67 95.54 L748.25 93.91 L751.85 92.28 L755.45 90.66 L759.07 89.03 L762.70 87.40 L766.34 85.77 L769.98 84.14 L773.64 82.51 L777.31 80.88 L780.99 79.25 L784.68 77.62 L788.37 75.99 L792.08 74.36 L795.79 72.73 L799.51 71.10 L803.24 69.47 L806.98 67.84 L810.72 66.21 L814.47 64.58 L818.23 62.95 L821.99 61.32 L825.76 59.69 L829.54 58.06 L833.32 56.43 L837.11 54.80 L840.90 53.17 L844.70 51.54 L848.50 49.91 L852.30 48.28 L856.11 46.65 L859.92 45.02 L863.74 43.39 L867.55 41.76 L871.38 40.13 L875.20 38.50 L879.02 36.87 L882.85 35.24 L886.68 33.61 L890.51 31.98 L894.34 30.35 L898.17 28.72 L902.00 27.09"/>
<path d="M902.00 613.81 L897.74 612.18 L893.49 610.55 L889.23 608.92 L884.98 607.29 L880.72 605.66 L876.47 604.03 L872.22 602.40 L867.97 600.77 L863.73 599.14 L859.49 597.51 L855.25 595.88 L851.01 594.25 L846.78 592.62 L842.55 590.99 L838.33 589.36 L834.11 587.73 L829.90 586.10 L825.69 584.47 L821.49 582.84 L817.29 581.21 L813.11 579.58 L808.92 577.95 L804.75 576.32 L800.58 574.69 L796.42 573.06 L792.27 571.43 L788.13 569.80 L783.99 568.17 L779.86 566.54 L775.75 564.91 L771.64 563.28 L767.54 561.65 L763.46 560.02 L759.38 558.39 L755.32 556.76 L751.26 555.13 L747.22 553.50 L743.19 551.87 L739.17 550.24 L735.16 548.62 L731.17 546.99 L727.19 545.36 L723.22 543.73 L719.27 542.10 L715.33 540.47 L711.40 538.84 L707.49 537.21 L703.59 535.58 L699.71 533.95 L695.85 532.32 L692.00 530.69 L688.16 529.06 L684.34 527.43 L680.54 525.80 L676.76 524.17 L672.99 522.54 L669.24 520.91 L665.51 519.28 L661.80 517.65 L658.10 516.02 L654.42 514.39 L650.76 512.76 L647.13 511.13 L643.51 509.50 L639.91 507.87 L636.33 506.24 L632.77 504.61 L629.23 502.98 L625.71 501.35 L622.21 499.72 L618.73 498.09 L615.28 496.46 L611.85 494.83 L608.43 493.20 L605.05 491.57 L601.68 489.94 L598.34 488.31 L595.02 486.68 L591.72 485.05 L588.45 483.42 L585.20 481.80 L581.97 480.17 L578.77 478.54 L575.60 476.91 L572.45 475.28 L569.32 473.65 L566.22 472.02 L563.15 470.39 L560.10 468.76 L557.07 467.13 L554.08 465.50 L551.11 463.87 L548.16 462.24 L545.25 460.61 L542.36 458.98 L539.49 457.35 L536.66 455.72 L533.85 454.09 L531.07 452.46 L528.32 450.83 L525.60 449.20 L522.91 447.57 L520.24 445.94 L517.61 444.31 L515.00 442.68 L512.43 441.05 L509.88 439.42 L507.36 437.79 L504.87 436.16 L502.42 434.53 L499.99 432.90 L497.60 431.27 L495.23 429.64 L492.90 428.01 L490.59 426.38 L488.32 424.75 L486.08 423.12 L483.87 421.49 L481.70 419.86 L479.55 418.24 L477.44 416.61 L475.36 414.98 L473.31 413.35 L471.30 411.72 L469.32 410.09 L467.37 408.46 L465.45 406.83 L463.57 405.20 L461.72 403.57 L459.90 401.94 L458.12 400.31 L456.37 398.68 L454.66 397.05 L452.98 395.42 L451.33 393.79 L449.72 392.16 L448.14 390.53 L446.60 388.90 L445.09 387.27 L443.62 385.64 L442.18 384.01 L440.78 382.38 L439.41 380.75 L438.07 379.12 L436.78 377.49 L435.51 375.86 L434.29 374.23 L433.10 372.60 L431.94 370.97 L430.82 369.34 L429.74 367.71 L428.69 366.08 L427.68 364.45 L426.70 362.82 L425.76 361.19 L424.86 359.56 L423.99 357.93 L423.16 356.30 L422.37 354.67 L421.61 353.04 L420.89 351.42 L420.21 349.79 L419.56 348.16 L418.95 346.53 L418.37 344.90 L417.84 343.27 L417.34 341.64 L416.87 340.01 L416.45 338.38 L416.06 336.75 L415.70 335.12 L415.39 333.49 L415.11 331.86 L414.87 330.23 L414.66 328.60 L414.50 326.97 L414.37 325.34 L414.27 323.71 L414.22 322.08 L414.20 320.45 L414.22 318.82 L414.27 317.19 L414.37 315.56 L414.50 313.93 L414.66 312.30 L414.87 310.67 L415.11 309.04 L415.39 307.41 L415.70 305.78 L416.06 304.15 L416.45 302.52 L416.87 300.89 L417.34 299.26 L417.84 297.63 L418.37 296.00 L418.95 294.37 L419.56 292.74 L420.21 291.11 L420.89 289.48 L421.61 287.86 L422.37 286.23 L423.16 284.60 L423.99 282.97 L424.86 281.34 L425.76 279.71 L426.70 278.08 L427.68 276.45 L428.69 274.82 L429.74 273.19 L430.82 271.56 L431.94 269.93 L433.10 268.30 L434.29 266.67 L435.51 265.04 L436.78 263.41 L438.07 261.78 L439.41 260.15 L440.78 258.52 L442.18 256.89 L443.62 255.26 L445.09 253.63 L446.60 252.00 L448.14 250.37 L449.72 248.74 L451.33 247.11 L452.98 245.48 L454.66 243.85 L456.37 242.22 L458.12 240.59 L459.90 238.96 L461.72 237.33 L463.57 235.70 L465.45 234.07 L467.37 232.44 L469.32 230.81 L471.30 229.18 L473.31 227.55 L475.36 225.92 L477.44 224.29 L479.55 222.66 L481.70 221.04 L483.87 219.41 L486.08 217.78 L488.32 216.15 L490.59 214.52 L492.90 212.89 L495.23 211.26 L497.60 209.63 L499.99 208.00 L502.42 206.37 L504.87 204.74 L507.36 203.11 L509.88 201.48 L512.43 199.85 L515.00 198.22 L517.61 196.59 L520.24 194.96 L522.91 193.33 L525.60 191.70 L528.32 190.07 L531.07 188.44 L533.85 186.81 L536.66 185.18 L539.49 183.55 L542.36 181.92 L545.25 180.29 L548.16 178.66 L551.11 177.03 L554.08 175.40 L557.07 173.77 L560.10 172.14 L563.15 170.51 L566.22 168.88 L569.32 167.25 L572.45 165.62 L575.60 163.99 L578.77 162.36 L581.97 160.73 L585.20 159.10 L588.45 157.47 L591.72 155.85 L595.02 154.22 L598.34 152.59 L601.68 150.96 L605.05 149.33 L608.43 147.70 L611.85 146.07 L615.28 144.44 L618.73 142.81 L622.21 141.18 L625.71 139.55 L629.23 137.92 L632.77 136.29 L636.33 134.66 L639.91 133.03 L643.51 131.40 L647.13 129.77 L650.76 128.14 L654.42 126.51 L658.10 124.88 L661.80 123.25 L665.51 121.62 L669.24 119.99 L672.99 118.36 L676.76 116.73 L680.54 115.10 L684.34 113.47 L688.16 111.84 L692.00 110.21 L695.85 108.58 L699.71 106.95 L703.59 105.32 L707.49 103.69 L711.40 102.06 L715.33 100.43 L719.27 98.80 L723.22 97.17 L727.19 95.54 L731.17 93.91 L735.16 92.28 L739.17 90.66 L743.19 89.03 L747.22 87.40 L751.26 85.77 L755.32 84.14 L759.38 82.51 L763.46 80.88 L767.54 79.25 L771.64 77.62 L775.75 75.99 L779.86 74.36 L783.99 72.73 L788.13 71.10 L792.27 69.47 L796.42 67.84 L800.58 66.21 L804.75 64.58 L808.92 62.95 L813.11 61.32 L817.29 59.69 L821.49 58.06 L825.69 56.43 L829.90 54.80 L834.11 53.17 L838.33 51.54 L842.55 49.91 L846.78 48.28 L851.01 46.65 L855.25 45.02 L859.49 43.39 L863.73 41.76 L867.97 40.13 L872.22 38.50 L876.47 36.87 L880.72 35.24 L884.98 33.61 L889.23 31.98 L893.49 30.35 L897.74 28.72 L902.00 27.09"/>
<path d="M902.00 613.81 L897.32 612.18 L892.64 610.55 L887.95 608.92 L883.27 607.29 L878.59 605.66 L873.92 604.03 L869.24 602.40 L864.57 600.77 L859.90 599.14 L855.23 597.51 L850.57 595.88 L845.91 594.25 L841.26 592.62 L836.61 590.99 L831.96 589.36 L827.32 587.73 L822.69 586.10 L818.06 584.47 L813.44 582.84 L808.82 581.21 L804.22 579.58 L799.62 577.95 L795.02 576.32 L790.44 574.69 L785.86 573.06 L781.30 571.43 L776.74 569.80 L772.19 568.17 L767.65 566.54 L763.12 564.91 L758.61 563.28 L754.10 561.65 L749.60 560.02 L745.12 558.39 L740.65 556.76 L736.19 555.13 L731.74 553.50 L727.31 551.87 L722.89 550.24 L718.48 548.62 L714.09 546.99 L709.71 545.36 L705.34 543.73 L700.99 542.10 L696.66 540.47 L692.34 538.84 L688.04 537.21 L683.75 535.58 L679.48 533.95 L675.23 532.32 L671.00 530.69 L666.78 529.06 L662.58 527.43 L658.40 525.80 L654.23 524.17 L650.09 522.54 L645.97 520.91 L641.86 519.28 L637.78 517.65 L633.71 516.02 L629.67 514.39 L625.64 512.76 L621.64 511.13 L617.66 509.50 L613.70 507.87 L609.76 506.24 L605.84 504.61 L601.95 502.98 L598.08 501.35 L594.23 499.72 L590.41 498.09 L586.61 496.46 L582.83 494.83 L579.08 493.20 L575.35 491.57 L571.65 489.94 L567.97 488.31 L564.32 486.68 L560.69 485.05 L557.09 483.42 L553.52 481.80 L549.97 480.17 L546.45 478.54 L542.96 476.91 L539.49 475.28 L536.05 473.65 L532.64 472.02 L529.26 470.39 L525.91 468.76 L522.58 467.13 L519.28 465.50 L516.02 463.87 L512.78 462.24 L509.57 460.61 L506.39 458.98 L503.24 457.35 L500.13 455.72 L497.04 454.09 L493.98 452.46 L490.96 450.83 L487.96 449.20 L485.00 447.57 L482.07 445.94 L479.17 444.31 L476.30 442.68 L473.47 441.05 L470.67 439.42 L467.90 437.79 L465.16 436.16 L462.46 434.53 L459.79 432.90 L457.16 431.27 L454.55 429.64 L451.99 428.01 L449.45 426.38 L446.95 424.75 L444.49 423.12 L442.06 421.49 L439.67 419.86 L437.31 418.24 L434.98 416.61 L432.70 414.98 L430.44 413.35 L428.23 411.72 L426.05 410.09 L423.90 408.46 L421.80 406.83 L419.73 405.20 L417.69 403.57 L415.69 401.94 L413.73 400.31 L411.81 398.68 L409.92 397.05 L408.08 395.42 L406.26 393.79 L404.49 392.16 L402.76 390.53 L401.06 388.90 L399.40 387.27 L397.78 385.64 L396.20 384.01 L394.65 382.38 L393.15 380.75 L391.68 379.12 L390.25 377.49 L388.87 375.86 L387.52 374.23 L386.21 372.60 L384.94 370.97 L383.70 369.34 L382.51 367.71 L381.36 366.08 L380.25 364.45 L379.17 362.82 L378.14 361.19 L377.15 359.56 L376.19 357.93 L375.28 356.30 L374.41 354.67 L373.57 353.04 L372.78 351.42 L372.03 349.79 L371.31 348.16 L370.64 346.53 L370.01 344.90 L369.42 343.27 L368.87 341.64 L368.36 340.01 L367.89 338.38 L367.46 336.75 L367.07 335.12 L366.73 333.49 L366.42 331.86 L366.16 330.23 L365.93 328.60 L365.75 326.97 L365.60 325.34 L365.50 323.71 L365.44 322.08 L365.42 320.45 L365.44 318.82 L365.50 317.19 L365.60 315.56 L365.75 313.93 L365.93 312.30 L366.16 310.67 L366.42 309.04 L366.73 307.41 L367.07 305.78 L367.46 304.15 L367.89 302.52 L368.36 300.89 L368.87 299.26 L369.42 297.63 L370.01 296.00 L370.64 294.37 L371.31 292.74 L372.03 291.11 L372.78 289.48 L373.57 287.86 L374.41 286.23 L375.28 284.60 L376.19 282.97 L377.15 281.34 L378.14 279.71 L379.17 278.08 L380.25 276.45 L381.36 274.82 L382.51 273.19 L383.70 271.56 L384.94 269.93 L386.21 268.30 L387.52 266.67 L388.87 265.04 L390.25 263.41 L391.68 261.78 L393.15 260.15 L394.65 258.52 L396.20 256.89 L397.78 255.26 L399.40 253.63 L401.06 252.00 L402.76 250.37 L404.49 248.74 L406.26 247.11 L408.08 245.48 L409.92 243.85 L411.81 242.22 L413.73 240.59 L415.69 238.96 L417.69 237.33 L419.73 235.70 L421.80 234.07 L423.90 232.44 L426.05 230.81 L428.23 229.18 L430.44 227.55 L432.70 225.92 L434.98 224.29 L437.31 222.66 L439.67 221.04 L442.06 219.41 L444.49 217.78 L446.95 216.15 L449.45 214.52 L451.99 212.89 L454.55 211.26 L457.16 209.63 L459.79 208.00 L462.46 206.37 L465.16 204.74 L467.90 203.11 L470.67 201.48 L473.47 199.85 L476.30 198.22 L479.17 196.59 L482.07 194.96 L485.00 193.33 L487.96 191.70 L490.96 190.07 L493.98 188.44 L497.04 186.81 L500.13 185.18 L503.24 183.55 L506.39 181.92 L509.57 180.29 L512.78 178.66 L516.02 177.03 L519.28 175.40 L522.58 173.77 L525.91 172.14 L529.26 170.51 L532.64 168.88 L536.05 167.25 L539.49 165.62 L542.96 163.99 L546.45 162.36 L549.97 160.73 L553.52 159.10 L557.09 157.47 L560.69 155.85 L564.32 154.22 L567.97 152.59 L571.65 150.96 L575.35 149.33 L579.08 147.70 L582.83 146.07 L586.61 144.44 L590.41 142.81 L594.23 141.18 L598.08 139.55 L601.95 137.92 L605.84 136.29 L609.76 134.66 L613.70 133.03 L617.66 131.40 L621.64 129.77 L625.64 128.14 L629.67 126.51 L633.71 124.88 L637.78 123.25 L641.86 121.62 L645.97 119.99 L650.09 118.36 L654.23 116.73 L658.40 115.10 L662.58 113.47 L666.78 111.84 L671.00 110.21 L675.23 108.58 L679.48 106.95 L683.75 105.32 L688.04 103.69 L692.34 102.06 L696.66 100.43 L700.99 98.80 L705.34 97.17 L709.71 95.54 L714.09 93.91 L718.48 92.28 L722.89 90.66 L727.31 89.03 L731.74 87.40 L736.19 85.77 L740.65 84.14 L745.12 82.51 L749.60 80.88 L754.10 79.25 L758.61 77.62 L763.12 75.99 L767.65 74.36 L772.19 72.73 L776.74 71.10 L781.30 69.47 L785.86 67.84 L790.44 66.21 L795.02 64.58 L799.62 62.95 L804.22 61.32 L808.82 59.69 L813.44 58.06 L818.06 56.43 L822.69 54.80 L827.32 53.17 L831.96 51.54 L836.61 49.91 L841.26 48.28 L845.91 46.65 L850.57 45.02 L855.23 43.39 L859.90 41.76 L864.57 40.13 L869.24 38.50 L873.92 36.87 L878.59 35.24 L883.27 33.61 L887.95 31.98 L892.64 30.35 L897.32 28.72 L902.00 27.09"/>
<path d="M902.00 613.81 L896.89 612.18 L891.78 610.55 L886.68 608.92 L881.57 607.29 L876.47 605.66 L871.36 604.03 L866.26 602.40 L861.17 600.77 L856.07 599.14 L850.98 597.51 L845.90 595.88 L840.81 594.25 L835.74 592.62 L830.66 590.99 L825.60 589.36 L820.53 587.73 L815.48 586.10 L810.43 584.47 L805.39 582.84 L800.35 581.21 L795.33 579.58 L790.31 577.95 L785.30 576.32 L780.30 574.69 L775.30 573.06 L770.32 571.43 L765.35 569.80 L760.39 568.17 L755.44 566.54 L750.50 564.91 L745.57 563.28 L740.65 561.65 L735.75 560.02 L730.86 558.39 L725.98 556.76 L721.11 555.13 L716.26 553.50 L711.43 551.87 L706.60 550.24 L701.80 548.62 L697.00 546.99 L692.23 545.36 L687.46 543.73 L682.72 542.10 L677.99 540.47 L673.28 538.84 L668.59 537.21 L663.91 535.58 L659.26 533.95 L654.62 532.32 L650.00 530.69 L645.40 529.06 L640.81 527.43 L636.25 525.80 L631.71 524.17 L627.19 522.54 L622.69 520.91 L618.21 519.28 L613.75 517.65 L609.32 516.02 L604.91 514.39 L600.52 512.76 L596.15 511.13 L591.81 509.50 L587.49 507.87 L583.19 506.24 L578.92 504.61 L574.67 502.98 L570.45 501.35 L566.25 499.72 L562.08 498.09 L557.93 496.46 L553.81 494.83 L549.72 493.20 L545.66 491.57 L541.62 489.94 L537.60 488.31 L533.62 486.68 L529.67 485.05 L525.74 483.42 L521.84 481.80 L517.97 480.17 L514.13 478.54 L510.32 476.91 L506.54 475.28 L502.79 473.65 L499.06 472.02 L495.37 470.39 L491.72 468.76 L488.09 467.13 L484.49 465.50 L480.93 463.87 L477.39 462.24 L473.89 460.61 L470.43 458.98 L466.99 457.35 L463.59 455.72 L460.22 454.09 L456.89 452.46 L453.59 450.83 L450.32 449.20 L447.09 447.57 L443.89 445.94 L440.73 444.31 L437.60 442.68 L434.51 441.05 L431.45 439.42 L428.43 437.79 L425.45 436.16 L422.50 434.53 L419.59 432.90 L416.71 431.27 L413.88 429.64 L411.08 428.01 L408.31 426.38 L405.59 424.75 L402.90 423.12 L400.25 421.49 L397.64 419.86 L395.06 418.24 L392.53 416.61 L390.03 414.98 L387.58 413.35 L385.16 411.72 L382.78 410.09 L380.44 408.46 L378.14 406.83 L375.88 405.20 L373.66 403.57 L371.48 401.94 L369.35 400.31 L367.25 398.68 L365.19 397.05 L363.17 395.42 L361.20 393.79 L359.26 392.16 L357.37 390.53 L355.52 388.90 L353.71 387.27 L351.94 385.64 L350.22 384.01 L348.53 382.38 L346.89 380.75 L345.29 379.12 L343.73 377.49 L342.22 375.86 L340.75 374.23 L339.32 372.60 L337.93 370.97 L336.59 369.34 L335.29 367.71 L334.03 366.08 L332.81 364.45 L331.64 362.82 L330.52 361.19 L329.43 359.56 L328.39 357.93 L327.39 356.30 L326.44 354.67 L325.53 353.04 L324.67 351.42 L323.85 349.79 L323.07 348.16 L322.34 346.53 L321.65 344.90 L321.00 343.27 L320.40 341.64 L319.85 340.01 L319.33 338.38 L318.87 336.75 L318.44 335.12 L318.07 333.49 L317.73 331.86 L317.44 330.23 L317.20 328.60 L317.00 326.97 L316.84 325.34 L316.73 323.71 L316.66 322.08 L316.64 320.45 L316.66 318.82 L316.73 317.19 L316.84 315.56 L317.00 313.93 L317.20 312.30 L317.44 310.67 L317.73 309.04 L318.07 307.41 L318.44 305.78 L318.87 304.15 L319.33 302.52 L319.85 300.89 L320.40 299.26 L321.00 297.63 L321.65 296.00 L322.34 294.37 L323.07 292.74 L323.85 291.11 L324.67 289.48 L325.53 287.86 L326.44 286.23 L327.39 284.60 L328.39 282.97 L329.43 281.34 L330.52 279.71 L331.64 278.08 L332.81 276.45 L334.03 274.82 L335.29 273.19 L336.59 271.56 L337.93 269.93 L339.32 268.30 L340.75 266.67 L342.22 265.04 L343.73 263.41 L345.29 261.78 L346.89 260.15 L348.53 258.52 L350.22 256.89 L351.94 255.26 L353.71 253.63 L355.52 252.00 L357.37 250.37 L359.26 248.74 L361.20 247.11 L363.17 245.48 L365.19 243.85 L367.25 242.22 L369.35 240.59 L371.48 238.96 L373.66 237.33 L375.88 235.70 L378.14 234.07 L380.44 232.44 L382.78 230.81 L385.16 229.18 L387.58 227.55 L390.03 225.92 L392.53 224.29 L395.06 222.66 L397.64 221.04 L400.25 219.41 L402.90 217.78 L405.59 216.15 L408.31 214.52 L411.08 212.89 L413.88 211.26 L416.71 209.63 L419.59 208.00 L422.50 206.37 L425.45 204.74 L428.43 203.11 L431.45 201.48 L434.51 199.85 L437.60 198.22 L440.73 196.59 L443.89 194.96 L447.09 193.33 L450.32 191.70 L453.59 190.07 L456.89 188.44 L460.22 186.81 L463.59 185.18 L466.99 183.55 L470.43 181.92 L473.89 180.29 L477.39 178.66 L480.93 177.03 L484.49 175.40 L488.09 173.77 L491.72 172.14 L495.37 170.51 L499.06 168.88 L502.79 167.25 L506.54 165.62 L510.32 163.99 L514.13 162.36 L517.97 160.73 L521.84 159.10 L525.74 157.47 L529.67 155.85 L533.62 154.22 L537.60 152.59 L541.62 150.96 L545.66 149.33 L549.72 147.70 L553.81 146.07 L557.93 144.44 L562.08 142.81 L566.25 141.18 L570.45 139.55 L574.67 137.92 L578.92 136.29 L583.19 134.66 L587.49 133.03 L591.81 131.40 L596.15 129.77 L600.52 128.14 L604.91 126.51 L609.32 124.88 L613.75 123.25 L618.21 121.62 L622.69 119.99 L627.19 118.36 L631.71 116.73 L636.25 115.10 L640.81 113.47 L645.40 111.84 L650.00 110.21 L654.62 108.58 L659.26 106.95 L663.91 105.32 L668.59 103.69 L673.28 102.06 L677.99 100.43 L682.72 98.80 L687.46 97.17 L692.23 95.54 L697.00 93.91 L701.80 92.28 L706.60 90.66 L711.43 89.03 L716.26 87.40 L721.11 85.77 L725.98 84.14 L730.86 82.51 L735.75 80.88 L740.65 79.25 L745.57 77.62 L750.50 75.99 L755.44 74.36 L760.39 72.73 L765.35 71.10 L770.32 69.47 L775.30 67.84 L780.30 66.21 L785.30 64.58 L790.31 62.95 L795.33 61.32 L800.35 59.69 L805.39 58.06 L810.43 56.43 L815.48 54.80 L820.53 53.17 L825.60 51.54 L830.66 49.91 L835.74 48.28 L840.81 46.65 L845.90 45.02 L850.98 43.39 L856.07 41.76 L861.17 40.13 L866.26 38.50 L871.36 36.87 L876.47 35.24 L881.57 33.61 L886.68 31.98 L891.78 30.35 L896.89 28.72 L902.00 27.09"/>
<path d="M1053.50 564.91 L750.50 564.91"/>
<path d="M1194.68 516.02 L609.32 516.02"/>
<path d="M1315.91 467.13 L488.09 467.13"/>
<path d="M1408.94 418.24 L395.06 418.24"/>
<path d="M1467.41 369.34 L336.59 369.34"/>
<path d="M1487.36 320.45 L316.64 320.45"/>
<path d="M1467.41 271.56 L336.59 271.56"/>
<path d="M1408.94 222.66 L395.06 222.66"/>
<path d="M1315.91 173.77 L488.09 173.77"/>
<path d="M1194.68 124.88 L609.32 124.88"/>
<path d="M1053.50 75.99 L750.50 75.99"/>
</g>
<text transform="translate(301.04 329.95) scale(1.1045 1)" font-family="Liberation Sans, sans-serif" font-size="10.85" fill="#8c8c8c" xml:space="preserve">+180</text>
<rect x="330.74" y="322.25" width="1.9" height="1.9" fill="#8c8c8c"/>
<text transform="translate(398.60 329.95) scale(1.1045 1)" font-family="Liberation Sans, sans-serif" font-size="10.85" fill="#8c8c8c" xml:space="preserve">+150</text>
<rect x="428.30" y="322.25" width="1.9" height="1.9" fill="#8c8c8c"/>
<text transform="translate(496.16 329.95) scale(1.1045 1)" font-family="Liberation Sans, sans-serif" font-size="10.85" fill="#8c8c8c" xml:space="preserve">+120</text>
<rect x="525.86" y="322.25" width="1.9" height="1.9" fill="#8c8c8c"/>
<text transform="translate(597.23 329.95) scale(1.0879 1)" font-family="Liberation Sans, sans-serif" font-size="10.85" fill="#8c8c8c" xml:space="preserve">+90</text>
<rect x="619.92" y="322.25" width="1.9" height="1.9" fill="#8c8c8c"/>
<text transform="translate(694.79 329.95) scale(1.0879 1)" font-family="Liberation Sans, sans-serif" font-size="10.85" fill="#8c8c8c" xml:space="preserve">+60</text>
<rect x="717.48" y="322.25" width="1.9" height="1.9" fill="#8c8c8c"/>
<text transform="translate(792.35 329.95) scale(1.0879 1)" font-family="Liberation Sans, sans-serif" font-size="10.85" fill="#8c8c8c" xml:space="preserve">+30</text>
<rect x="815.04" y="322.25" width="1.9" height="1.9" fill="#8c8c8c"/>
<text transform="translate(892.88 329.95) scale(1.1413 1)" font-family="Liberation Sans, sans-serif" font-size="10.85" fill="#8c8c8c" xml:space="preserve">+0</text>
<rect x="909.60" y="322.25" width="1.9" height="1.9" fill="#8c8c8c"/>
<text transform="translate(983.96 329.95) scale(1.1045 1)" font-family="Liberation Sans, sans-serif" font-size="10.85" fill="#8c8c8c" xml:space="preserve">+330</text>
<rect x="1013.66" y="322.25" width="1.9" height="1.9" fill="#8c8c8c"/>
<text transform="translate(1081.52 329.95) scale(1.1045 1)" font-family="Liberation Sans, sans-serif" font-size="10.85" fill="#8c8c8c" xml:space="preserve">+300</text>
<rect x="1111.22" y="322.25" width="1.9" height="1.9" fill="#8c8c8c"/>
<text transform="translate(1179.08 329.95) scale(1.1045 1)" font-family="Liberation Sans, sans-serif" font-size="10.85" fill="#8c8c8c" xml:space="preserve">+270</text>
<rect x="1208.78" y="322.25" width="1.9" height="1.9" fill="#8c8c8c"/>
<text transform="translate(1276.64 329.95) scale(1.1045 1)" font-family="Liberation Sans, sans-serif" font-size="10.85" fill="#8c8c8c" xml:space="preserve">+240</text>
<rect x="1306.34" y="322.25" width="1.9" height="1.9" fill="#8c8c8c"/>
<text transform="translate(1374.20 329.95) scale(1.1045 1)" font-family="Liberation Sans, sans-serif" font-size="10.85" fill="#8c8c8c" xml:space="preserve">+210</text>
<rect x="1403.90" y="322.25" width="1.9" height="1.9" fill="#8c8c8c"/>
<text transform="translate(1471.76 329.95) scale(1.1045 1)" font-family="Liberation Sans, sans-serif" font-size="10.85" fill="#8c8c8c" xml:space="preserve">+180</text>
<rect x="1501.46" y="322.25" width="1.9" height="1.9" fill="#8c8c8c"/>
<text transform="translate(889.91 24.89) scale(1.0879 1)" font-family="Liberation Sans, sans-serif" font-size="10.85" fill="#8c8c8c" xml:space="preserve">+90</text>
<rect x="912.60" y="17.19" width="1.9" height="1.9" fill="#8c8c8c"/>
<text transform="translate(889.91 122.68) scale(1.0879 1)" font-family="Liberation Sans, sans-serif" font-size="10.85" fill="#8c8c8c" xml:space="preserve">+60</text>
<rect x="912.60" y="114.98" width="1.9" height="1.9" fill="#8c8c8c"/>
<text transform="translate(889.91 220.47) scale(1.0879 1)" font-family="Liberation Sans, sans-serif" font-size="10.85" fill="#8c8c8c" xml:space="preserve">+30</text>
<rect x="912.60" y="212.77" width="1.9" height="1.9" fill="#8c8c8c"/>
<text transform="translate(889.91 428.44) scale(1.0879 1)" font-family="Liberation Sans, sans-serif" font-size="10.85" fill="#8c8c8c" xml:space="preserve">−30</text>
<rect x="912.60" y="420.74" width="1.9" height="1.9" fill="#8c8c8c"/>
<text transform="translate(889.91 526.22) scale(1.0879 1)" font-family="Liberation Sans, sans-serif" font-size="10.85" fill="#8c8c8c" xml:space="preserve">−60</text>
<rect x="912.60" y="518.52" width="1.9" height="1.9" fill="#8c8c8c"/>
<text transform="translate(889.91 624.01) scale(1.0879 1)" font-family="Liberation Sans, sans-serif" font-size="10.85" fill="#8c8c8c" xml:space="preserve">−90</text>
<rect x="912.60" y="616.31" width="1.9" height="1.9" fill="#8c8c8c"/>
<path d="M362.20 343.60 L362.19 342.85 L362.18 342.11 L362.19 341.36 L362.20 340.62 L362.22 339.87 L362.25 339.12 L362.29 338.38 L362.34 337.63 L362.39 336.89 L362.46 336.14 L362.53 335.39 L362.61 334.65 L362.70 333.90 L362.80 333.15 L362.91 332.41 L363.03 331.66 L363.15 330.92 L363.29 330.17 L363.43 329.42 L363.58 328.68 L363.74 327.93 L363.91 327.18 L364.08 326.44 L364.27 325.69 L364.46 324.94 L364.66 324.20 L364.87 323.45 L365.09 322.71 L365.32 321.96 L365.56 321.21 L365.80 320.47 L366.06 319.72 L366.32 318.97 L366.59 318.23 L366.87 317.48 L367.16 316.73 L367.45 315.99 L367.76 315.24 L368.07 314.49 L368.39 313.75 L368.72 313.00 L369.06 312.26 L369.41 311.51 L369.77 310.76 L370.13 310.02 L370.51 309.27 L370.89 308.52 L371.28 307.78 L371.68 307.03 L372.08 306.28 L372.50 305.54 L372.92 304.79 L373.35 304.05 L373.80 303.30 L374.24 302.55 L374.70 301.81 L375.17 301.06 L375.64 300.32 L376.13 299.57 L376.62 298.82 L377.12 298.08 L377.62 297.33 L378.14 296.59 L378.66 295.84 L379.20 295.09 L379.74 294.35 L380.29 293.60 L380.85 292.86 L381.41 292.11 L381.99 291.37 L382.57 290.62 L383.16 289.88 L383.76 289.13 L384.37 288.39 L384.98 287.64 L385.61 286.90 L386.24 286.15 L386.88 285.41 L387.53 284.66 L388.18 283.92 L388.85 283.17 L389.52 282.43 L390.20 281.68 L390.89 280.94 L391.59 280.19 L392.29 279.45 L393.00 278.70 L393.73 277.96 L394.46 277.22 L395.19 276.47 L395.94 275.73 L396.69 274.98 L397.45 274.24 L398.22 273.50 L399.00 272.75 L399.78 272.01 L400.58 271.26 L401.38 270.52 L402.18 269.78 L403.00 269.04 L403.82 268.29 L404.66 267.55 L405.50 266.81 L406.34 266.06 L407.20 265.32 L408.06 264.58 L408.93 263.84 L409.81 263.09 L410.70 262.35 L411.59 261.61 L412.49 260.87 L413.40 260.13 L414.32 259.38 L415.24 258.64 L416.17 257.90 L417.11 257.16 L418.06 256.42 L419.01 255.68 L419.98 254.94 L420.95 254.20 L421.92 253.45 L422.91 252.71 L423.90 251.97 L424.90 251.23 L425.90 250.49 L426.92 249.75 L427.94 249.01 L428.96 248.27 L430.00 247.54 L431.04 246.80 L432.09 246.06 L433.15 245.32 L434.21 244.58 L435.28 243.84 L436.36 243.10 L437.45 242.36 L438.54 241.63 L439.64 240.89 L440.75 240.15 L441.86 239.41 L442.98 238.68 L444.11 237.94 L445.24 237.20 L446.38 236.46 L447.53 235.73 L448.69 234.99 L449.85 234.26 L451.02 233.52 L452.19 232.78 L453.37 232.05 L454.56 231.31 L455.76 230.58 L456.96 229.84 L458.17 229.11 L459.38 228.37 L460.60 227.64 L461.83 226.91 L463.07 226.17 L464.31 225.44 L465.56 224.71 L466.81 223.97 L468.07 223.24 L469.34 222.51 L470.61 221.78 L471.89 221.04 L473.17 220.31 L474.47 219.58 L475.76 218.85 L477.07 218.12 L478.38 217.39 L479.69 216.66 L481.02 215.93 L482.34 215.20 L483.68 214.47 L485.02 213.74 L486.36 213.01 L487.72 212.28 L489.07 211.55 L490.44 210.83 L491.81 210.10 L493.18 209.37 L494.56 208.65 L495.95 207.92 L497.34 207.19 L498.74 206.47 L500.14 205.74 L501.55 205.02 L502.97 204.29 L504.39 203.57 L505.81 202.84 L507.24 202.12 L508.68 201.40 L510.12 200.67 L511.57 199.95 L513.02 199.23 L514.47 198.51 L515.94 197.78 L517.40 197.06 L518.88 196.34 L520.35 195.62 L521.83 194.90 L523.32 194.18 L524.81 193.47 L526.31 192.75 L527.81 192.03 L529.32 191.31 L530.83 190.60 L532.35 189.88 L533.87 189.16 L535.39 188.45 L536.92 187.73 L538.45 187.02 L539.99 186.30 L541.54 185.59 L543.08 184.88 L544.63 184.17 L546.19 183.45 L547.75 182.74 L549.32 182.03 L550.88 181.32 L552.46 180.61 L554.03 179.90 L555.61 179.19 L557.20 178.49 L558.79 177.78 L560.38 177.07 L561.97 176.37 L563.57 175.66 L565.18 174.96 L566.78 174.25 L568.39 173.55 L570.01 172.85 L571.63 172.14 L573.25 171.44 L574.87 170.74 L576.50 170.04 L578.13 169.34 L579.76 168.64 L581.40 167.95 L583.04 167.25 L584.69 166.55 L586.33 165.86 L587.98 165.16 L589.63 164.47 L591.29 163.78 L592.95 163.08 L594.61 162.39 L596.27 161.70 L597.93 161.01 L599.60 160.32 L601.27 159.64 L602.94 158.95 L604.62 158.26 L606.30 157.58 L607.98 156.89 L609.66 156.21 L611.34 155.53 L613.03 154.85 L614.71 154.17 L616.40 153.49 L618.09 152.81 L619.79 152.13 L621.48 151.46 L623.18 150.78 L624.87 150.11 L626.57 149.44 L628.27 148.77 L629.97 148.10 L631.67 147.43 L633.38 146.76 L635.08 146.10 L636.79 145.43 L638.49 144.77 L640.20 144.10 L641.91 143.44 L643.61 142.78 L645.32 142.13 L647.03 141.47 L648.74 140.81 L650.45 140.16 L652.16 139.51 L653.87 138.86 L655.58 138.21 L657.29 137.56 L659.00 136.91 L660.71 136.27 L662.42 135.63 L664.13 134.98 L665.83 134.35 L667.54 133.71 L669.25 133.07 L670.95 132.44 L672.66 131.81 L674.36 131.18 L676.06 130.55 L677.76 129.92 L679.46 129.30 L681.16 128.67 L682.86 128.05 L684.55 127.43 L686.24 126.82 L687.94 126.20 L689.62 125.59 L691.31 124.98 L693.00 124.38 L694.68 123.77 L696.36 123.17 L698.03 122.57 L699.71 121.97 L701.38 121.38 L703.05 120.79 L704.71 120.20 L706.38 119.61 L708.03 119.02 L709.69 118.44 L711.34 117.87 L712.99 117.29 L714.63 116.72 L716.27 116.15 L717.91 115.58 L719.54 115.02 L721.16 114.46 L722.79 113.90 L724.40 113.35 L726.01 112.80 L727.62 112.25 L729.22 111.71 L730.82 111.17 L732.41 110.63 L734.00 110.10 L735.58 109.57 L737.15 109.05 L738.72 108.52 L740.28 108.01 L741.83 107.50 L743.38 106.99 L744.92 106.48 L746.45 105.98 L747.98 105.49 L749.50 105.00 L751.01 104.51 L752.52 104.03 L754.01 103.55 L755.50 103.08 L756.98 102.62 L758.46 102.15 L759.92 101.70 L761.38 101.25 L762.82 100.80 L764.26 100.36 L765.69 99.92 L767.11 99.50 L768.52 99.07 L769.92 98.65 L771.31 98.24 L772.69 97.84 L774.06 97.44 L775.42 97.04 L776.77 96.66 L778.11 96.28 L779.44 95.90 L780.76 95.53 L782.06 95.17 L783.36 94.82 L784.64 94.47 L785.91 94.13 L787.17 93.80 L788.42 93.48 L789.66 93.16 L790.89 92.85 L792.10 92.55 L793.30 92.25 L794.49 91.97 L795.66 91.69 L796.83 91.42 L797.98 91.16 L799.12 90.90 L800.24 90.66 L801.35 90.42 L802.45 90.19 L803.54 89.97 L804.61 89.76 L805.67 89.56 L806.72 89.37 L807.75 89.18 L808.78 89.01 L809.78 88.84 L810.78 88.69 L811.76 88.54 L812.72 88.40 L813.68 88.27 L814.62 88.15 L815.55 88.04 L816.46 87.94 L817.36 87.85 L818.25 87.77 L819.13 87.70 L819.99 87.64 L820.84 87.59 L821.68 87.55 L822.50 87.52 L823.32 87.50 L824.11 87.49 L824.90 87.49 L825.68 87.49 L826.44 87.51 L827.19 87.54 L827.93 87.58 L828.66 87.63 L829.37 87.69 L830.08 87.75 L830.77 87.83 L831.45 87.92 L832.13 88.01 L832.79 88.12 L833.44 88.24 L834.08 88.36 L834.71 88.50 L835.33 88.64 L835.94 88.80 L836.54 88.96 L837.13 89.13 L837.72 89.31 L838.29 89.50 L838.85 89.70 L839.41 89.91 L839.96 90.13 L840.50 90.36 L841.03 90.59 L841.55 90.83 L842.07 91.08 L842.58 91.34 L843.08 91.61 L843.58 91.89 L844.07 92.17 L844.55 92.46 L845.02 92.76 L845.49 93.07 L845.95 93.39 L846.41 93.71 L846.86 94.04 L847.31 94.38 L847.75 94.72 L848.18 95.07 L848.61 95.43 L849.04 95.80 L849.46 96.17 L849.88 96.55 L850.29 96.93 L850.69 97.32 L851.10 97.72 L851.50 98.13 L851.89 98.54 L852.28 98.95 L852.67 99.37 L853.05 99.80 L853.43 100.24 L853.81 100.67 L854.19 101.12 L854.56 101.57 L854.93 102.02 L855.29 102.48 L855.66 102.95 L856.02 103.42 L856.37 103.89 L856.73 104.37 L857.08 104.86 L857.43 105.35 L857.78 105.84 L858.13 106.34 L858.48 106.84 L858.82 107.35 L859.16 107.86 L859.50 108.38 L859.84 108.90 L860.17 109.42" fill="none" stroke="#666666" stroke-width="1.2" stroke-dasharray="1.3 2.38"/>
<path d="M860.17 109.42 L860.51 109.95 L860.84 110.48 L861.17 111.01 L861.50 111.55 L861.83 112.09 L862.16 112.64 L862.49 113.19 L862.81 113.74 L863.14 114.30 L863.46 114.86 L863.79 115.42 L864.11 115.99 L864.43 116.55 L864.75 117.13 L865.07 117.70 L865.39 118.28 L865.70 118.86 L866.02 119.44 L866.34 120.03 L866.66 120.62 L866.97 121.21 L867.29 121.80 L867.60 122.40" fill="none" stroke="#8a8a8a" stroke-width="1.1"/>
<path d="M752.40 243.30 L752.75 242.86 L753.10 242.41 L753.46 241.97 L753.81 241.53 L754.17 241.09 L754.52 240.65 L754.88 240.20 L755.24 239.76 L755.59 239.32 L755.95 238.88 L756.31 238.44 L756.67 237.99 L757.04 237.55 L757.40 237.11 L757.76 236.67 L758.12 236.23 L758.49 235.79 L758.85 235.35 L759.22 234.91 L759.59 234.47 L759.95 234.03 L760.32 233.59 L760.69 233.14 L761.06 232.70 L761.43 232.26 L761.80 231.82 L762.17 231.38 L762.55 230.94 L762.92 230.50 L763.29 230.07 L763.67 229.63 L764.04 229.19 L764.42 228.75 L764.80 228.31 L765.17 227.87 L765.55 227.43 L765.93 226.99 L766.31 226.55 L766.69 226.11 L767.07 225.68 L767.45 225.24 L767.84 224.80 L768.22 224.36 L768.60 223.92 L768.99 223.49 L769.37 223.05 L769.76 222.61 L770.15 222.17 L770.53 221.74 L770.92 221.30 L771.31 220.86 L771.70 220.42 L772.09 219.99 L772.48 219.55 L772.87 219.12 L773.26 218.68 L773.65 218.24 L774.05 217.81 L774.44 217.37 L774.84 216.94 L775.23 216.50 L775.63 216.06 L776.02 215.63 L776.42 215.19 L776.82 214.76 L777.22 214.32 L777.61 213.89 L778.01 213.46 L778.41 213.02 L778.81 212.59 L779.22 212.15 L779.62 211.72 L780.02 211.29 L780.42 210.85 L780.83 210.42 L781.23 209.99 L781.63 209.55 L782.04 209.12 L782.44 208.69 L782.85 208.25 L783.26 207.82 L783.67 207.39 L784.07 206.96 L784.48 206.53 L784.89 206.09 L785.30 205.66 L785.71 205.23 L786.12 204.80 L786.53 204.37 L786.94 203.94 L787.36 203.51 L787.77 203.08 L788.18 202.65 L788.60 202.22 L789.01 201.79 L789.43 201.36 L789.84 200.93 L790.26 200.50 L790.67 200.07 L791.09 199.64 L791.51 199.22 L791.93 198.79 L792.35 198.36 L792.76 197.93 L793.18 197.50 L793.60 197.08 L794.02 196.65 L794.44 196.22 L794.87 195.79 L795.29 195.37 L795.71 194.94 L796.13 194.52 L796.55 194.09 L796.98 193.66 L797.40 193.24 L797.83 192.81 L798.25 192.39 L798.68 191.96 L799.10 191.54 L799.53 191.12 L799.95 190.69 L800.38 190.27 L800.81 189.84 L801.24 189.42 L801.66 189.00 L802.09 188.57 L802.52 188.15 L802.95 187.73 L803.38 187.31 L803.81 186.89 L804.24 186.46 L804.67 186.04 L805.10 185.62 L805.54 185.20 L805.97 184.78 L806.40 184.36 L806.83 183.94 L807.26 183.52 L807.70 183.10 L808.13 182.68 L808.57 182.27 L809.00 181.85 L809.43 181.43 L809.87 181.01 L810.31 180.59 L810.74 180.18 L811.18 179.76 L811.61 179.34 L812.05 178.93 L812.49 178.51 L812.92 178.09 L813.36 177.68 L813.80 177.26 L814.24 176.85 L814.68 176.44 L815.11 176.02 L815.55 175.61 L815.99 175.19 L816.43 174.78 L816.87 174.37 L817.31 173.96 L817.75 173.54 L818.19 173.13 L818.63 172.72 L819.07 172.31 L819.52 171.90 L819.96 171.49 L820.40 171.08 L820.84 170.67 L821.28 170.26 L821.73 169.85 L822.17 169.44 L822.61 169.04 L823.05 168.63 L823.50 168.22 L823.94 167.81 L824.38 167.41 L824.83 167.00 L825.27 166.60 L825.72 166.19 L826.16 165.79 L826.60 165.38 L827.05 164.98 L827.49 164.57 L827.94 164.17 L828.38 163.77 L828.83 163.36 L829.28 162.96 L829.72 162.56 L830.17 162.16 L830.61 161.76 L831.06 161.36 L831.50 160.96 L831.95 160.56 L832.40 160.16 L832.84 159.76 L833.29 159.37 L833.74 158.97 L834.18 158.57 L834.63 158.18 L835.08 157.78 L835.53 157.38 L835.97 156.99 L836.42 156.60 L836.87 156.20 L837.31 155.81 L837.76 155.42 L838.21 155.02 L838.66 154.63 L839.10 154.24 L839.55 153.85 L840.00 153.46 L840.45 153.07 L840.90 152.68 L841.34 152.29 L841.79 151.90 L842.24 151.52 L842.69 151.13 L843.14 150.74 L843.58 150.36 L844.03 149.97 L844.48 149.59 L844.93 149.21 L845.38 148.82 L845.82 148.44 L846.27 148.06 L846.72 147.68 L847.17 147.30 L847.62 146.92 L848.06 146.54 L848.51 146.16 L848.96 145.78 L849.41 145.40 L849.85 145.03 L850.30 144.65 L850.75 144.27 L851.20 143.90 L851.64 143.53 L852.09 143.15 L852.54 142.78 L852.99 142.41 L853.43 142.04 L853.88 141.67 L854.33 141.30 L854.78 140.93 L855.22 140.56 L855.67 140.19 L856.12 139.83 L856.56 139.46 L857.01 139.10 L857.46 138.73 L857.90 138.37 L858.35 138.01 L858.79 137.64 L859.24 137.28 L859.69 136.92 L860.13 136.56 L860.58 136.21 L861.02 135.85 L861.47 135.49 L861.91 135.14 L862.36 134.78 L862.80 134.43 L863.25 134.07 L863.69 133.72 L864.14 133.37 L864.58 133.02 L865.02 132.67 L865.47 132.32 L865.91 131.97 L866.36 131.63 L866.80 131.28 L867.24 130.94 L867.68 130.59 L868.13 130.25 L868.57 129.91 L869.01 129.57 L869.46 129.23 L869.90 128.89 L870.34 128.55 L870.78 128.22 L871.22 127.88 L871.66 127.55 L872.10 127.22 L872.55 126.88 L872.99 126.55 L873.43 126.22 L873.87 125.90 L874.31 125.57 L874.75 125.24 L875.19 124.92 L875.62 124.59 L876.06 124.27 L876.50 123.95 L876.94 123.63 L877.38 123.31 L877.82 122.99 L878.26 122.68 L878.69 122.36 L879.13 122.05 L879.57 121.74 L880.01 121.43 L880.44 121.12 L880.88 120.81 L881.32 120.50 L881.75 120.20 L882.19 119.89 L882.62 119.59 L883.06 119.29 L883.49 118.99 L883.93 118.69 L884.36 118.39 L884.80 118.10 L885.23 117.80 L885.67 117.51 L886.10 117.22 L886.54 116.93 L886.97 116.64 L887.40 116.35 L887.84 116.07 L888.27 115.79 L888.70 115.51 L889.13 115.23 L889.57 114.95 L890.00 114.67 L890.43 114.40 L890.86 114.12 L891.29 113.85 L891.73 113.58 L892.16 113.31 L892.59 113.05 L893.02 112.78 L893.45 112.52 L893.88 112.26 L894.31 112.00 L894.74 111.74 L895.17 111.49" fill="none" stroke="#84d952" stroke-width="1.39" stroke-dasharray="1.39 2.29"/>
<path d="M895.17 111.49 L895.60 111.23 L896.03 110.98 L896.46 110.73 L896.89 110.48 L897.32 110.24 L897.75 109.99 L898.18 109.75 L898.61 109.51 L899.04 109.27 L899.47 109.04 L899.90 108.80 L900.33 108.57 L900.76 108.34 L901.19 108.11 L901.62 107.89 L902.04 107.66 L902.47 107.44 L902.90 107.22 L903.33 107.01 L903.76 106.79 L904.19 106.58 L904.62 106.37 L905.05 106.16 L905.48 105.96 L905.91 105.75 L906.34 105.55 L906.77 105.35 L907.20 105.16 L907.63 104.96 L908.06 104.77 L908.49 104.58 L908.92 104.40 L909.35 104.21 L909.78 104.03 L910.21 103.85 L910.64 103.67 L911.07 103.50 L911.51 103.33 L911.94 103.16 L912.37 102.99 L912.80 102.83 L913.24 102.66 L913.67 102.50 L914.10 102.35 L914.54 102.19 L914.97 102.04 L915.41 101.90 L915.84 101.75 L916.28 101.61 L916.72 101.47 L917.15 101.33 L917.59 101.19 L918.03 101.06 L918.47 100.93 L918.91 100.81 L919.35 100.68 L919.79 100.56 L920.23 100.44 L920.67 100.33 L921.11 100.22 L921.56 100.11 L922.00 100.00" fill="none" stroke="#84d952" stroke-width="1.6"/>
<rect x="920.80" y="98.80" width="2.4" height="2.4" fill="#ff6a40"/>
<path d="M588.40 278.40 L589.09 277.85 L589.79 277.29 L590.48 276.74 L591.18 276.19 L591.88 275.63 L592.59 275.08 L593.30 274.53 L594.01 273.98 L594.72 273.42 L595.43 272.87 L596.15 272.32 L596.87 271.77 L597.59 271.22 L598.32 270.67 L599.05 270.12 L599.78 269.57 L600.51 269.02 L601.24 268.47 L601.98 267.93 L602.72 267.38 L603.46 266.83 L604.21 266.28 L604.95 265.74 L605.70 265.19 L606.45 264.64 L607.21 264.10 L607.96 263.55 L608.72 263.01 L609.48 262.46 L610.25 261.92 L611.01 261.38 L611.78 260.83 L612.55 260.29 L613.32 259.75 L614.10 259.21 L614.87 258.66 L615.65 258.12 L616.43 257.58 L617.21 257.04 L618.00 256.50 L618.79 255.96 L619.58 255.42 L620.37 254.89 L621.16 254.35 L621.96 253.81 L622.75 253.27 L623.55 252.74 L624.35 252.20 L625.16 251.67 L625.96 251.13 L626.77 250.60 L627.58 250.07 L628.39 249.53 L629.20 249.00 L630.02 248.47 L630.84 247.94 L631.66 247.40 L632.48 246.87 L633.30 246.34 L634.12 245.82 L634.95 245.29 L635.78 244.76 L636.61 244.23 L637.44 243.70 L638.27 243.18 L639.11 242.65 L639.94 242.13 L640.78 241.60 L641.62 241.08 L642.46 240.56 L643.31 240.03 L644.15 239.51 L645.00 238.99 L645.85 238.47 L646.70 237.95 L647.55 237.43 L648.40 236.91 L649.25 236.39 L650.11 235.88 L650.97 235.36 L651.83 234.84 L652.69 234.33 L653.55 233.82 L654.41 233.30 L655.27 232.79 L656.14 232.28 L657.01 231.77 L657.87 231.25 L658.74 230.74 L659.61 230.24 L660.49 229.73 L661.36 229.22 L662.23 228.71 L663.11 228.21 L663.99 227.70 L664.87 227.20 L665.74 226.69 L666.63 226.19 L667.51 225.69 L668.39 225.19 L669.27 224.69 L670.16 224.19 L671.04 223.69 L671.93 223.19 L672.82 222.70 L673.71 222.20 L674.60 221.71 L675.49 221.21 L676.38 220.72 L677.27 220.23 L678.17 219.74 L679.06 219.25 L679.96 218.76 L680.85 218.27 L681.75 217.78 L682.65 217.29 L683.54 216.81 L684.44 216.33 L685.34 215.84 L686.24 215.36 L687.14 214.88 L688.05 214.40 L688.95 213.92 L689.85 213.44 L690.76 212.96 L691.66 212.49 L692.57 212.01 L693.47 211.54 L694.38 211.07 L695.28 210.59 L696.19 210.12 L697.10 209.65 L698.01 209.19 L698.91 208.72 L699.82 208.25 L700.73 207.79 L701.64 207.33 L702.55 206.86 L703.46 206.40 L704.37 205.94 L705.28 205.48 L706.19 205.03 L707.11 204.57 L708.02 204.11 L708.93 203.66 L709.84 203.21 L710.75 202.76 L711.67 202.31 L712.58 201.86 L713.49 201.41 L714.40 200.97 L715.31 200.52 L716.23 200.08 L717.14 199.64 L718.05 199.20 L718.97 198.76 L719.88 198.32 L720.79 197.88 L721.70 197.45 L722.62 197.01 L723.53 196.58 L724.44 196.15 L725.35 195.72 L726.26 195.30 L727.17 194.87 L728.09 194.45 L729.00 194.02 L729.91 193.60 L730.82 193.18 L731.73 192.76 L732.64 192.35 L733.55 191.93 L734.46 191.52 L735.37 191.11 L736.27 190.70 L737.18 190.29 L738.09 189.88 L739.00 189.47 L739.90 189.07 L740.81 188.67 L741.72 188.27 L742.62 187.87 L743.52 187.47 L744.43 187.08 L745.33 186.69 L746.24 186.29 L747.14 185.90 L748.04 185.52 L748.94 185.13 L749.84 184.75 L750.74 184.36 L751.64 183.98 L752.54 183.60 L753.43 183.23 L754.33 182.85 L755.23 182.48 L756.12 182.11 L757.01 181.74 L757.91 181.37 L758.80 181.01 L759.69 180.65 L760.58 180.28 L761.47 179.93 L762.36 179.57 L763.25 179.21 L764.13 178.86 L765.02 178.51 L765.91 178.16 L766.79 177.82 L767.67 177.47 L768.55 177.13 L769.43 176.79 L770.31 176.45 L771.19 176.12 L772.07 175.78 L772.95 175.45 L773.82 175.12 L774.70 174.79 L775.57 174.47 L776.44 174.15 L777.31 173.83 L778.18 173.51 L779.05 173.20 L779.92 172.88 L780.78 172.57 L781.65 172.26 L782.51 171.96 L783.37 171.66 L784.23 171.35 L785.09 171.06 L785.95 170.76 L786.81 170.47 L787.66 170.18 L788.52 169.89 L789.37 169.60 L790.22 169.32 L791.07 169.04 L791.92 168.76 L792.77 168.48 L793.62 168.21 L794.46 167.94 L795.30 167.67 L796.15 167.41 L796.99 167.15 L797.83 166.89 L798.66 166.63 L799.50 166.38 L800.34 166.12 L801.17 165.88 L802.00 165.63 L802.83 165.39 L803.66 165.15 L804.49 164.91 L805.31 164.67 L806.14 164.44 L806.96 164.21 L807.78 163.99 L808.60 163.76 L809.42 163.54 L810.24 163.32 L811.06 163.11 L811.87 162.90 L812.68 162.69 L813.49 162.48 L814.30 162.28 L815.11 162.08 L815.92 161.89 L816.72 161.69 L817.53 161.50 L818.33 161.31 L819.13 161.13 L819.93 160.95 L820.73 160.77 L821.53 160.59 L822.32 160.42 L823.11 160.25 L823.91 160.09 L824.70 159.92 L825.49 159.77 L826.27 159.61 L827.06 159.46 L827.84 159.31 L828.63 159.16 L829.41 159.02 L830.19 158.88 L830.97 158.74 L831.75 158.60 L832.52 158.47 L833.30 158.35 L834.07 158.22 L834.84 158.10 L835.61 157.99 L836.38 157.87 L837.15 157.76 L837.92 157.65 L838.68 157.55 L839.45 157.45 L840.21 157.35 L840.97 157.26 L841.73 157.17 L842.49 157.08 L843.24 157.00 L844.00 156.92 L844.76 156.84 L845.51 156.77 L846.26 156.70 L847.01 156.63 L847.76 156.57 L848.51 156.51 L849.26 156.45 L850.00 156.40 L850.75 156.35 L851.49 156.30 L852.24 156.26 L852.98 156.22 L853.72 156.18 L854.46 156.15 L855.20 156.12 L855.93 156.10 L856.67 156.07 L857.41 156.06 L858.14 156.04 L858.87 156.03 L859.61 156.02 L860.34 156.02 L861.07 156.02 L861.80 156.02 L862.53 156.02 L863.26 156.03 L863.98 156.05 L864.71 156.06 L865.43 156.08 L866.16 156.11 L866.88 156.13 L867.61 156.16 L868.33 156.20 L869.05 156.23 L869.77 156.27 L870.49 156.32 L871.21 156.37 L871.93 156.42 L872.65 156.47 L873.36 156.53 L874.08 156.59 L874.80 156.65 L875.51 156.72 L876.23 156.79 L876.94 156.87 L877.65 156.95 L878.37 157.03 L879.08 157.11 L879.79 157.20 L880.50 157.29 L881.21 157.39 L881.93 157.49 L882.64 157.59 L883.35 157.69 L884.06 157.80 L884.76 157.92 L885.47 158.03 L886.18 158.15 L886.89 158.27 L887.60 158.40 L888.31 158.52 L889.01 158.66 L889.72 158.79 L890.43 158.93 L891.13 159.07 L891.84 159.22 L892.55 159.36 L893.25 159.51 L893.96 159.67 L894.66 159.83" fill="none" stroke="#2aae80" stroke-width="1.39" stroke-dasharray="1.39 2.29"/>
<path d="M894.66 159.83 L895.37 159.99 L896.07 160.15 L896.78 160.32 L897.48 160.49 L898.19 160.66 L898.89 160.84 L899.60 161.02 L900.30 161.20 L901.01 161.39 L901.71 161.57 L902.42 161.77 L903.12 161.96 L903.83 162.16 L904.53 162.36 L905.24 162.56 L905.94 162.77 L906.65 162.98 L907.35 163.19 L908.06 163.41 L908.77 163.63 L909.47 163.85 L910.18 164.07 L910.88 164.30 L911.59 164.53 L912.29 164.76 L913.00 165.00" fill="none" stroke="#2aae80" stroke-width="1.6"/>
<rect x="911.80" y="163.80" width="2.4" height="2.4" fill="#ff6a40"/>
<path d="M761.90 239.50 L762.43 239.27 L762.96 239.03 L763.49 238.80 L764.02 238.57 L764.55 238.34 L765.08 238.11 L765.61 237.88 L766.14 237.65 L766.67 237.42 L767.20 237.19 L767.73 236.96 L768.26 236.73 L768.79 236.51 L769.32 236.28 L769.85 236.05 L770.38 235.83 L770.91 235.60 L771.44 235.38 L771.97 235.15 L772.50 234.93 L773.03 234.71 L773.56 234.49 L774.09 234.26 L774.63 234.04 L775.16 233.82 L775.69 233.60 L776.22 233.38 L776.75 233.16 L777.28 232.94 L777.81 232.73 L778.34 232.51 L778.87 232.29 L779.40 232.08 L779.93 231.86 L780.46 231.65 L780.99 231.43 L781.52 231.22 L782.05 231.00 L782.58 230.79 L783.11 230.58 L783.64 230.37 L784.17 230.16 L784.70 229.95 L785.23 229.74 L785.76 229.53 L786.29 229.32 L786.82 229.11 L787.34 228.90 L787.87 228.70 L788.40 228.49 L788.93 228.29 L789.46 228.08 L789.99 227.88 L790.52 227.67 L791.05 227.47 L791.58 227.27 L792.11 227.07 L792.64 226.87 L793.16 226.67 L793.69 226.47 L794.22 226.27 L794.75 226.07 L795.28 225.87 L795.81 225.67 L796.34 225.48 L796.86 225.28 L797.39 225.09 L797.92 224.89 L798.45 224.70 L798.97 224.50 L799.50 224.31 L800.03 224.12 L800.56 223.93 L801.08 223.74 L801.61 223.55 L802.14 223.36 L802.67 223.17 L803.19 222.98 L803.72 222.79 L804.25 222.61 L804.77 222.42 L805.30 222.24 L805.83 222.05 L806.35 221.87 L806.88 221.69 L807.40 221.50 L807.93 221.32 L808.46 221.14 L808.98 220.96 L809.51 220.78 L810.03 220.60 L810.56 220.42 L811.08 220.25 L811.61 220.07 L812.13 219.89 L812.66 219.72 L813.18 219.54 L813.71 219.37 L814.23 219.20 L814.76 219.02 L815.28 218.85 L815.80 218.68 L816.33 218.51 L816.85 218.34 L817.38 218.17 L817.90 218.01 L818.42 217.84 L818.95 217.67 L819.47 217.51 L819.99 217.34 L820.51 217.18 L821.04 217.02 L821.56 216.85 L822.08 216.69 L822.60 216.53 L823.13 216.37 L823.65 216.21 L824.17 216.05 L824.69 215.89 L825.21 215.74 L825.73 215.58 L826.26 215.42 L826.78 215.27 L827.30 215.12 L827.82 214.96 L828.34 214.81 L828.86 214.66 L829.38 214.51 L829.90 214.36 L830.42 214.21 L830.94 214.06 L831.46 213.91 L831.98 213.76 L832.50 213.62 L833.02 213.47 L833.54 213.33 L834.06 213.19 L834.57 213.04 L835.09 212.90 L835.61 212.76 L836.13 212.62 L836.65 212.48 L837.17 212.34 L837.68 212.20 L838.20 212.07 L838.72 211.93 L839.24 211.80 L839.75 211.66 L840.27 211.53 L840.79 211.39 L841.30 211.26 L841.82 211.13 L842.34 211.00 L842.85 210.87 L843.37 210.74 L843.89 210.62 L844.40 210.49 L844.92 210.36 L845.43 210.24 L845.95 210.11 L846.46 209.99 L846.98 209.87 L847.49 209.75 L848.01 209.63 L848.52 209.51 L849.04 209.39 L849.55 209.27 L850.07 209.15 L850.58 209.04 L851.09 208.92 L851.61 208.81 L852.12 208.69 L852.63 208.58 L853.15 208.47 L853.66 208.36 L854.17 208.25 L854.69 208.14 L855.20 208.03 L855.71 207.92 L856.23 207.81 L856.74 207.71 L857.25 207.60 L857.76 207.50 L858.27 207.40 L858.79 207.30 L859.30 207.19 L859.81 207.09 L860.32 207.00 L860.83 206.90 L861.34 206.80 L861.85 206.70 L862.36 206.61 L862.88 206.51 L863.39 206.42 L863.90 206.33 L864.41 206.24 L864.92 206.14 L865.43 206.05 L865.94 205.97 L866.45 205.88 L866.96 205.79 L867.47 205.70 L867.98 205.62 L868.49 205.54 L869.00 205.45 L869.50 205.37 L870.01 205.29 L870.52 205.21 L871.03 205.13 L871.54 205.05 L872.05 204.97 L872.56 204.90 L873.07 204.82 L873.57 204.74 L874.08 204.67 L874.59 204.60 L875.10 204.53 L875.61 204.46 L876.11 204.39 L876.62 204.32 L877.13 204.25 L877.64 204.18 L878.15 204.12 L878.65 204.05 L879.16 203.99 L879.67 203.92 L880.17 203.86 L880.68 203.80 L881.19 203.74 L881.70 203.68 L882.20 203.62 L882.71 203.57 L883.22 203.51 L883.72 203.45 L884.23 203.40 L884.74 203.35 L885.24 203.29 L885.75 203.24 L886.25 203.19 L886.76 203.14 L887.27 203.09 L887.77 203.05 L888.28 203.00 L888.79 202.95 L889.29 202.91 L889.80 202.87 L890.30 202.82 L890.81 202.78 L891.32 202.74 L891.82 202.70 L892.33 202.66 L892.83 202.63 L893.34 202.59 L893.84 202.56 L894.35 202.52 L894.86 202.49 L895.36 202.46 L895.87 202.42 L896.37 202.39 L896.88 202.36 L897.38 202.34 L897.89 202.31 L898.39 202.28 L898.90 202.26 L899.40 202.23 L899.91 202.21 L900.42 202.19 L900.92 202.16 L901.43 202.14 L901.93 202.13 L902.44 202.11 L902.94 202.09 L903.45 202.07 L903.95 202.06 L904.46 202.04 L904.96 202.03 L905.47 202.02 L905.97 202.01 L906.48 202.00 L906.99 201.99 L907.49 201.98 L908.00 201.97 L908.50 201.97 L909.01 201.96 L909.51 201.96 L910.02 201.95 L910.52 201.95 L911.03 201.95 L911.54 201.95 L912.04 201.95 L912.55 201.95 L913.05 201.96 L913.56 201.96 L914.06 201.96 L914.57 201.97 L915.08 201.98 L915.58 201.98 L916.09 201.99 L916.60 202.00 L917.10 202.01 L917.61 202.03 L918.11 202.04 L918.62 202.05 L919.13 202.07 L919.63 202.09 L920.14 202.10 L920.65 202.12 L921.15 202.14 L921.66 202.16 L922.17 202.18 L922.67 202.20 L923.18 202.23 L923.69 202.25 L924.20 202.27 L924.70 202.30 L925.21 202.33 L925.72 202.36 L926.23 202.39 L926.73 202.42 L927.24 202.45 L927.75 202.48 L928.26 202.51 L928.77 202.55 L929.27 202.58 L929.78 202.62 L930.29 202.65 L930.80 202.69 L931.31 202.73 L931.82 202.77 L932.33 202.81 L932.83 202.86 L933.34 202.90 L933.85 202.94 L934.36 202.99 L934.87 203.03 L935.38 203.08 L935.89 203.13 L936.40 203.18 L936.91 203.23 L937.42 203.28 L937.93 203.33 L938.44 203.39 L938.95 203.44 L939.46 203.49 L939.97 203.55 L940.48 203.61 L941.00 203.67 L941.51 203.72 L942.02 203.78 L942.53 203.84 L943.04 203.91 L943.55 203.97 L944.07 204.03 L944.58 204.10 L945.09 204.16 L945.60 204.23 L946.11 204.30 L946.63 204.37 L947.14 204.44 L947.65 204.51 L948.17 204.58 L948.68 204.65 L949.19 204.73 L949.71 204.80 L950.22 204.88 L950.74 204.95 L951.25 205.03 L951.76 205.11 L952.28 205.19 L952.79 205.27 L953.31 205.35 L953.82 205.43 L954.34 205.51 L954.85 205.60" fill="none" stroke="#84d952" stroke-width="1.39" stroke-dasharray="1.39 2.29"/>
<path d="M954.85 205.60 L955.37 205.68 L955.89 205.77 L956.40 205.85 L956.92 205.94 L957.43 206.03 L957.95 206.12 L958.47 206.21 L958.98 206.30 L959.50 206.40 L960.02 206.49 L960.54 206.58 L961.05 206.68 L961.57 206.77 L962.09 206.87 L962.61 206.97 L963.13 207.07 L963.64 207.17 L964.16 207.27 L964.68 207.37 L965.20 207.47 L965.72 207.58 L966.24 207.68 L966.76 207.79 L967.28 207.89 L967.80 208.00" fill="none" stroke="#84d952" stroke-width="1.6"/>
<rect x="966.60" y="206.80" width="2.4" height="2.4" fill="#ff6a40"/>
<path d="M761.90 239.50 L762.68 239.11 L763.46 238.72 L764.23 238.33 L765.01 237.94 L765.79 237.55 L766.57 237.16 L767.35 236.78 L768.13 236.39 L768.91 236.01 L769.69 235.63 L770.47 235.25 L771.25 234.87 L772.03 234.49 L772.81 234.11 L773.59 233.73 L774.37 233.36 L775.15 232.98 L775.93 232.61 L776.72 232.24 L777.50 231.87 L778.28 231.50 L779.06 231.13 L779.84 230.76 L780.62 230.40 L781.40 230.03 L782.18 229.67 L782.97 229.31 L783.75 228.94 L784.53 228.58 L785.31 228.23 L786.09 227.87 L786.87 227.51 L787.66 227.16 L788.44 226.80 L789.22 226.45 L790.00 226.10 L790.78 225.75 L791.56 225.40 L792.35 225.06 L793.13 224.71 L793.91 224.37 L794.69 224.02 L795.47 223.68 L796.25 223.34 L797.03 223.00 L797.81 222.67 L798.59 222.33 L799.37 221.99 L800.16 221.66 L800.94 221.33 L801.72 221.00 L802.50 220.67 L803.28 220.34 L804.06 220.02 L804.83 219.69 L805.61 219.37 L806.39 219.05 L807.17 218.73 L807.95 218.41 L808.73 218.09 L809.51 217.78 L810.29 217.46 L811.06 217.15 L811.84 216.84 L812.62 216.53 L813.40 216.22 L814.17 215.92 L814.95 215.61 L815.73 215.31 L816.50 215.01 L817.28 214.71 L818.06 214.41 L818.83 214.12 L819.61 213.82 L820.38 213.53 L821.16 213.24 L821.93 212.95 L822.71 212.66 L823.48 212.37 L824.25 212.09 L825.03 211.80 L825.80 211.52 L826.57 211.24 L827.35 210.97 L828.12 210.69 L828.89 210.42 L829.66 210.14 L830.43 209.87 L831.21 209.60 L831.98 209.34 L832.75 209.07 L833.52 208.81 L834.29 208.55 L835.06 208.29 L835.83 208.03 L836.59 207.77 L837.36 207.52 L838.13 207.27 L838.90 207.01 L839.67 206.77 L840.43 206.52 L841.20 206.27 L841.97 206.03 L842.73 205.79 L843.50 205.55 L844.26 205.31 L845.03 205.08 L845.79 204.84 L846.56 204.61 L847.32 204.38 L848.09 204.16 L848.85 203.93 L849.61 203.71 L850.38 203.49 L851.14 203.27 L851.90 203.05 L852.66 202.83 L853.43 202.62 L854.19 202.41 L854.95 202.20 L855.71 201.99 L856.47 201.79 L857.23 201.58 L857.99 201.38 L858.75 201.18 L859.51 200.99 L860.27 200.79 L861.02 200.60 L861.78 200.41 L862.54 200.22 L863.30 200.03 L864.05 199.85 L864.81 199.67 L865.57 199.49 L866.32 199.31 L867.08 199.13 L867.84 198.96 L868.59 198.79 L869.35 198.62 L870.10 198.46 L870.86 198.29 L871.61 198.13 L872.37 197.97 L873.12 197.81 L873.87 197.66 L874.63 197.50 L875.38 197.35 L876.13 197.20 L876.89 197.06 L877.64 196.91 L878.39 196.77 L879.14 196.63 L879.89 196.49 L880.65 196.36 L881.40 196.22 L882.15 196.09 L882.90 195.97 L883.65 195.84 L884.40 195.72 L885.15 195.60 L885.90 195.48 L886.65 195.36 L887.40 195.25 L888.15 195.13 L888.90 195.03 L889.65 194.92 L890.40 194.81 L891.15 194.71 L891.90 194.61 L892.65 194.51 L893.40 194.42 L894.15 194.33 L894.90 194.24 L895.65 194.15 L896.40 194.06 L897.14 193.98 L897.89 193.90 L898.64 193.82 L899.39 193.74 L900.14 193.67 L900.89 193.60 L901.64 193.53 L902.39 193.47 L903.13 193.40 L903.88 193.34 L904.63 193.28 L905.38 193.23 L906.13 193.17 L906.88 193.12 L907.63 193.07 L908.38 193.02 L909.12 192.98 L909.87 192.94 L910.62 192.90 L911.37 192.86 L912.12 192.83 L912.87 192.80 L913.62 192.77 L914.37 192.74 L915.12 192.72 L915.87 192.69 L916.62 192.68 L917.37 192.66 L918.12 192.64 L918.87 192.63 L919.62 192.62 L920.37 192.62 L921.12 192.61 L921.88 192.61 L922.63 192.61 L923.38 192.61 L924.13 192.62 L924.88 192.63 L925.64 192.64 L926.39 192.65 L927.14 192.66 L927.89 192.68 L928.65 192.70 L929.40 192.72 L930.16 192.75 L930.91 192.78 L931.67 192.81 L932.42 192.84 L933.18 192.88 L933.93 192.91 L934.69 192.95 L935.44 193.00 L936.20 193.04 L936.96 193.09 L937.72 193.14 L938.47 193.19 L939.23 193.25 L939.99 193.30 L940.75 193.36 L941.51 193.42 L942.27 193.49 L943.03 193.56 L943.79 193.63 L944.55 193.70 L945.31 193.77 L946.08 193.85 L946.84 193.93 L947.60 194.01 L948.37 194.09 L949.13 194.18 L949.89 194.27 L950.66 194.36 L951.42 194.45 L952.19 194.55 L952.96 194.65 L953.72 194.75 L954.49 194.85 L955.26 194.96 L956.03 195.06 L956.80 195.17 L957.57 195.29 L958.34 195.40 L959.11 195.52 L959.88 195.64 L960.65 195.76 L961.42 195.88 L962.19 196.01 L962.97 196.14 L963.74 196.27 L964.52 196.41 L965.29 196.54 L966.07 196.68 L966.84 196.82 L967.62 196.96 L968.40 197.11 L969.17 197.25 L969.95 197.40 L970.73 197.56 L971.51 197.71 L972.29 197.87 L973.07 198.03 L973.85 198.19 L974.64 198.35 L975.42 198.51 L976.20 198.68 L976.99 198.85 L977.77 199.02 L978.56 199.20 L979.34 199.37 L980.13 199.55 L980.92 199.73 L981.70 199.91 L982.49 200.10 L983.28 200.29 L984.07 200.48 L984.86 200.67 L985.65 200.86 L986.44 201.06 L987.23 201.25 L988.03 201.45 L988.82 201.66 L989.61 201.86 L990.41 202.06 L991.20 202.27 L992.00 202.48 L992.79 202.70 L993.59 202.91 L994.39 203.13 L995.19 203.34 L995.98 203.56 L996.78 203.79 L997.58 204.01 L998.38 204.24 L999.19 204.46 L999.99 204.69 L1000.79 204.93 L1001.59 205.16 L1002.39 205.40 L1003.20 205.64 L1004.00 205.87 L1004.81 206.12 L1005.61 206.36 L1006.42 206.61 L1007.23 206.85 L1008.03 207.10 L1008.84 207.35 L1009.65 207.61 L1010.46 207.86 L1011.27 208.12 L1012.08 208.38 L1012.89 208.64 L1013.70 208.90 L1014.51 209.17 L1015.32 209.43 L1016.14 209.70 L1016.95 209.97 L1017.76 210.24 L1018.58 210.51 L1019.39 210.79 L1020.21 211.06 L1021.02 211.34 L1021.84 211.62 L1022.65 211.91 L1023.47 212.19 L1024.29 212.47 L1025.11 212.76 L1025.92 213.05 L1026.74 213.34 L1027.56 213.63 L1028.38 213.93 L1029.20 214.22 L1030.02 214.52 L1030.84 214.82 L1031.66 215.12 L1032.48 215.42 L1033.31 215.72 L1034.13 216.03 L1034.95 216.33 L1035.77 216.64 L1036.60 216.95 L1037.42 217.26 L1038.24 217.58 L1039.07 217.89 L1039.89 218.21 L1040.72 218.52 L1041.54 218.84 L1042.37 219.16 L1043.19 219.48 L1044.02 219.81 L1044.84 220.13 L1045.67 220.46 L1046.50 220.79 L1047.32 221.12 L1048.15 221.45 L1048.98 221.78 L1049.80 222.11 L1050.63 222.45 L1051.46 222.79 L1052.29 223.12 L1053.11 223.46 L1053.94 223.80 L1054.77 224.14 L1055.60 224.49 L1056.43 224.83 L1057.25 225.18 L1058.08 225.53 L1058.91 225.88 L1059.74 226.23 L1060.57 226.58 L1061.40 226.93 L1062.23 227.28 L1063.06 227.64 L1063.88 228.00" fill="none" stroke="#84d952" stroke-width="1.39" stroke-dasharray="1.39 2.29"/>
<path d="M1063.88 228.00 L1064.71 228.35 L1065.54 228.71 L1066.37 229.07 L1067.20 229.43 L1068.03 229.80 L1068.86 230.16 L1069.69 230.53 L1070.51 230.89 L1071.34 231.26 L1072.17 231.63 L1073.00 232.00" fill="none" stroke="#84d952" stroke-width="1.6"/>
<rect x="1071.80" y="230.80" width="2.4" height="2.4" fill="#ff6a40"/>
<path d="M555.97 267.97 L556.65 266.69 L557.40 265.41 L558.24 264.14 L559.15 262.88 L560.14 261.63 L561.20 260.39 L562.33 259.17 L563.51 257.98 L564.76 256.80 L566.07 255.66 L567.42 254.55 L568.82 253.47 L570.26 252.43 L571.73 251.43 L573.23 250.48 L574.76 249.57 L576.30 248.71 L577.86 247.91 L579.43 247.16 L580.99 246.47 L582.55 245.83 L584.11 245.26 L585.64 244.75 L587.16 244.30 L588.65 243.92 L590.11 243.61 L591.54 243.37 L592.93 243.19 L594.28 243.09 L595.57 243.05 L596.82 243.09 L598.01 243.19 L599.15 243.37 L600.23 243.61 L601.24 243.92 L602.20 244.30 L603.08 244.75 L603.90 245.26 L604.65 245.83 L605.33 246.47 L605.94 247.16 L606.48 247.91 L606.95 248.71 L607.35 249.57 L607.68 250.48 L607.94 251.43 L608.13 252.43 L608.25 253.47 L608.31 254.55 L608.29 255.66 L608.21 256.80 L608.07 257.98 L607.86 259.17 L607.59 260.39 L607.26 261.63 L606.88 262.88 L606.43 264.14 L605.93 265.41 L605.37 266.69 L604.76 267.97 L604.10 269.24 L603.39 270.51 L602.64 271.77 L601.84 273.01 L600.99 274.24 L600.10 275.45 L599.17 276.64 L598.20 277.80 L597.19 278.94 L596.15 280.04 L595.07 281.11 L593.97 282.14 L592.83 283.13 L591.66 284.08 L590.47 284.99 L589.26 285.85 L588.02 286.66 L586.77 287.42 L585.50 288.12 L584.21 288.77 L582.91 289.36 L581.60 289.90 L580.29 290.37 L578.97 290.79 L577.64 291.14 L576.33 291.43 L575.01 291.65 L573.70 291.82 L572.41 291.91 L571.13 291.95 L569.86 291.91 L568.62 291.82 L567.40 291.65 L566.21 291.43 L565.05 291.14 L563.93 290.79 L562.85 290.37 L561.81 289.90 L560.81 289.36 L559.87 288.77 L558.98 288.12 L558.15 287.42 L557.38 286.66 L556.67 285.85 L556.03 284.99 L555.46 284.08 L554.96 283.13 L554.54 282.14 L554.19 281.11 L553.93 280.04 L553.75 278.94 L553.65 277.80 L553.64 276.64 L553.71 275.45 L553.87 274.24 L554.12 273.01 L554.45 271.77 L554.87 270.51 L555.38 269.24 L555.97 267.97Z" fill="none" stroke="#2aae80" stroke-width="2.1"/>
<path d="M739.18 249.93 L739.58 248.66 L740.07 247.40 L740.62 246.13 L741.25 244.88 L741.94 243.63 L742.70 242.40 L743.52 241.18 L744.40 239.99 L745.34 238.81 L746.34 237.67 L747.39 236.56 L748.49 235.48 L749.63 234.44 L750.81 233.44 L752.03 232.48 L753.29 231.57 L754.57 230.71 L755.88 229.90 L757.20 229.15 L758.55 228.45 L759.90 227.81 L761.27 227.24 L762.63 226.72 L764.00 226.28 L765.36 225.89 L766.71 225.58 L768.05 225.33 L769.38 225.16 L770.68 225.05 L771.96 225.02 L773.21 225.05 L774.43 225.16 L775.61 225.33 L776.76 225.58 L777.87 225.89 L778.94 226.28 L779.96 226.72 L780.93 227.24 L781.85 227.81 L782.73 228.45 L783.55 229.15 L784.31 229.90 L785.02 230.71 L785.67 231.57 L786.26 232.48 L786.79 233.44 L787.26 234.44 L787.67 235.48 L788.01 236.56 L788.29 237.67 L788.51 238.81 L788.67 239.99 L788.76 241.18 L788.79 242.40 L788.76 243.63 L788.66 244.88 L788.50 246.13 L788.28 247.40 L787.99 248.66 L787.65 249.93 L787.25 251.19 L786.79 252.45 L786.27 253.70 L785.69 254.93 L785.07 256.15 L784.38 257.35 L783.65 258.52 L782.86 259.67 L782.03 260.79 L781.15 261.88 L780.23 262.93 L779.27 263.95 L778.26 264.93 L777.22 265.86 L776.14 266.75 L775.03 267.60 L773.89 268.39 L772.72 269.14 L771.52 269.83 L770.31 270.47 L769.07 271.05 L767.82 271.57 L766.55 272.04 L765.28 272.45 L763.99 272.79 L762.71 273.08 L761.42 273.30 L760.13 273.46 L758.85 273.55 L757.58 273.58 L756.32 273.55 L755.08 273.46 L753.86 273.30 L752.66 273.08 L751.48 272.79 L750.34 272.45 L749.23 272.04 L748.16 271.57 L747.12 271.05 L746.13 270.47 L745.18 269.83 L744.29 269.14 L743.44 268.39 L742.65 267.60 L741.92 266.75 L741.25 265.86 L740.64 264.93 L740.10 263.95 L739.62 262.93 L739.21 261.88 L738.87 260.79 L738.61 259.67 L738.42 258.52 L738.30 257.35 L738.25 256.15 L738.29 254.93 L738.40 253.70 L738.58 252.45 L738.84 251.19 L739.18 249.93Z" fill="none" stroke="#84d952" stroke-width="2.1"/>
<g stroke="#ff0000" stroke-width="1.5">
<path d="M584.90 278.40 H591.90 M588.40 274.90 V281.90"/>
<path d="M748.90 243.30 H755.90 M752.40 239.80 V246.80"/>
<path d="M758.10 239.50 H765.70 M761.90 235.70 V243.30"/>
</g>
<text transform="translate(570.75 271.10) scale(0.9485 1)" font-family="Liberation Sans, sans-serif" font-size="11.57" fill="#fff" xml:space="preserve">ORI</text>
<text transform="translate(752.93 253.10) scale(0.9393 1)" font-family="Liberation Sans, sans-serif" font-size="11.57" fill="#fff" xml:space="preserve">NTA</text>
<text transform="translate(315.42 29.60) scale(0.9220 1)" font-family="Liberation Mono, monospace" font-size="15.11" fill="#fff" xml:space="preserve">UK0020</text>
<text transform="translate(315.42 42.70) scale(0.9220 1)" font-family="Liberation Mono, monospace" font-size="15.11" fill="#fff" xml:space="preserve">Beg: 20251030 22:52:30 (sol = 217.42°)</text>
<text transform="translate(315.42 56.50) scale(0.9220 1)" font-family="Liberation Mono, monospace" font-size="15.11" fill="#fff" xml:space="preserve">End: 20251031 03:23:52 (sol = 217.61°)</text>
<text transform="translate(315.42 69.30) scale(0.9220 1)" font-family="Liberation Mono, monospace" font-size="15.11" fill="#fff" xml:space="preserve">--------------------------------------</text>
<text transform="translate(315.42 81.40) scale(0.9220 1)" font-family="Liberation Mono, monospace" font-size="15.11" fill="#fff" xml:space="preserve">NTA: 3</text>
<text transform="translate(315.42 94.50) scale(0.9220 1)" font-family="Liberation Mono, monospace" font-size="15.11" fill="#fff" xml:space="preserve">...: 1</text>
<text transform="translate(315.42 107.40) scale(0.9220 1)" font-family="Liberation Mono, monospace" font-size="15.11" fill="#fff" xml:space="preserve">ORI: 1</text>
<g stroke="#5a5a5a" stroke-width="2.08" stroke-dasharray="2.08 3.44">
<path d="M75.0 842.5 V641.5"/>
<path d="M219.0 842.5 V641.5"/>
<path d="M365.0 842.5 V641.5"/>
<path d="M506.0 842.5 V641.5"/>
<path d="M651.0 842.5 V641.5"/>
<path d="M797.0 842.5 V641.5"/>
<path d="M940.0 842.5 V641.5"/>
<path d="M1091.0 842.5 V641.5"/>
<path d="M1239.0 842.5 V641.5"/>
<path d="M1394.0 842.5 V641.5"/>
<path d="M1548.0 842.5 V641.5"/>
<path d="M1687.0 842.5 V641.5"/>
</g>
<g fill="#555555" font-family="Liberation Sans, sans-serif" font-size="100">
<text transform="translate(149.20 696.70) rotate(-90) scale(0.2652 0.3000)">APR</text>
<text transform="translate(294.90 701.59) rotate(-90) scale(0.2734 0.3043)">MAY</text>
<text transform="translate(435.51 690.81) rotate(-90) scale(0.2560 0.2943)">JUN</text>
<text transform="translate(576.50 686.31) rotate(-90) scale(0.2543 0.2957)">JUL</text>
<text transform="translate(723.90 701.00) rotate(-90) scale(0.2679 0.2958)">AUG</text>
<text transform="translate(871.61 694.48) rotate(-90) scale(0.2558 0.2944)">SEP</text>
<text transform="translate(1016.90 701.17) rotate(-90) scale(0.2745 0.3014)">OCT</text>
<text transform="translate(1169.61 704.40) rotate(-90) scale(0.2745 0.2915)">NOV</text>
<text transform="translate(1318.90 701.26) rotate(-90) scale(0.2698 0.3014)">DEC</text>
<text transform="translate(1468.89 689.11) rotate(-90) scale(0.2542 0.3057)">JAN</text>
<text transform="translate(1627.90 696.08) rotate(-90) scale(0.2602 0.3043)">FEB</text>
<text transform="translate(1766.10 705.52) rotate(-90) scale(0.2770 0.3000)">MAR</text>
</g>
<rect x="106.17" y="832.01" width="23.78" height="4.17" fill="#bddf26"/>
<rect x="165.00" y="832.01" width="180.68" height="4.17" fill="#bddf26"/>
<rect x="366.03" y="832.01" width="259.13" height="4.17" fill="#bddf26"/>
<rect x="635.69" y="832.01" width="151.26" height="4.17" fill="#bddf26"/>
<rect x="807.30" y="832.01" width="92.42" height="4.17" fill="#bddf26"/>
<rect x="920.07" y="832.01" width="53.20" height="4.17" fill="#bddf26"/>
<rect x="983.81" y="832.01" width="82.62" height="4.17" fill="#bddf26"/>
<rect x="1081.87" y="832.01" width="121.84" height="4.17" fill="#bddf26"/>
<rect x="1243.66" y="832.01" width="82.62" height="4.17" fill="#bddf26"/>
<rect x="1336.82" y="832.01" width="18.88" height="4.17" fill="#bddf26"/>
<rect x="1380.95" y="832.01" width="63.01" height="4.17" fill="#bddf26"/>
<rect x="1459.40" y="832.01" width="53.20" height="4.17" fill="#bddf26"/>
<rect x="1523.14" y="832.01" width="23.78" height="4.17" fill="#bddf26"/>
<rect x="1724.16" y="832.01" width="23.78" height="4.17" fill="#bddf26"/>
<rect x="1758.48" y="832.01" width="23.78" height="4.17" fill="#bddf26"/>
<rect x="165.00" y="815.65" width="23.78" height="4.17" fill="#81d34d"/>
<rect x="223.84" y="815.65" width="63.01" height="4.17" fill="#81d34d"/>
<rect x="312.09" y="815.65" width="28.69" height="4.17" fill="#81d34d"/>
<rect x="366.03" y="815.65" width="126.75" height="4.17" fill="#81d34d"/>
<rect x="508.21" y="815.65" width="146.36" height="4.17" fill="#81d34d"/>
<rect x="704.33" y="815.65" width="33.59" height="4.17" fill="#81d34d"/>
<rect x="772.98" y="815.65" width="72.81" height="4.17" fill="#81d34d"/>
<rect x="871.04" y="815.65" width="116.94" height="4.17" fill="#81d34d"/>
<rect x="1003.42" y="815.65" width="13.98" height="4.17" fill="#81d34d"/>
<rect x="1062.25" y="815.65" width="151.26" height="4.17" fill="#81d34d"/>
<rect x="1243.66" y="815.65" width="23.78" height="4.17" fill="#81d34d"/>
<rect x="1292.69" y="815.65" width="23.78" height="4.17" fill="#81d34d"/>
<rect x="1341.72" y="815.65" width="23.78" height="4.17" fill="#81d34d"/>
<rect x="1385.85" y="815.65" width="43.39" height="4.17" fill="#81d34d"/>
<rect x="1459.40" y="815.65" width="23.78" height="4.17" fill="#81d34d"/>
<rect x="1547.65" y="815.65" width="23.78" height="4.17" fill="#81d34d"/>
<rect x="165.00" y="799.29" width="23.78" height="4.17" fill="#4ec36b"/>
<rect x="258.16" y="799.29" width="229.71" height="4.17" fill="#4ec36b"/>
<rect x="508.21" y="799.29" width="107.13" height="4.17" fill="#4ec36b"/>
<rect x="625.89" y="799.29" width="92.42" height="4.17" fill="#4ec36b"/>
<rect x="728.85" y="799.29" width="97.33" height="4.17" fill="#4ec36b"/>
<rect x="949.48" y="799.29" width="200.29" height="4.17" fill="#4ec36b"/>
<rect x="1160.31" y="799.29" width="87.52" height="4.17" fill="#4ec36b"/>
<rect x="1258.37" y="799.29" width="185.58" height="4.17" fill="#4ec36b"/>
<rect x="1459.40" y="799.29" width="23.78" height="4.17" fill="#4ec36b"/>
<rect x="1552.55" y="799.29" width="23.78" height="4.17" fill="#4ec36b"/>
<rect x="194.42" y="782.93" width="23.78" height="4.17" fill="#29af7f"/>
<rect x="321.90" y="782.93" width="185.58" height="4.17" fill="#29af7f"/>
<rect x="518.02" y="782.93" width="23.78" height="4.17" fill="#29af7f"/>
<rect x="557.24" y="782.93" width="126.75" height="4.17" fill="#29af7f"/>
<rect x="807.30" y="782.93" width="23.78" height="4.17" fill="#29af7f"/>
<rect x="954.39" y="782.93" width="18.88" height="4.17" fill="#29af7f"/>
<rect x="988.71" y="782.93" width="136.55" height="4.17" fill="#29af7f"/>
<rect x="1155.41" y="782.93" width="63.01" height="4.17" fill="#29af7f"/>
<rect x="1243.66" y="782.93" width="23.78" height="4.17" fill="#29af7f"/>
<rect x="1317.21" y="782.93" width="23.78" height="4.17" fill="#29af7f"/>
<rect x="1395.66" y="782.93" width="23.78" height="4.17" fill="#29af7f"/>
<rect x="1464.30" y="782.93" width="185.58" height="4.17" fill="#29af7f"/>
<rect x="341.51" y="766.58" width="28.68" height="4.17" fill="#1f9a8a"/>
<rect x="410.15" y="766.58" width="38.49" height="4.17" fill="#1f9a8a"/>
<rect x="468.99" y="766.58" width="23.78" height="4.17" fill="#1f9a8a"/>
<rect x="527.83" y="766.58" width="18.88" height="4.17" fill="#1f9a8a"/>
<rect x="562.15" y="766.58" width="28.69" height="4.17" fill="#1f9a8a"/>
<rect x="616.08" y="766.58" width="33.59" height="4.17" fill="#1f9a8a"/>
<rect x="959.29" y="766.58" width="28.69" height="4.17" fill="#1f9a8a"/>
<rect x="1062.25" y="766.58" width="23.78" height="4.17" fill="#1f9a8a"/>
<rect x="1101.48" y="766.58" width="23.78" height="4.17" fill="#1f9a8a"/>
<rect x="1160.31" y="766.58" width="33.59" height="4.17" fill="#1f9a8a"/>
<rect x="1248.57" y="766.58" width="23.78" height="4.17" fill="#1f9a8a"/>
<rect x="1425.08" y="766.58" width="87.52" height="4.17" fill="#1f9a8a"/>
<rect x="419.96" y="750.22" width="23.78" height="4.17" fill="#25848e"/>
<rect x="532.73" y="750.22" width="23.78" height="4.17" fill="#25848e"/>
<rect x="567.05" y="750.22" width="23.78" height="4.17" fill="#25848e"/>
<rect x="620.98" y="750.22" width="121.84" height="4.17" fill="#25848e"/>
<rect x="969.10" y="750.22" width="165.97" height="4.17" fill="#25848e"/>
<rect x="1184.83" y="750.22" width="161.07" height="4.17" fill="#25848e"/>
<rect x="1469.20" y="750.22" width="23.78" height="4.17" fill="#25848e"/>
<rect x="429.77" y="733.86" width="23.78" height="4.17" fill="#2e6f8e"/>
<rect x="576.86" y="733.86" width="156.16" height="4.17" fill="#2e6f8e"/>
<rect x="993.61" y="733.86" width="112.04" height="4.17" fill="#2e6f8e"/>
<rect x="1116.19" y="733.86" width="107.13" height="4.17" fill="#2e6f8e"/>
<rect x="1263.28" y="733.86" width="28.69" height="4.17" fill="#2e6f8e"/>
<rect x="1488.81" y="733.86" width="23.78" height="4.17" fill="#2e6f8e"/>
<rect x="591.57" y="717.50" width="23.78" height="4.17" fill="#38588c"/>
<rect x="655.30" y="717.50" width="116.94" height="4.17" fill="#38588c"/>
<rect x="1072.06" y="717.50" width="170.87" height="4.17" fill="#38588c"/>
<rect x="1263.28" y="717.50" width="23.78" height="4.17" fill="#38588c"/>
<rect x="596.47" y="701.13" width="136.55" height="4.17" fill="#433e85"/>
<rect x="1091.67" y="701.13" width="28.69" height="4.17" fill="#433e85"/>
<rect x="1199.54" y="701.13" width="23.78" height="4.17" fill="#433e85"/>
<rect x="1273.08" y="701.13" width="53.20" height="4.17" fill="#433e85"/>
<rect x="1111.28" y="684.77" width="23.78" height="4.17" fill="#482173"/>
<path d="M1087 842.5 V641.5" stroke="#ff0000" stroke-width="2.1" stroke-dasharray="5.14 2.22" fill="none"/>
<g stroke="#ffffff" stroke-width="2.1">
<path d="M113.9 834.10 H122.1 M118.0 830.20 V838.00"/>
<path d="M240.9 834.10 H249.1 M245.0 830.20 V838.00"/>
<path d="M510.9 834.10 H519.1 M515.0 830.20 V838.00"/>
<path d="M706.9 834.10 H715.1 M711.0 830.20 V838.00"/>
<path d="M833.9 834.10 H842.1 M838.0 830.20 V838.00"/>
<path d="M961.9 834.10 H970.1 M966.0 830.20 V838.00"/>
<path d="M986.9 834.10 H995.1 M991.0 830.20 V838.00"/>
<path d="M1116.9 834.10 H1125.1 M1121.0 830.20 V838.00"/>
<path d="M1295.9 834.10 H1304.1 M1300.0 830.20 V838.00"/>
<path d="M1341.9 834.10 H1350.1 M1346.0 830.20 V838.00"/>
<path d="M1412.9 834.10 H1421.1 M1417.0 830.20 V838.00"/>
<path d="M1481.9 834.10 H1490.1 M1486.0 830.20 V838.00"/>
<path d="M1530.9 834.10 H1539.1 M1535.0 830.20 V838.00"/>
<path d="M1731.9 834.10 H1740.1 M1736.0 830.20 V838.00"/>
<path d="M1765.9 834.10 H1774.1 M1770.0 830.20 V838.00"/>
<path d="M172.9 817.74 H181.1 M177.0 813.84 V821.64"/>
<path d="M255.9 817.74 H264.1 M260.0 813.84 V821.64"/>
<path d="M323.9 817.74 H332.1 M328.0 813.84 V821.64"/>
<path d="M437.9 817.74 H446.1 M442.0 813.84 V821.64"/>
<path d="M598.9 817.74 H607.1 M603.0 813.84 V821.64"/>
<path d="M716.9 817.74 H725.1 M721.0 813.84 V821.64"/>
<path d="M793.9 817.74 H802.1 M798.0 813.84 V821.64"/>
<path d="M939.9 817.74 H948.1 M944.0 813.84 V821.64"/>
<path d="M1005.9 817.74 H1014.1 M1010.0 813.84 V821.64"/>
<path d="M1152.9 817.74 H1161.1 M1157.0 813.84 V821.64"/>
<path d="M1250.9 817.74 H1259.1 M1255.0 813.84 V821.64"/>
<path d="M1299.9 817.74 H1308.1 M1304.0 813.84 V821.64"/>
<path d="M1349.9 817.74 H1358.1 M1354.0 813.84 V821.64"/>
<path d="M1402.9 817.74 H1411.1 M1407.0 813.84 V821.64"/>
<path d="M1466.9 817.74 H1475.1 M1471.0 813.84 V821.64"/>
<path d="M1554.9 817.74 H1563.1 M1559.0 813.84 V821.64"/>
<path d="M174.9 801.38 H183.1 M179.0 797.48 V805.28"/>
<path d="M378.9 801.38 H387.1 M383.0 797.48 V805.28"/>
<path d="M544.9 801.38 H553.1 M549.0 797.48 V805.28"/>
<path d="M682.9 801.38 H691.1 M687.0 797.48 V805.28"/>
<path d="M741.9 801.38 H750.1 M746.0 797.48 V805.28"/>
<path d="M1074.9 801.38 H1083.1 M1079.0 797.48 V805.28"/>
<path d="M1216.9 801.38 H1225.1 M1221.0 797.48 V805.28"/>
<path d="M1304.9 801.38 H1313.1 M1309.0 797.48 V805.28"/>
<path d="M1466.9 801.38 H1475.1 M1471.0 797.48 V805.28"/>
<path d="M1559.9 801.38 H1568.1 M1564.0 797.48 V805.28"/>
<path d="M201.9 785.02 H210.1 M206.0 781.12 V788.92"/>
<path d="M400.9 785.02 H409.1 M405.0 781.12 V788.92"/>
<path d="M525.9 785.02 H534.1 M530.0 781.12 V788.92"/>
<path d="M638.9 785.02 H647.1 M643.0 781.12 V788.92"/>
<path d="M814.9 785.02 H823.1 M819.0 781.12 V788.92"/>
<path d="M959.9 785.02 H968.1 M964.0 781.12 V788.92"/>
<path d="M1040.9 785.02 H1049.1 M1045.0 781.12 V788.92"/>
<path d="M1187.9 785.02 H1196.1 M1192.0 781.12 V788.92"/>
<path d="M1250.9 785.02 H1259.1 M1255.0 781.12 V788.92"/>
<path d="M1324.9 785.02 H1333.1 M1329.0 781.12 V788.92"/>
<path d="M1402.9 785.02 H1411.1 M1407.0 781.12 V788.92"/>
<path d="M1545.9 785.02 H1554.1 M1550.0 781.12 V788.92"/>
<path d="M355.9 768.66 H364.1 M360.0 764.76 V772.56"/>
<path d="M426.9 768.66 H435.1 M431.0 764.76 V772.56"/>
<path d="M476.9 768.66 H485.1 M481.0 764.76 V772.56"/>
<path d="M535.9 768.66 H544.1 M540.0 764.76 V772.56"/>
<path d="M570.9 768.66 H579.1 M575.0 764.76 V772.56"/>
<path d="M630.9 768.66 H639.1 M635.0 764.76 V772.56"/>
<path d="M973.9 768.66 H982.1 M978.0 764.76 V772.56"/>
<path d="M1069.9 768.66 H1078.1 M1074.0 764.76 V772.56"/>
<path d="M1108.9 768.66 H1117.1 M1113.0 764.76 V772.56"/>
<path d="M1177.9 768.66 H1186.1 M1182.0 764.76 V772.56"/>
<path d="M1255.9 768.66 H1264.1 M1260.0 764.76 V772.56"/>
<path d="M1466.9 768.66 H1475.1 M1471.0 764.76 V772.56"/>
<path d="M427.9 752.30 H436.1 M432.0 748.40 V756.20"/>
<path d="M539.9 752.30 H548.1 M544.0 748.40 V756.20"/>
<path d="M574.9 752.30 H583.1 M579.0 748.40 V756.20"/>
<path d="M703.9 752.30 H712.1 M708.0 748.40 V756.20"/>
<path d="M1094.9 752.30 H1103.1 M1099.0 748.40 V756.20"/>
<path d="M1270.9 752.30 H1279.1 M1275.0 748.40 V756.20"/>
<path d="M1476.9 752.30 H1485.1 M1481.0 748.40 V756.20"/>
<path d="M437.9 735.94 H446.1 M442.0 732.04 V739.84"/>
<path d="M630.9 735.94 H639.1 M635.0 732.04 V739.84"/>
<path d="M1038.9 735.94 H1047.1 M1043.0 732.04 V739.84"/>
<path d="M1167.9 735.94 H1176.1 M1172.0 732.04 V739.84"/>
<path d="M1274.9 735.94 H1283.1 M1279.0 732.04 V739.84"/>
<path d="M1496.9 735.94 H1505.1 M1501.0 732.04 V739.84"/>
<path d="M598.9 719.58 H607.1 M603.0 715.68 V723.48"/>
<path d="M726.9 719.58 H735.1 M731.0 715.68 V723.48"/>
<path d="M1187.9 719.58 H1196.1 M1192.0 715.68 V723.48"/>
<path d="M1270.9 719.58 H1279.1 M1275.0 715.68 V723.48"/>
<path d="M687.9 703.22 H696.1 M692.0 699.32 V707.12"/>
<path d="M1101.9 703.22 H1110.1 M1106.0 699.32 V707.12"/>
<path d="M1206.9 703.22 H1215.1 M1211.0 699.32 V707.12"/>
<path d="M1299.9 703.22 H1308.1 M1304.0 699.32 V707.12"/>
<path d="M1118.9 686.86 H1127.1 M1123.0 682.96 V690.76"/>
</g>
<text transform="translate(107.75 831.70) scale(0.8734 1)" font-family="Liberation Sans, sans-serif" font-size="11.57" fill="#fff" xml:space="preserve">KSE</text>
<text transform="translate(245.54 831.70) scale(0.8690 1)" font-family="Liberation Sans, sans-serif" font-size="11.57" fill="#fff" xml:space="preserve">ETA</text>
<text transform="translate(484.22 831.70) scale(0.9403 1)" font-family="Liberation Sans, sans-serif" font-size="11.57" fill="#fff" xml:space="preserve">NZC</text>
<text transform="translate(699.46 831.70) scale(0.9366 1)" font-family="Liberation Sans, sans-serif" font-size="11.57" fill="#fff" xml:space="preserve">NDA</text>
<text transform="translate(844.04 831.70) scale(0.8144 1)" font-family="Liberation Sans, sans-serif" font-size="11.57" fill="#fff" xml:space="preserve">SPE</text>
<text transform="translate(935.67 831.70) scale(0.9185 1)" font-family="Liberation Sans, sans-serif" font-size="11.57" fill="#fff" xml:space="preserve">ARD</text>
<text transform="translate(1014.31 831.70) scale(0.8685 1)" font-family="Liberation Sans, sans-serif" font-size="11.57" fill="#fff" xml:space="preserve">EGE</text>
<text transform="translate(1131.92 831.70) scale(0.9393 1)" font-family="Liberation Sans, sans-serif" font-size="11.57" fill="#fff" xml:space="preserve">NTA</text>
<text transform="translate(1272.09 831.70) scale(0.9558 1)" font-family="Liberation Sans, sans-serif" font-size="11.57" fill="#fff" xml:space="preserve">MON</text>
<text transform="translate(1331.93 831.70) scale(0.9554 1)" font-family="Liberation Sans, sans-serif" font-size="11.57" fill="#fff" xml:space="preserve">URS</text>
<text transform="translate(1401.45 831.70) scale(0.9366 1)" font-family="Liberation Sans, sans-serif" font-size="11.57" fill="#fff" xml:space="preserve">AHY</text>
<text transform="translate(1472.93 831.70) scale(0.9820 1)" font-family="Liberation Sans, sans-serif" font-size="11.57" fill="#fff" xml:space="preserve">GUM</text>
<text transform="translate(1522.98 831.70) scale(0.9510 1)" font-family="Liberation Sans, sans-serif" font-size="11.57" fill="#fff" xml:space="preserve">OHY</text>
<text transform="translate(1724.83 831.70) scale(0.9506 1)" font-family="Liberation Sans, sans-serif" font-size="11.57" fill="#fff" xml:space="preserve">XHE</text>
<text transform="translate(1762.04 831.70) scale(0.9002 1)" font-family="Liberation Sans, sans-serif" font-size="11.57" fill="#fff" xml:space="preserve">EVI</text>
<text transform="translate(166.40 815.34) scale(0.9653 1)" font-family="Liberation Sans, sans-serif" font-size="11.57" fill="#fff" xml:space="preserve">AVB</text>
<text transform="translate(246.60 815.34) scale(0.8086 1)" font-family="Liberation Sans, sans-serif" font-size="11.57" fill="#fff" xml:space="preserve">ELY</text>
<text transform="translate(311.94 815.34) scale(0.9510 1)" font-family="Liberation Sans, sans-serif" font-size="11.57" fill="#fff" xml:space="preserve">CAM</text>
<text transform="translate(421.35 815.34) scale(0.8685 1)" font-family="Liberation Sans, sans-serif" font-size="11.57" fill="#fff" xml:space="preserve">SSG</text>
<text transform="translate(568.13 815.34) scale(0.8774 1)" font-family="Liberation Sans, sans-serif" font-size="11.57" fill="#fff" xml:space="preserve">PCA</text>
<text transform="translate(709.63 815.34) scale(0.9602 1)" font-family="Liberation Sans, sans-serif" font-size="11.57" fill="#fff" xml:space="preserve">AUD</text>
<text transform="translate(798.38 815.34) scale(0.9229 1)" font-family="Liberation Sans, sans-serif" font-size="11.57" fill="#fff" xml:space="preserve">AUR</text>
<text transform="translate(920.60 815.34) scale(0.9307 1)" font-family="Liberation Sans, sans-serif" font-size="11.57" fill="#fff" xml:space="preserve">DSX</text>
<text transform="translate(998.36 815.34) scale(0.9465 1)" font-family="Liberation Sans, sans-serif" font-size="11.57" fill="#fff" xml:space="preserve">OCU</text>
<text transform="translate(1126.35 815.34) scale(0.9185 1)" font-family="Liberation Sans, sans-serif" font-size="11.57" fill="#fff" xml:space="preserve">OER</text>
<text transform="translate(1243.67 815.34) scale(0.9554 1)" font-family="Liberation Sans, sans-serif" font-size="11.57" fill="#fff" xml:space="preserve">DKD</text>
<text transform="translate(1293.23 815.34) scale(0.9212 1)" font-family="Liberation Sans, sans-serif" font-size="11.57" fill="#fff" xml:space="preserve">DSV</text>
<text transform="translate(1344.62 815.34) scale(0.8690 1)" font-family="Liberation Sans, sans-serif" font-size="11.57" fill="#fff" xml:space="preserve">ALY</text>
<text transform="translate(1399.36 815.34) scale(0.8330 1)" font-family="Liberation Sans, sans-serif" font-size="11.57" fill="#fff" xml:space="preserve">JLE</text>
<text transform="translate(1460.79 815.34) scale(0.8556 1)" font-family="Liberation Sans, sans-serif" font-size="11.57" fill="#fff" xml:space="preserve">SCC</text>
<text transform="translate(1549.22 815.34) scale(0.8828 1)" font-family="Liberation Sans, sans-serif" font-size="11.57" fill="#fff" xml:space="preserve">FEV</text>
<text transform="translate(167.61 798.98) scale(0.8443 1)" font-family="Liberation Sans, sans-serif" font-size="11.57" fill="#fff" xml:space="preserve">LYR</text>
<text transform="translate(362.81 798.98) scale(0.8685 1)" font-family="Liberation Sans, sans-serif" font-size="11.57" fill="#fff" xml:space="preserve">JMC</text>
<text transform="translate(550.64 798.98) scale(0.8300 1)" font-family="Liberation Sans, sans-serif" font-size="11.57" fill="#fff" xml:space="preserve">JPE</text>
<text transform="translate(661.77 798.98) scale(0.8973 1)" font-family="Liberation Sans, sans-serif" font-size="11.57" fill="#fff" xml:space="preserve">PAU</text>
<text transform="translate(765.70 798.98) scale(0.9298 1)" font-family="Liberation Sans, sans-serif" font-size="11.57" fill="#fff" xml:space="preserve">NIA</text>
<text transform="translate(1039.61 798.98) scale(0.9022 1)" font-family="Liberation Sans, sans-serif" font-size="11.57" fill="#fff" xml:space="preserve">STA</text>
<text transform="translate(1194.17 798.98) scale(0.9245 1)" font-family="Liberation Sans, sans-serif" font-size="11.57" fill="#fff" xml:space="preserve">NOO</text>
<text transform="translate(1341.07 798.98) scale(0.9428 1)" font-family="Liberation Sans, sans-serif" font-size="11.57" fill="#fff" xml:space="preserve">COM</text>
<text transform="translate(1459.97 798.98) scale(0.8853 1)" font-family="Liberation Sans, sans-serif" font-size="11.57" fill="#fff" xml:space="preserve">NCC</text>
<text transform="translate(1554.13 798.98) scale(0.8781 1)" font-family="Liberation Sans, sans-serif" font-size="11.57" fill="#fff" xml:space="preserve">FED</text>
<text transform="translate(197.46 782.62) scale(0.9218 1)" font-family="Liberation Sans, sans-serif" font-size="11.57" fill="#fff" xml:space="preserve">HVI</text>
<text transform="translate(403.74 782.62) scale(0.9298 1)" font-family="Liberation Sans, sans-serif" font-size="11.57" fill="#fff" xml:space="preserve">ARI</text>
<text transform="translate(519.39 782.62) scale(0.9049 1)" font-family="Liberation Sans, sans-serif" font-size="11.57" fill="#fff" xml:space="preserve">SZC</text>
<text transform="translate(607.13 782.62) scale(0.9259 1)" font-family="Liberation Sans, sans-serif" font-size="11.57" fill="#fff" xml:space="preserve">CAP</text>
<text transform="translate(807.84 782.62) scale(0.9120 1)" font-family="Liberation Sans, sans-serif" font-size="11.57" fill="#fff" xml:space="preserve">NUE</text>
<text transform="translate(949.31 782.62) scale(0.9743 1)" font-family="Liberation Sans, sans-serif" font-size="11.57" fill="#fff" xml:space="preserve">OCT</text>
<text transform="translate(1049.89 782.62) scale(0.9485 1)" font-family="Liberation Sans, sans-serif" font-size="11.57" fill="#fff" xml:space="preserve">ORI</text>
<text transform="translate(1174.41 782.62) scale(0.9688 1)" font-family="Liberation Sans, sans-serif" font-size="11.57" fill="#fff" xml:space="preserve">AMO</text>
<text transform="translate(1244.21 782.62) scale(0.9120 1)" font-family="Liberation Sans, sans-serif" font-size="11.57" fill="#fff" xml:space="preserve">DPC</text>
<text transform="translate(1320.37 782.62) scale(0.9794 1)" font-family="Liberation Sans, sans-serif" font-size="11.57" fill="#fff" xml:space="preserve">XVI</text>
<text transform="translate(1395.50 782.62) scale(0.9420 1)" font-family="Liberation Sans, sans-serif" font-size="11.57" fill="#fff" xml:space="preserve">QUA</text>
<text transform="translate(1548.54 782.62) scale(0.9602 1)" font-family="Liberation Sans, sans-serif" font-size="11.57" fill="#fff" xml:space="preserve">AAN</text>
<text transform="translate(342.67 766.26) scale(0.9972 1)" font-family="Liberation Sans, sans-serif" font-size="11.57" fill="#fff" xml:space="preserve">TAH</text>
<text transform="translate(422.65 766.26) scale(0.8594 1)" font-family="Liberation Sans, sans-serif" font-size="11.57" fill="#fff" xml:space="preserve">JEA</text>
<text transform="translate(474.19 766.26) scale(0.8200 1)" font-family="Liberation Sans, sans-serif" font-size="11.57" fill="#fff" xml:space="preserve">JIP</text>
<text transform="translate(529.95 766.26) scale(0.8274 1)" font-family="Liberation Sans, sans-serif" font-size="11.57" fill="#fff" xml:space="preserve">PPS</text>
<text transform="translate(568.11 766.26) scale(0.9452 1)" font-family="Liberation Sans, sans-serif" font-size="11.57" fill="#fff" xml:space="preserve">ZCS</text>
<text transform="translate(620.31 766.26) scale(0.9783 1)" font-family="Liberation Sans, sans-serif" font-size="11.57" fill="#fff" xml:space="preserve">GDR</text>
<text transform="translate(959.85 766.26) scale(0.8940 1)" font-family="Liberation Sans, sans-serif" font-size="11.57" fill="#fff" xml:space="preserve">DRA</text>
<text transform="translate(1062.78 766.26) scale(0.9307 1)" font-family="Liberation Sans, sans-serif" font-size="11.57" fill="#fff" xml:space="preserve">LUM</text>
<text transform="translate(1102.55 766.26) scale(0.8818 1)" font-family="Liberation Sans, sans-serif" font-size="11.57" fill="#fff" xml:space="preserve">RPU</text>
<text transform="translate(1165.38 766.26) scale(1.0039 1)" font-family="Liberation Sans, sans-serif" font-size="11.57" fill="#fff" xml:space="preserve">THA</text>
<text transform="translate(1250.16 766.26) scale(0.8642 1)" font-family="Liberation Sans, sans-serif" font-size="11.57" fill="#fff" xml:space="preserve">PSU</text>
<text transform="translate(1460.58 766.26) scale(0.9120 1)" font-family="Liberation Sans, sans-serif" font-size="11.57" fill="#fff" xml:space="preserve">XCB</text>
<text transform="translate(422.66 749.90) scale(0.8274 1)" font-family="Liberation Sans, sans-serif" font-size="11.57" fill="#fff" xml:space="preserve">JRC</text>
<text transform="translate(533.07 749.90) scale(0.9602 1)" font-family="Liberation Sans, sans-serif" font-size="11.57" fill="#fff" xml:space="preserve">CAN</text>
<text transform="translate(568.59 749.90) scale(0.9225 1)" font-family="Liberation Sans, sans-serif" font-size="11.57" fill="#fff" xml:space="preserve">FAN</text>
<text transform="translate(671.62 749.90) scale(0.8508 1)" font-family="Liberation Sans, sans-serif" font-size="11.57" fill="#fff" xml:space="preserve">PER</text>
<text transform="translate(1039.10 749.90) scale(0.9243 1)" font-family="Liberation Sans, sans-serif" font-size="11.57" fill="#fff" xml:space="preserve">CTA</text>
<text transform="translate(1254.02 749.90) scale(0.9120 1)" font-family="Liberation Sans, sans-serif" font-size="11.57" fill="#fff" xml:space="preserve">HYD</text>
<text transform="translate(1468.87 749.90) scale(0.9783 1)" font-family="Liberation Sans, sans-serif" font-size="11.57" fill="#fff" xml:space="preserve">XUM</text>
<text transform="translate(429.62 733.54) scale(0.9376 1)" font-family="Liberation Sans, sans-serif" font-size="11.57" fill="#fff" xml:space="preserve">COR</text>
<text transform="translate(646.37 733.54) scale(0.9074 1)" font-family="Liberation Sans, sans-serif" font-size="11.57" fill="#fff" xml:space="preserve">SDA</text>
<text transform="translate(1040.78 733.54) scale(0.9218 1)" font-family="Liberation Sans, sans-serif" font-size="11.57" fill="#fff" xml:space="preserve">LMI</text>
<text transform="translate(1156.45 733.54) scale(0.9243 1)" font-family="Liberation Sans, sans-serif" font-size="11.57" fill="#fff" xml:space="preserve">LEO</text>
<text transform="translate(1264.35 733.54) scale(0.8864 1)" font-family="Liberation Sans, sans-serif" font-size="11.57" fill="#fff" xml:space="preserve">EHY</text>
<text transform="translate(1489.89 733.54) scale(0.8774 1)" font-family="Liberation Sans, sans-serif" font-size="11.57" fill="#fff" xml:space="preserve">ECV</text>
<text transform="translate(594.26 717.18) scale(0.8594 1)" font-family="Liberation Sans, sans-serif" font-size="11.57" fill="#fff" xml:space="preserve">JXA</text>
<text transform="translate(705.43 717.18) scale(0.8599 1)" font-family="Liberation Sans, sans-serif" font-size="11.57" fill="#fff" xml:space="preserve">KCG</text>
<text transform="translate(1146.00 717.18) scale(0.9602 1)" font-family="Liberation Sans, sans-serif" font-size="11.57" fill="#fff" xml:space="preserve">AND</text>
<text transform="translate(1263.28 717.18) scale(0.9554 1)" font-family="Liberation Sans, sans-serif" font-size="11.57" fill="#fff" xml:space="preserve">DAD</text>
<text transform="translate(658.90 700.82) scale(0.8642 1)" font-family="Liberation Sans, sans-serif" font-size="11.57" fill="#fff" xml:space="preserve">ERI</text>
<text transform="translate(1098.45 700.82) scale(0.8876 1)" font-family="Liberation Sans, sans-serif" font-size="11.57" fill="#fff" xml:space="preserve">SLD</text>
<text transform="translate(1199.90 700.82) scale(0.9185 1)" font-family="Liberation Sans, sans-serif" font-size="11.57" fill="#fff" xml:space="preserve">ORS</text>
<text transform="translate(1287.65 700.82) scale(0.9245 1)" font-family="Liberation Sans, sans-serif" font-size="11.57" fill="#fff" xml:space="preserve">GEM</text>
<text transform="translate(1111.32 684.46) scale(0.9229 1)" font-family="Liberation Sans, sans-serif" font-size="11.57" fill="#fff" xml:space="preserve">KUM</text>
<rect x="20.5" y="641.5" width="1764.0" height="201.0" fill="none" stroke="#ffffff" stroke-width="1.11"/>
<g stroke="#ffffff" stroke-width="1.11">
<path d="M20.50 842.5 V847.4"/>
<path d="M265.50 842.5 V847.4"/>
<path d="M510.50 842.5 V847.4"/>
<path d="M755.50 842.5 V847.4"/>
<path d="M1001.50 842.5 V847.4"/>
<path d="M1246.50 842.5 V847.4"/>
<path d="M1491.50 842.5 V847.4"/>
<path d="M1736.50 842.5 V847.4"/>
</g>
<text transform="translate(16.32 862.00) scale(1.0082 1)" font-family="Liberation Sans, sans-serif" font-size="14.46" fill="#fff" xml:space="preserve">0</text>
<text transform="translate(257.47 862.00) scale(1.0068 1)" font-family="Liberation Sans, sans-serif" font-size="14.46" fill="#fff" xml:space="preserve">50</text>
<text transform="translate(497.62 862.00) scale(1.0636 1)" font-family="Liberation Sans, sans-serif" font-size="14.46" fill="#fff" xml:space="preserve">100</text>
<text transform="translate(742.77 862.00) scale(1.0636 1)" font-family="Liberation Sans, sans-serif" font-size="14.46" fill="#fff" xml:space="preserve">150</text>
<text transform="translate(987.71 862.00) scale(1.0939 1)" font-family="Liberation Sans, sans-serif" font-size="14.46" fill="#fff" xml:space="preserve">200</text>
<text transform="translate(1232.86 862.00) scale(1.0939 1)" font-family="Liberation Sans, sans-serif" font-size="14.46" fill="#fff" xml:space="preserve">250</text>
<text transform="translate(1478.70 862.00) scale(1.0436 1)" font-family="Liberation Sans, sans-serif" font-size="14.46" fill="#fff" xml:space="preserve">300</text>
<text transform="translate(1723.85 862.00) scale(1.0436 1)" font-family="Liberation Sans, sans-serif" font-size="14.46" fill="#fff" xml:space="preserve">350</text>
<text transform="translate(829.01 881.90) scale(1.0932 1)" font-family="Liberation Sans, sans-serif" font-size="14.46" fill="#fff" xml:space="preserve">Solar longitude (deg)</text>
</svg></body></html>
